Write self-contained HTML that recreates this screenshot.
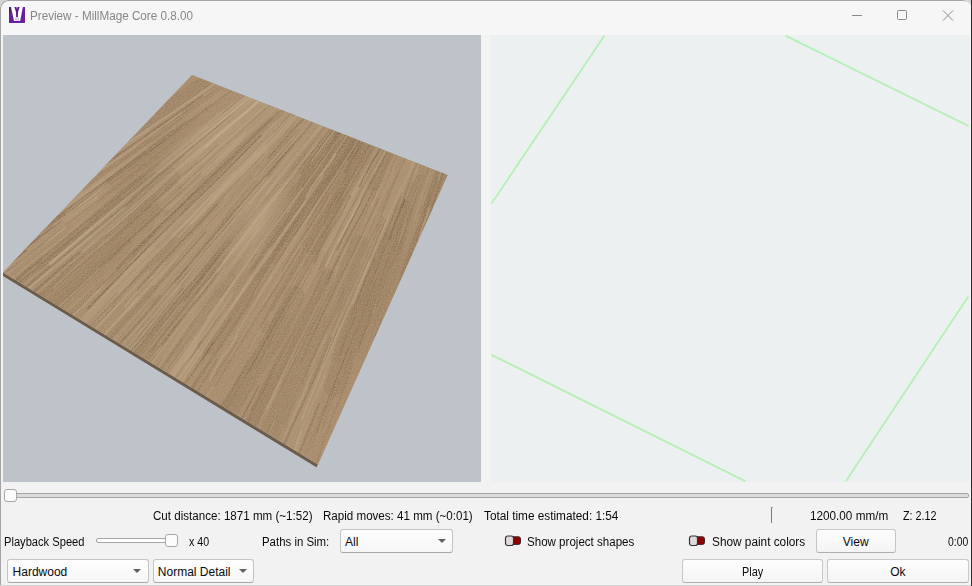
<!DOCTYPE html>
<html><head><meta charset="utf-8">
<style>
html,body{margin:0;padding:0;width:972px;height:586px;overflow:hidden;background:#d4d4d4;}
html::after{content:"";position:absolute;left:971px;top:0;width:1px;height:586px;background:#2c2c2c;}
html::before{content:"";position:absolute;left:0;top:585px;width:971px;height:1px;background:#8c8c8c;}
body{font-family:"Liberation Sans",sans-serif;font-size:12px;color:#1c1c1c;position:relative;}
.win{position:absolute;left:0;top:0;width:971px;height:585px;background:#f2f2f2;border-radius:8px 8px 0 0;overflow:hidden;}
.frame{position:absolute;left:0;top:0;width:971px;height:585px;border-radius:8px 8px 0 0;box-shadow:inset 1px 1px 0 #a4a4a4;pointer-events:none;}
.title{position:absolute;left:0;top:0;width:971px;height:35px;background:#f6f6f6;}
.t{position:absolute;white-space:pre;line-height:12px;transform-origin:0 0;}
.vl{position:absolute;left:3px;top:35px;width:478px;height:447px;background:#bdc3c8;overflow:hidden;}
.vr{position:absolute;left:482px;top:35px;width:488px;height:447px;background:#edf0f1;}
.vr .strip{position:absolute;left:0;top:0;width:9px;height:447px;background:#f2f3f3;}
.combo{position:absolute;background:linear-gradient(#fefefe,#f6f6f6);border:1px solid #c4c4c4;border-bottom-color:#a8a8a8;border-radius:3px;box-sizing:border-box;}
.btn{position:absolute;background:linear-gradient(#fdfdfd,#f4f4f4);border:1px solid #c8c8c8;border-bottom-color:#b0b0b0;border-radius:3px;box-sizing:border-box;}
.arrow{position:absolute;width:0;height:0;border-left:4px solid transparent;border-right:4px solid transparent;border-top:4.5px solid #606060;}
.track{position:absolute;box-sizing:border-box;border:1px solid #a6a6a6;border-radius:2px;}
.handle{position:absolute;box-sizing:border-box;background:#fcfcfc;border:1px solid #a8a8a8;border-radius:3px;}
.tog{position:absolute;}

</style></head><body>
<div class="win">
<div class="title"></div>
<!-- app icon -->
<svg style="position:absolute;left:9px;top:7px" width="16" height="16" viewBox="0 0 16 16">
  <rect x="0" y="0" width="16" height="16" fill="#6a1f9c"/>
  <rect x="0" y="0" width="1.6" height="6" fill="#3a2a3a"/>
  <polygon points="2,0 13.8,0 11.2,14 5,14" fill="#ffffff"/>
  <polygon points="5.3,0 7.5,0 8,2.6 8.5,0 10.7,0 9,5 8.9,10 7.1,10 7,5" fill="#5e1a90"/>
  <rect x="6" y="10" width="4" height="4" fill="#c8b4e0" opacity="0.6"/>
</svg>
<!-- window controls -->
<svg style="position:absolute;left:840px;top:0" width="131" height="35">
  <line x1="12" y1="15.5" x2="22" y2="15.5" stroke="#8a8a8a" stroke-width="1"/>
  <rect x="57.5" y="10.5" width="9" height="9" rx="1" fill="none" stroke="#8a8a8a" stroke-width="1"/>
  <line x1="103" y1="10.5" x2="113" y2="20.5" stroke="#8a8a8a" stroke-width="1"/>
  <line x1="113" y1="10.5" x2="103" y2="20.5" stroke="#8a8a8a" stroke-width="1"/>
</svg>
<div class="vl"><div style="position:absolute;left:-3px;top:-35px;"><svg style="position:absolute;left:0;top:0" width="972" height="586"><defs><clipPath id="bc"><polygon points="192,75 447.5,175 318,464.5 3,272.5"/></clipPath><radialGradient id="lp"><stop offset="0" stop-color="#ccb494" stop-opacity="0.55"/><stop offset="1" stop-color="#ccb494" stop-opacity="0"/></radialGradient><radialGradient id="dp"><stop offset="0" stop-color="#7a6044" stop-opacity="0.25"/><stop offset="1" stop-color="#7a6044" stop-opacity="0"/></radialGradient><filter id="nz" x="0" y="0" width="100%" height="100%"><feTurbulence type="fractalNoise" baseFrequency="0.9" numOctaves="2" seed="3"/><feColorMatrix values="0 0 0 0 0.45  0 0 0 0 0.36  0 0 0 0 0.26  0 0 0 -1.6 1.1"/></filter></defs><polygon points="3,272.5 318,464.5 316.4,467.3 3,276.0" fill="#6c5c4a"/><polygon points="192,75 447.5,175 318,464.5 3,272.5" fill="#a88a68"/><g clip-path="url(#bc)"><path d="M192.7,279.4 L171.8,307.0 L145.9,334.7 L123.2,362.3 L103.4,389.9" stroke="#c8b090" stroke-opacity="0.21" stroke-width="14.5" fill="none" stroke-linecap="round" stroke-linejoin="round"/><path d="M462.2,125.0 L455.9,152.1 L444.6,179.2 L436.5,206.4 L431.4,233.5" stroke="#c2a884" stroke-opacity="0.14" stroke-width="13.1" fill="none" stroke-linecap="round" stroke-linejoin="round"/><path d="M435.7,223.1 L422.0,276.5 L403.2,329.9 L387.7,383.2 L375.0,436.6" stroke="#8e7050" stroke-opacity="0.31" stroke-width="16.8" fill="none" stroke-linecap="round" stroke-linejoin="round"/><path d="M-3.0,286.3 L-55.5,329.3 L-113.1,372.4 L-167.4,415.4 L-218.9,458.5" stroke="#c2a884" stroke-opacity="0.13" stroke-width="5.3" fill="none" stroke-linecap="round" stroke-linejoin="round"/><path d="M419.7,219.3 L405.4,266.9 L386.1,314.4 L370.0,362.0 L356.9,409.6" stroke="#c2a884" stroke-opacity="0.22" stroke-width="10.5" fill="none" stroke-linecap="round" stroke-linejoin="round"/><path d="M328.0,275.3 L304.7,324.4 L276.4,373.6 L251.3,422.7 L229.2,471.9" stroke="#7e6446" stroke-opacity="0.32" stroke-width="12.8" fill="none" stroke-linecap="round" stroke-linejoin="round"/><path d="M321.3,70.2 L292.3,100.2 L258.3,130.2 L227.6,160.1 L199.7,190.1" stroke="#87694a" stroke-opacity="0.23" stroke-width="8.9" fill="none" stroke-linecap="round" stroke-linejoin="round"/><path d="M283.0,98.7 L180.8,196.4 L73.5,294.0 L-30.5,391.7 L-131.7,489.4" stroke="#7e6446" stroke-opacity="0.12" stroke-width="6.1" fill="none" stroke-linecap="round" stroke-linejoin="round"/><path d="M350.8,95.6 L290.3,173.7 L224.7,251.8 L162.4,329.9 L103.0,408.0" stroke="#87694a" stroke-opacity="0.23" stroke-width="21.7" fill="none" stroke-linecap="round" stroke-linejoin="round"/><path d="M325.4,73.0 L284.8,115.6 L239.2,158.2 L196.8,200.8 L157.3,243.5" stroke="#8e7050" stroke-opacity="0.27" stroke-width="10.3" fill="none" stroke-linecap="round" stroke-linejoin="round"/><path d="M221.8,92.7 L137.1,156.9 L47.4,221.1 L-39.1,285.3 L-122.6,349.5" stroke="#c2a884" stroke-opacity="0.26" stroke-width="6.0" fill="none" stroke-linecap="round" stroke-linejoin="round"/><path d="M534.4,157.8 L535.2,192.8 L531.0,227.8 L530.0,262.9 L531.9,297.9" stroke="#8e7050" stroke-opacity="0.14" stroke-width="18.1" fill="none" stroke-linecap="round" stroke-linejoin="round"/><path d="M333.8,45.5 L293.4,84.0 L248.1,122.4 L205.9,160.9 L166.7,199.4" stroke="#c8b090" stroke-opacity="0.32" stroke-width="21.5" fill="none" stroke-linecap="round" stroke-linejoin="round"/><path d="M540.1,99.7 L541.3,141.7 L537.6,183.7 L537.0,225.6 L539.4,267.6" stroke="#c2a884" stroke-opacity="0.32" stroke-width="15.2" fill="none" stroke-linecap="round" stroke-linejoin="round"/><path d="M458.8,98.4 L434.8,172.8 L405.8,247.2 L380.0,321.5 L357.1,395.9" stroke="#87694a" stroke-opacity="0.13" stroke-width="10.6" fill="none" stroke-linecap="round" stroke-linejoin="round"/><path d="M69.3,175.4 L-14.5,233.4 L-103.3,291.4 L-188.8,349.4 L-271.4,407.4" stroke="#c2a884" stroke-opacity="0.31" stroke-width="11.3" fill="none" stroke-linecap="round" stroke-linejoin="round"/><path d="M490.6,109.9 L485.1,145.5 L474.5,181.2 L467.2,216.9 L462.8,252.5" stroke="#87694a" stroke-opacity="0.28" stroke-width="8.1" fill="none" stroke-linecap="round" stroke-linejoin="round"/><path d="M402.7,209.0 L387.0,253.3 L366.2,297.7 L348.7,342.0 L334.1,386.4" stroke="#8e7050" stroke-opacity="0.30" stroke-width="21.0" fill="none" stroke-linecap="round" stroke-linejoin="round"/><path d="M146.3,149.7 L80.2,200.2 L9.1,250.7 L-58.8,301.3 L-123.8,351.8" stroke="#c2a884" stroke-opacity="0.27" stroke-width="5.7" fill="none" stroke-linecap="round" stroke-linejoin="round"/><path d="M510.5,75.4 L502.7,139.1 L490.0,202.8 L480.4,266.5 L473.8,330.1" stroke="#bca27e" stroke-opacity="0.32" stroke-width="13.3" fill="none" stroke-linecap="round" stroke-linejoin="round"/><path d="M416.1,97.1 L406.7,118.5 L392.4,140.0 L381.2,161.4 L373.0,182.8" stroke="#87694a" stroke-opacity="0.30" stroke-width="15.5" fill="none" stroke-linecap="round" stroke-linejoin="round"/><path d="M176.3,188.7 L89.0,269.8 L-3.3,351.0 L-92.3,432.1 L-178.4,513.2" stroke="#87694a" stroke-opacity="0.18" stroke-width="12.6" fill="none" stroke-linecap="round" stroke-linejoin="round"/><path d="M26.8,233.5 L-39.6,283.7 L-111.1,333.9 L-179.3,384.0 L-244.6,434.2" stroke="#8e7050" stroke-opacity="0.25" stroke-width="7.4" fill="none" stroke-linecap="round" stroke-linejoin="round"/><path d="M-44.1,309.6 L-68.9,330.3 L-98.7,351.0 L-125.3,371.7 L-149.0,392.3" stroke="#8e7050" stroke-opacity="0.26" stroke-width="5.6" fill="none" stroke-linecap="round" stroke-linejoin="round"/><path d="M430.2,60.3 L397.3,123.3 L359.4,186.3 L324.7,249.3 L293.0,312.3" stroke="#c8b090" stroke-opacity="0.15" stroke-width="13.2" fill="none" stroke-linecap="round" stroke-linejoin="round"/><path d="M155.5,262.1 L99.6,322.8 L38.8,383.5 L-18.9,444.2 L-73.6,504.9" stroke="#bca27e" stroke-opacity="0.26" stroke-width="5.8" fill="none" stroke-linecap="round" stroke-linejoin="round"/><path d="M354.3,48.5 L288.9,117.4 L218.5,186.3 L151.4,255.3 L87.2,324.2" stroke="#c8b090" stroke-opacity="0.31" stroke-width="16.6" fill="none" stroke-linecap="round" stroke-linejoin="round"/><path d="M235.8,62.5 L118.9,142.8 L-3.0,223.2 L-121.6,303.5 L-237.4,383.9" stroke="#87694a" stroke-opacity="0.24" stroke-width="16.3" fill="none" stroke-linecap="round" stroke-linejoin="round"/><path d="M536.6,234.4 L537.6,277.9 L533.6,321.4 L532.9,365.0 L535.1,408.5" stroke="#c8b090" stroke-opacity="0.31" stroke-width="20.0" fill="none" stroke-linecap="round" stroke-linejoin="round"/><path d="M256.8,208.4 L219.9,256.2 L178.0,304.1 L139.3,351.9 L103.6,399.8" stroke="#bca27e" stroke-opacity="0.13" stroke-width="14.2" fill="none" stroke-linecap="round" stroke-linejoin="round"/><path d="M171.3,176.2 L81.6,255.3 L-13.0,334.4 L-104.4,413.5 L-192.9,492.7" stroke="#7e6446" stroke-opacity="0.25" stroke-width="16.9" fill="none" stroke-linecap="round" stroke-linejoin="round"/><path d="M125.7,293.6 L85.5,337.8 L40.4,381.9 L-1.5,426.1 L-40.5,470.2" stroke="#bca27e" stroke-opacity="0.15" stroke-width="7.4" fill="none" stroke-linecap="round" stroke-linejoin="round"/><path d="M238.1,217.6 L185.6,282.3 L128.0,347.0 L73.7,411.6 L22.3,476.3" stroke="#7e6446" stroke-opacity="0.17" stroke-width="20.2" fill="none" stroke-linecap="round" stroke-linejoin="round"/><path d="M440.9,128.6 L431.3,159.2 L416.7,189.8 L405.4,220.4 L396.9,251.0" stroke="#87694a" stroke-opacity="0.24" stroke-width="8.4" fill="none" stroke-linecap="round" stroke-linejoin="round"/><path d="M194.0,314.5 L161.1,360.3 L123.2,406.1 L88.5,451.9 L56.7,497.6" stroke="#bca27e" stroke-opacity="0.13" stroke-width="19.2" fill="none" stroke-linecap="round" stroke-linejoin="round"/><path d="M102.4,185.6 L20.7,248.3 L-66.0,311.1 L-149.4,373.8 L-230.0,436.6" stroke="#c8b090" stroke-opacity="0.20" stroke-width="13.0" fill="none" stroke-linecap="round" stroke-linejoin="round"/><path d="M459.7,48.8 L416.1,154.2 L367.4,259.5 L322.0,364.9 L279.4,470.3" stroke="#c8b090" stroke-opacity="0.13" stroke-width="19.3" fill="none" stroke-linecap="round" stroke-linejoin="round"/><path d="M49.4,197.9 L-33.3,256.7 L-121.0,315.5 L-205.4,374.3 L-286.9,433.1" stroke="#c8b090" stroke-opacity="0.25" stroke-width="17.0" fill="none" stroke-linecap="round" stroke-linejoin="round"/><path d="M342.0,79.4 L322.2,103.7 L297.3,127.9 L275.7,152.1 L257.1,176.4" stroke="#c8b090" stroke-opacity="0.17" stroke-width="8.2" fill="none" stroke-linecap="round" stroke-linejoin="round"/><path d="M381.4,143.2 L368.8,169.0 L351.2,194.8 L336.8,220.6 L325.3,246.4" stroke="#bca27e" stroke-opacity="0.25" stroke-width="12.6" fill="none" stroke-linecap="round" stroke-linejoin="round"/><path d="M160.6,172.2 L80.8,240.0 L-4.0,307.8 L-85.6,375.6 L-164.3,443.5" stroke="#7e6446" stroke-opacity="0.12" stroke-width="19.0" fill="none" stroke-linecap="round" stroke-linejoin="round"/><path d="M141.9,180.1 L39.2,264.9 L-68.4,349.6 L-172.8,434.4 L-274.3,519.2" stroke="#7e6446" stroke-opacity="0.31" stroke-width="9.6" fill="none" stroke-linecap="round" stroke-linejoin="round"/><path d="M-20.6,301.1 L-75.6,346.2 L-135.7,391.3 L-192.5,436.4 L-246.4,481.4" stroke="#c2a884" stroke-opacity="0.14" stroke-width="19.4" fill="none" stroke-linecap="round" stroke-linejoin="round"/><path d="M92.9,199.3 L-0.4,272.2 L-98.8,345.1 L-193.9,418.0 L-286.2,490.9" stroke="#c2a884" stroke-opacity="0.20" stroke-width="12.7" fill="none" stroke-linecap="round" stroke-linejoin="round"/><path d="M477.2,67.7 L447.7,168.3 L413.1,268.9 L381.8,369.6 L353.4,470.2" stroke="#7e6446" stroke-opacity="0.32" stroke-width="21.1" fill="none" stroke-linecap="round" stroke-linejoin="round"/><path d="M401.1,314.5 L387.3,365.2 L368.5,415.8 L352.9,466.5 L340.2,517.2" stroke="#87694a" stroke-opacity="0.30" stroke-width="20.7" fill="none" stroke-linecap="round" stroke-linejoin="round"/><path d="M345.6,137.6 L329.1,163.8 L307.6,190.1 L289.3,216.4 L274.0,242.6" stroke="#7e6446" stroke-opacity="0.29" stroke-width="18.4" fill="none" stroke-linecap="round" stroke-linejoin="round"/><path d="M335.7,101.1 L258.8,194.6 L176.9,288.1 L98.2,381.6 L22.4,475.1" stroke="#c8b090" stroke-opacity="0.30" stroke-width="14.4" fill="none" stroke-linecap="round" stroke-linejoin="round"/><path d="M350.0,79.3 L323.2,112.7 L291.3,146.2 L262.7,179.6 L237.0,213.0" stroke="#bca27e" stroke-opacity="0.28" stroke-width="5.6" fill="none" stroke-linecap="round" stroke-linejoin="round"/><path d="M228.3,286.4 L199.3,328.6 L165.4,370.9 L134.7,413.1 L106.9,455.3" stroke="#bca27e" stroke-opacity="0.21" stroke-width="17.3" fill="none" stroke-linecap="round" stroke-linejoin="round"/><path d="M359.5,244.1 L337.1,295.4 L309.7,346.7 L285.6,398.0 L264.4,449.2" stroke="#7e6446" stroke-opacity="0.18" stroke-width="17.9" fill="none" stroke-linecap="round" stroke-linejoin="round"/><path d="M217.2,307.3 L183.9,356.2 L145.5,405.1 L110.5,453.9 L78.3,502.8" stroke="#c8b090" stroke-opacity="0.25" stroke-width="19.3" fill="none" stroke-linecap="round" stroke-linejoin="round"/><path d="M339.0,200.4 L321.9,232.5 L299.9,264.5 L281.0,296.5 L265.1,328.6" stroke="#7e6446" stroke-opacity="0.22" stroke-width="10.2" fill="none" stroke-linecap="round" stroke-linejoin="round"/><path d="M404.9,52.3 L330.4,161.2 L250.9,270.1 L174.7,379.0 L101.3,488.0" stroke="#c2a884" stroke-opacity="0.23" stroke-width="13.6" fill="none" stroke-linecap="round" stroke-linejoin="round"/><path d="M403.1,58.5 L355.8,129.8 L303.5,201.2 L254.4,272.6 L208.2,344.0" stroke="#87694a" stroke-opacity="0.26" stroke-width="21.8" fill="none" stroke-linecap="round" stroke-linejoin="round"/><path d="M257.8,178.1 L222.3,220.3 L181.9,262.5 L144.7,304.8 L110.4,347.0" stroke="#c8b090" stroke-opacity="0.17" stroke-width="21.3" fill="none" stroke-linecap="round" stroke-linejoin="round"/><path d="M506.3,93.6 L496.6,167.1 L482.0,240.6 L470.5,314.1 L462.0,387.6" stroke="#bca27e" stroke-opacity="0.18" stroke-width="20.9" fill="none" stroke-linecap="round" stroke-linejoin="round"/><path d="M516.2,83.5 L515.6,104.6 L509.9,125.7 L507.5,146.7 L508.0,167.8" stroke="#c2a884" stroke-opacity="0.13" stroke-width="7.2" fill="none" stroke-linecap="round" stroke-linejoin="round"/><path d="M123.4,244.7 L97.3,270.6 L66.2,296.6 L38.4,322.6 L13.4,348.6" stroke="#8e7050" stroke-opacity="0.14" stroke-width="17.3" fill="none" stroke-linecap="round" stroke-linejoin="round"/><path d="M401.7,46.5 L342.8,128.8 L278.8,211.1 L218.2,293.3 L160.4,375.6" stroke="#7e6446" stroke-opacity="0.30" stroke-width="9.3" fill="none" stroke-linecap="round" stroke-linejoin="round"/><path d="M477.2,101.1 L468.8,139.4 L455.3,177.8 L445.1,216.1 L437.8,254.4" stroke="#bca27e" stroke-opacity="0.23" stroke-width="15.5" fill="none" stroke-linecap="round" stroke-linejoin="round"/><path d="M348.3,137.3 L326.9,171.0 L300.5,204.7 L277.3,238.4 L257.1,272.2" stroke="#7e6446" stroke-opacity="0.25" stroke-width="15.0" fill="none" stroke-linecap="round" stroke-linejoin="round"/><path d="M409.7,77.5 L386.5,119.2 L358.3,160.9 L333.4,202.6 L311.3,244.3" stroke="#87694a" stroke-opacity="0.30" stroke-width="20.1" fill="none" stroke-linecap="round" stroke-linejoin="round"/><path d="M384.1,237.4 L373.4,267.5 L357.7,297.7 L345.2,327.8 L335.7,358.0" stroke="#8e7050" stroke-opacity="0.23" stroke-width="9.4" fill="none" stroke-linecap="round" stroke-linejoin="round"/><path d="M295.2,295.2 L266.0,350.2 L231.8,405.3 L200.9,460.4 L172.9,515.4" stroke="#7e6446" stroke-opacity="0.26" stroke-width="18.6" fill="none" stroke-linecap="round" stroke-linejoin="round"/><path d="M-12.7,273.2 L-81.8,326.7 L-156.0,380.2 L-226.9,433.6 L-294.8,487.1" stroke="#bca27e" stroke-opacity="0.32" stroke-width="13.6" fill="none" stroke-linecap="round" stroke-linejoin="round"/><path d="M274.2,199.2 L253.5,228.1 L227.9,256.9 L205.5,285.7 L186.0,314.5" stroke="#bca27e" stroke-opacity="0.22" stroke-width="5.4" fill="none" stroke-linecap="round" stroke-linejoin="round"/><path d="M283.5,66.7 L253.8,92.5 L219.1,118.2 L187.6,144.0 L159.1,169.8" stroke="#c8b090" stroke-opacity="0.31" stroke-width="8.5" fill="none" stroke-linecap="round" stroke-linejoin="round"/><path d="M519.0,159.4 L517.2,204.3 L510.4,249.1 L506.9,294.0 L506.2,338.9" stroke="#c8b090" stroke-opacity="0.20" stroke-width="12.9" fill="none" stroke-linecap="round" stroke-linejoin="round"/><path d="M263.0,90.8 L194.1,150.4 L120.2,210.0 L49.6,269.7 L-18.2,329.3" stroke="#c2a884" stroke-opacity="0.29" stroke-width="11.3" fill="none" stroke-linecap="round" stroke-linejoin="round"/><path d="M379.3,245.0 L376.7,253.2 L372.0,261.3 L368.6,269.5 L366.4,277.6" stroke="#bea684" stroke-opacity="0.21" stroke-width="1.1" fill="none"/><path d="M458.5,267.9 L456.0,283.5 L451.5,299.1 L448.4,314.7 L446.4,330.3" stroke="#bea684" stroke-opacity="0.48" stroke-width="2.2" fill="none"/><path d="M395.9,86.5 L371.8,125.6 L345.7,164.7 L320.8,203.7 L297.2,242.8" stroke="#d0bc9e" stroke-opacity="0.25" stroke-width="0.9" fill="none"/><path d="M-26.1,317.9 L-74.6,358.0 L-125.1,398.1 L-174.4,438.2 L-222.4,478.4" stroke="#7a6046" stroke-opacity="0.46" stroke-width="1.1" fill="none"/><path d="M419.8,176.7 L410.0,204.1 L398.2,231.5 L387.6,259.0 L378.3,286.4" stroke="#6e553c" stroke-opacity="0.17" stroke-width="1.1" fill="none"/><path d="M119.8,149.2 L51.0,197.6 L-19.7,245.9 L-89.2,294.3 L-157.5,342.6" stroke="#bea684" stroke-opacity="0.17" stroke-width="0.9" fill="none"/><path d="M319.6,70.7 L290.0,100.1 L258.3,129.5 L228.0,158.9 L198.8,188.2" stroke="#bea684" stroke-opacity="0.21" stroke-width="0.7" fill="none"/><path d="M396.1,49.1 L371.3,82.8 L344.5,116.4 L319.1,150.1 L294.8,183.7" stroke="#d0bc9e" stroke-opacity="0.49" stroke-width="0.7" fill="none"/><path d="M432.6,118.2 L423.4,141.6 L412.3,165.1 L402.4,188.6 L393.7,212.0" stroke="#84694c" stroke-opacity="0.17" stroke-width="0.9" fill="none"/><path d="M32.4,243.1 L-30.7,291.7 L-95.9,340.3 L-159.7,388.9 L-222.4,437.5" stroke="#7a6046" stroke-opacity="0.34" stroke-width="0.9" fill="none"/><path d="M263.5,279.0 L238.0,318.8 L210.5,358.6 L184.3,398.3 L159.3,438.1" stroke="#bea684" stroke-opacity="0.18" stroke-width="0.5" fill="none"/><path d="M-15.5,256.8 L-60.4,289.6 L-107.2,322.5 L-152.8,355.3 L-197.2,388.2" stroke="#6e553c" stroke-opacity="0.45" stroke-width="0.7" fill="none"/><path d="M278.8,165.0 L253.9,195.0 L227.0,225.0 L201.4,255.1 L177.0,285.1" stroke="#84694c" stroke-opacity="0.29" stroke-width="1.1" fill="none"/><path d="M166.5,339.1 L160.5,347.7 L152.6,356.4 L145.9,365.0 L140.4,373.7" stroke="#d0bc9e" stroke-opacity="0.38" stroke-width="0.9" fill="none"/><path d="M371.6,313.7 L368.8,323.5 L363.9,333.2 L360.2,343.0 L357.8,352.7" stroke="#6e553c" stroke-opacity="0.29" stroke-width="1.4" fill="none"/><path d="M325.9,69.4 L280.1,115.4 L232.3,161.4 L185.8,207.4 L140.4,253.3" stroke="#84694c" stroke-opacity="0.48" stroke-width="1.1" fill="none"/><path d="M351.7,79.4 L316.7,121.3 L279.7,163.3 L244.0,205.2 L209.4,247.1" stroke="#6e553c" stroke-opacity="0.17" stroke-width="1.1" fill="none"/><path d="M501.3,86.0 L495.8,120.1 L488.3,154.1 L482.1,188.1 L477.1,222.2" stroke="#c8b08e" stroke-opacity="0.36" stroke-width="0.7" fill="none"/><path d="M351.5,89.7 L330.8,116.1 L308.0,142.4 L286.6,168.7 L266.3,195.0" stroke="#d0bc9e" stroke-opacity="0.33" stroke-width="0.7" fill="none"/><path d="M359.8,207.8 L339.4,248.4 L317.0,288.9 L296.0,329.5 L276.0,370.1" stroke="#bea684" stroke-opacity="0.35" stroke-width="1.1" fill="none"/><path d="M274.6,232.4 L254.8,261.3 L233.0,290.2 L212.5,319.1 L193.1,347.9" stroke="#bea684" stroke-opacity="0.20" stroke-width="0.7" fill="none"/><path d="M104.8,283.9 L66.4,322.2 L26.0,360.6 L-13.1,398.9 L-51.0,437.2" stroke="#d0bc9e" stroke-opacity="0.25" stroke-width="1.4" fill="none"/><path d="M407.7,139.6 L385.0,188.7 L360.3,237.9 L336.9,287.0 L314.7,336.1" stroke="#c8b08e" stroke-opacity="0.22" stroke-width="0.7" fill="none"/><path d="M493.2,143.8 L492.5,152.5 L489.7,161.1 L488.2,169.7 L487.9,178.4" stroke="#6e553c" stroke-opacity="0.15" stroke-width="1.8" fill="none"/><path d="M-227.0,405.2 L-246.3,419.5 L-267.6,433.8 L-287.6,448.2 L-306.4,462.5" stroke="#6e553c" stroke-opacity="0.41" stroke-width="0.7" fill="none"/><path d="M180.2,177.5 L136.9,216.6 L91.6,255.8 L47.7,294.9 L4.8,334.1" stroke="#7a6046" stroke-opacity="0.22" stroke-width="0.9" fill="none"/><path d="M420.8,289.5 L410.2,329.7 L397.6,369.8 L386.3,410.0 L376.2,450.2" stroke="#d0bc9e" stroke-opacity="0.43" stroke-width="0.5" fill="none"/><path d="M158.8,187.6 L118.8,222.9 L76.8,258.1 L36.1,293.4 L-3.4,328.7" stroke="#d0bc9e" stroke-opacity="0.43" stroke-width="1.1" fill="none"/><path d="M525.1,113.5 L523.3,148.8 L519.5,184.1 L517.0,219.4 L515.6,254.7" stroke="#84694c" stroke-opacity="0.44" stroke-width="0.9" fill="none"/><path d="M313.5,212.8 L293.9,244.4 L272.4,276.1 L252.1,307.7 L233.0,339.3" stroke="#c8b08e" stroke-opacity="0.34" stroke-width="1.1" fill="none"/><path d="M458.5,125.3 L448.0,160.9 L435.5,196.6 L424.3,232.2 L414.3,267.9" stroke="#6e553c" stroke-opacity="0.18" stroke-width="1.1" fill="none"/><path d="M-176.8,392.7 L-198.5,409.5 L-222.2,426.3 L-244.6,443.1 L-265.9,459.9" stroke="#84694c" stroke-opacity="0.26" stroke-width="0.9" fill="none"/><path d="M349.9,216.4 L333.1,249.2 L314.3,281.9 L296.8,314.7 L280.5,347.5" stroke="#6e553c" stroke-opacity="0.26" stroke-width="0.9" fill="none"/><path d="M431.0,436.9 L426.6,463.9 L420.1,490.9 L414.9,517.9 L410.9,544.9" stroke="#d0bc9e" stroke-opacity="0.34" stroke-width="1.8" fill="none"/><path d="M-47.7,371.4 L-56.6,379.9 L-67.6,388.5 L-77.3,397.0 L-85.9,405.5" stroke="#c8b08e" stroke-opacity="0.18" stroke-width="1.8" fill="none"/><path d="M374.7,187.3 L363.2,211.4 L349.7,235.5 L337.5,259.6 L326.5,283.6" stroke="#6e553c" stroke-opacity="0.41" stroke-width="1.4" fill="none"/><path d="M89.4,221.7 L36.0,265.6 L-19.4,309.4 L-73.5,353.2 L-126.5,397.0" stroke="#c8b08e" stroke-opacity="0.18" stroke-width="1.4" fill="none"/><path d="M446.6,158.4 L444.7,166.8 L440.7,175.3 L438.1,183.7 L436.6,192.1" stroke="#84694c" stroke-opacity="0.21" stroke-width="0.7" fill="none"/><path d="M431.5,258.2 L426.2,279.9 L418.9,301.6 L412.9,323.3 L408.1,345.1" stroke="#84694c" stroke-opacity="0.26" stroke-width="1.1" fill="none"/><path d="M65.1,301.4 L53.4,313.1 L39.7,324.7 L27.3,336.3 L16.0,348.0" stroke="#c8b08e" stroke-opacity="0.16" stroke-width="0.5" fill="none"/><path d="M371.7,403.1 L365.5,425.0 L357.4,446.8 L350.6,468.7 L345.0,490.6" stroke="#6e553c" stroke-opacity="0.32" stroke-width="1.1" fill="none"/><path d="M232.7,237.5 L208.8,267.8 L182.9,298.1 L158.3,328.5 L134.9,358.8" stroke="#7a6046" stroke-opacity="0.39" stroke-width="0.9" fill="none"/><path d="M313.2,370.5 L298.0,406.3 L280.7,442.2 L264.8,478.0 L250.0,513.8" stroke="#c8b08e" stroke-opacity="0.29" stroke-width="1.8" fill="none"/><path d="M394.9,423.1 L386.6,457.8 L376.3,492.5 L367.2,527.2 L359.3,562.0" stroke="#6e553c" stroke-opacity="0.46" stroke-width="2.2" fill="none"/><path d="M288.4,208.2 L279.3,221.9 L268.2,235.6 L258.3,249.3 L249.6,263.0" stroke="#6e553c" stroke-opacity="0.30" stroke-width="1.8" fill="none"/><path d="M401.0,195.7 L389.2,225.7 L375.4,255.7 L362.9,285.7 L351.6,315.7" stroke="#6e553c" stroke-opacity="0.26" stroke-width="1.8" fill="none"/><path d="M67.7,299.2 L25.2,339.7 L-19.4,380.1 L-62.6,420.6 L-104.7,461.1" stroke="#84694c" stroke-opacity="0.19" stroke-width="0.5" fill="none"/><path d="M-116.6,403.7 L-126.7,412.8 L-138.9,421.8 L-149.7,430.9 L-159.3,439.9" stroke="#c8b08e" stroke-opacity="0.35" stroke-width="0.5" fill="none"/><path d="M-71.0,326.9 L-112.8,359.7 L-156.7,392.5 L-199.3,425.2 L-240.7,458.0" stroke="#84694c" stroke-opacity="0.23" stroke-width="0.7" fill="none"/><path d="M-13.3,343.0 L-36.2,363.8 L-61.1,384.5 L-84.7,405.2 L-107.1,426.0" stroke="#d0bc9e" stroke-opacity="0.21" stroke-width="0.7" fill="none"/><path d="M305.4,201.0 L273.1,249.2 L238.7,297.3 L205.7,345.4 L173.8,393.5" stroke="#d0bc9e" stroke-opacity="0.32" stroke-width="2.2" fill="none"/><path d="M360.3,199.8 L352.1,216.5 L342.0,233.3 L333.1,250.0 L325.5,266.7" stroke="#d0bc9e" stroke-opacity="0.45" stroke-width="2.2" fill="none"/><path d="M-82.9,349.7 L-133.9,390.6 L-187.0,431.6 L-238.8,472.6 L-289.4,513.6" stroke="#84694c" stroke-opacity="0.43" stroke-width="2.2" fill="none"/><path d="M42.2,220.0 L18.3,238.0 L-7.6,256.0 L-32.2,273.9 L-55.7,291.9" stroke="#d0bc9e" stroke-opacity="0.47" stroke-width="0.7" fill="none"/><path d="M333.2,97.9 L294.1,144.0 L253.0,190.1 L213.2,236.2 L174.6,282.3" stroke="#6e553c" stroke-opacity="0.42" stroke-width="2.2" fill="none"/><path d="M415.0,253.8 L411.3,267.7 L405.6,281.6 L401.1,295.5 L397.9,309.4" stroke="#bea684" stroke-opacity="0.24" stroke-width="0.7" fill="none"/><path d="M461.3,73.0 L454.9,91.9 L446.4,110.9 L439.3,129.9 L433.4,148.9" stroke="#6e553c" stroke-opacity="0.44" stroke-width="0.5" fill="none"/><path d="M286.6,422.2 L272.7,454.6 L256.8,487.1 L242.1,519.5 L228.7,551.9" stroke="#bea684" stroke-opacity="0.31" stroke-width="0.5" fill="none"/><path d="M402.2,406.7 L400.0,418.1 L395.9,429.4 L393.0,440.8 L391.3,452.2" stroke="#6e553c" stroke-opacity="0.30" stroke-width="0.9" fill="none"/><path d="M469.3,103.0 L457.2,145.9 L443.1,188.7 L430.3,231.6 L418.7,274.5" stroke="#7a6046" stroke-opacity="0.33" stroke-width="0.7" fill="none"/><path d="M164.5,226.9 L126.7,264.8 L86.9,302.7 L48.4,340.6 L11.0,378.5" stroke="#84694c" stroke-opacity="0.26" stroke-width="0.9" fill="none"/><path d="M191.7,224.7 L146.3,273.3 L98.8,321.9 L52.7,370.5 L7.7,419.1" stroke="#84694c" stroke-opacity="0.29" stroke-width="1.8" fill="none"/><path d="M433.0,230.1 L427.9,250.1 L420.7,270.0 L414.9,290.0 L410.2,310.0" stroke="#7a6046" stroke-opacity="0.40" stroke-width="1.8" fill="none"/><path d="M-15.5,286.4 L-40.4,306.3 L-67.4,326.1 L-93.0,346.0 L-117.4,365.8" stroke="#84694c" stroke-opacity="0.22" stroke-width="2.2" fill="none"/><path d="M165.3,262.2 L155.7,273.4 L144.0,284.6 L133.7,295.8 L124.5,307.0" stroke="#d0bc9e" stroke-opacity="0.41" stroke-width="1.4" fill="none"/><path d="M192.7,149.5 L160.8,177.0 L126.9,204.5 L94.2,231.9 L62.8,259.4" stroke="#d0bc9e" stroke-opacity="0.26" stroke-width="1.1" fill="none"/><path d="M300.9,288.7 L294.4,301.8 L285.8,314.9 L278.5,327.9 L272.4,341.0" stroke="#c8b08e" stroke-opacity="0.19" stroke-width="1.1" fill="none"/><path d="M331.3,225.3 L310.6,262.7 L287.9,300.1 L266.5,337.5 L246.3,374.9" stroke="#7a6046" stroke-opacity="0.16" stroke-width="0.7" fill="none"/><path d="M-104.7,348.5 L-132.8,370.5 L-163.0,392.5 L-191.8,414.5 L-219.5,436.6" stroke="#6e553c" stroke-opacity="0.30" stroke-width="0.5" fill="none"/><path d="M387.6,368.4 L381.0,392.3 L372.5,416.2 L365.3,440.2 L359.2,464.1" stroke="#6e553c" stroke-opacity="0.42" stroke-width="1.4" fill="none"/><path d="M82.8,320.0 L34.8,369.2 L-15.2,418.4 L-63.9,467.7 L-111.4,516.9" stroke="#bea684" stroke-opacity="0.29" stroke-width="1.1" fill="none"/><path d="M432.3,172.4 L425.3,194.5 L416.3,216.5 L408.6,238.5 L402.1,260.6" stroke="#bea684" stroke-opacity="0.16" stroke-width="1.8" fill="none"/><path d="M270.9,355.4 L248.5,398.0 L224.0,440.6 L200.9,483.1 L178.9,525.7" stroke="#c8b08e" stroke-opacity="0.33" stroke-width="0.5" fill="none"/><path d="M301.0,259.3 L288.3,281.8 L273.6,304.3 L260.2,326.8 L247.9,349.2" stroke="#84694c" stroke-opacity="0.47" stroke-width="0.7" fill="none"/><path d="M248.0,246.4 L220.2,284.3 L190.4,322.2 L161.8,360.1 L134.5,398.0" stroke="#c8b08e" stroke-opacity="0.50" stroke-width="0.7" fill="none"/><path d="M467.9,119.2 L465.5,130.2 L461.1,141.2 L458.0,152.3 L456.0,163.3" stroke="#c8b08e" stroke-opacity="0.37" stroke-width="0.7" fill="none"/><path d="M-75.5,411.6 L-100.1,434.5 L-126.7,457.3 L-152.1,480.2 L-176.2,503.0" stroke="#7a6046" stroke-opacity="0.27" stroke-width="1.4" fill="none"/><path d="M102.4,401.6 L78.5,432.2 L52.6,462.8 L28.0,493.4 L4.5,524.0" stroke="#84694c" stroke-opacity="0.20" stroke-width="0.5" fill="none"/><path d="M153.4,436.9 L125.9,479.1 L96.3,521.3 L68.0,563.6 L40.9,605.8" stroke="#c8b08e" stroke-opacity="0.47" stroke-width="1.4" fill="none"/><path d="M209.9,398.8 L199.8,416.5 L187.6,434.3 L176.8,452.0 L167.1,469.7" stroke="#c8b08e" stroke-opacity="0.25" stroke-width="0.5" fill="none"/><path d="M402.8,70.5 L397.8,79.4 L390.7,88.2 L385.0,97.1 L380.4,106.0" stroke="#84694c" stroke-opacity="0.34" stroke-width="2.2" fill="none"/><path d="M-114.8,402.6 L-154.4,436.2 L-196.1,469.9 L-236.4,503.5 L-275.6,537.2" stroke="#84694c" stroke-opacity="0.45" stroke-width="1.8" fill="none"/><path d="M432.6,53.2 L416.6,83.2 L398.6,113.1 L381.9,143.0 L366.4,173.0" stroke="#6e553c" stroke-opacity="0.29" stroke-width="2.2" fill="none"/><path d="M178.9,137.7 L119.1,184.8 L57.2,231.8 L-3.4,278.9 L-62.8,326.0" stroke="#84694c" stroke-opacity="0.20" stroke-width="1.1" fill="none"/><path d="M65.7,201.3 L27.0,229.9 L-13.7,258.6 L-53.1,287.2 L-91.4,315.9" stroke="#84694c" stroke-opacity="0.43" stroke-width="2.2" fill="none"/><path d="M4.8,265.9 L-26.9,290.7 L-60.6,315.5 L-93.0,340.3 L-124.2,365.1" stroke="#84694c" stroke-opacity="0.47" stroke-width="0.9" fill="none"/><path d="M163.1,213.6 L130.4,245.1 L95.7,276.7 L62.4,308.2 L30.1,339.8" stroke="#bea684" stroke-opacity="0.29" stroke-width="1.1" fill="none"/><path d="M440.0,401.7 L436.8,422.8 L431.5,444.0 L427.6,465.1 L424.8,486.2" stroke="#84694c" stroke-opacity="0.30" stroke-width="1.4" fill="none"/><path d="M-40.7,279.0 L-94.2,318.5 L-149.7,357.9 L-204.0,397.4 L-257.0,436.8" stroke="#d0bc9e" stroke-opacity="0.41" stroke-width="1.8" fill="none"/><path d="M169.4,218.8 L140.5,247.6 L109.6,276.5 L80.0,305.4 L51.6,334.2" stroke="#c8b08e" stroke-opacity="0.19" stroke-width="1.4" fill="none"/><path d="M290.8,135.7 L273.2,156.2 L253.5,176.7 L235.1,197.2 L217.9,217.7" stroke="#6e553c" stroke-opacity="0.33" stroke-width="0.5" fill="none"/><path d="M136.7,306.3 L97.6,350.6 L56.4,394.9 L16.6,439.3 L-22.1,483.6" stroke="#bea684" stroke-opacity="0.49" stroke-width="0.7" fill="none"/><path d="M187.2,266.7 L148.3,312.6 L107.4,358.5 L67.8,404.4 L29.3,450.3" stroke="#84694c" stroke-opacity="0.41" stroke-width="2.2" fill="none"/><path d="M61.2,221.3 L35.6,241.4 L7.9,261.4 L-18.4,281.5 L-43.6,301.6" stroke="#84694c" stroke-opacity="0.35" stroke-width="2.2" fill="none"/><path d="M384.2,220.0 L371.8,250.1 L357.4,280.1 L344.4,310.1 L332.5,340.2" stroke="#6e553c" stroke-opacity="0.30" stroke-width="0.5" fill="none"/><path d="M82.2,221.9 L56.9,242.8 L29.5,263.6 L3.4,284.5 L-21.6,305.3" stroke="#c8b08e" stroke-opacity="0.26" stroke-width="1.8" fill="none"/><path d="M277.0,121.1 L233.8,165.1 L188.5,209.1 L144.6,253.1 L101.8,297.1" stroke="#d0bc9e" stroke-opacity="0.46" stroke-width="0.7" fill="none"/><path d="M450.4,46.4 L434.4,80.9 L416.4,115.4 L399.6,149.9 L384.1,184.4" stroke="#7a6046" stroke-opacity="0.46" stroke-width="0.5" fill="none"/><path d="M273.1,419.8 L250.4,468.8 L225.7,517.8 L202.2,566.8 L180.0,615.8" stroke="#84694c" stroke-opacity="0.23" stroke-width="1.4" fill="none"/><path d="M382.8,149.6 L369.7,174.9 L354.6,200.3 L340.8,225.7 L328.2,251.0" stroke="#d0bc9e" stroke-opacity="0.49" stroke-width="0.9" fill="none"/><path d="M486.5,107.8 L477.3,151.9 L466.1,196.0 L456.1,240.1 L447.4,284.2" stroke="#d0bc9e" stroke-opacity="0.30" stroke-width="0.9" fill="none"/><path d="M47.8,240.6 L22.8,260.6 L-4.2,280.7 L-29.9,300.7 L-54.5,320.8" stroke="#6e553c" stroke-opacity="0.40" stroke-width="1.8" fill="none"/><path d="M246.7,131.6 L225.8,151.9 L202.8,172.2 L181.1,192.5 L160.6,212.8" stroke="#c8b08e" stroke-opacity="0.36" stroke-width="2.2" fill="none"/><path d="M508.5,76.0 L501.4,125.3 L492.3,174.6 L484.5,223.8 L477.8,273.1" stroke="#6e553c" stroke-opacity="0.37" stroke-width="1.8" fill="none"/><path d="M191.5,274.6 L166.9,305.0 L140.2,335.3 L114.8,365.6 L90.6,396.0" stroke="#6e553c" stroke-opacity="0.15" stroke-width="1.4" fill="none"/><path d="M318.4,115.8 L306.2,130.9 L291.9,146.1 L278.9,161.2 L267.1,176.3" stroke="#7a6046" stroke-opacity="0.50" stroke-width="1.4" fill="none"/><path d="M458.6,53.4 L447.7,80.6 L434.9,107.7 L423.3,134.8 L412.9,161.9" stroke="#6e553c" stroke-opacity="0.50" stroke-width="0.5" fill="none"/><path d="M458.2,65.6 L442.5,106.1 L424.9,146.6 L408.5,187.1 L393.3,227.7" stroke="#7a6046" stroke-opacity="0.17" stroke-width="1.1" fill="none"/><path d="M472.7,242.3 L465.5,285.7 L456.3,329.1 L448.4,372.5 L441.6,416.0" stroke="#c8b08e" stroke-opacity="0.33" stroke-width="0.9" fill="none"/><path d="M296.1,351.9 L289.6,366.4 L281.2,380.9 L274.0,395.4 L268.0,409.9" stroke="#bea684" stroke-opacity="0.21" stroke-width="1.4" fill="none"/><path d="M241.6,354.6 L217.5,395.7 L191.4,436.9 L166.6,478.0 L143.0,519.1" stroke="#bea684" stroke-opacity="0.42" stroke-width="0.7" fill="none"/><path d="M217.7,144.5 L200.4,160.6 L181.1,176.7 L163.0,192.9 L146.2,209.0" stroke="#84694c" stroke-opacity="0.36" stroke-width="1.1" fill="none"/><path d="M501.7,283.3 L499.1,316.7 L494.6,350.0 L491.3,383.4 L489.3,416.8" stroke="#c8b08e" stroke-opacity="0.26" stroke-width="0.5" fill="none"/><path d="M478.9,52.4 L475.7,64.7 L470.4,77.1 L466.3,89.4 L463.5,101.8" stroke="#7a6046" stroke-opacity="0.45" stroke-width="1.4" fill="none"/><path d="M249.8,98.5 L225.6,119.2 L199.4,139.9 L174.5,160.6 L150.8,181.4" stroke="#84694c" stroke-opacity="0.23" stroke-width="1.8" fill="none"/><path d="M137.4,145.9 L92.9,178.4 L46.3,210.9 L1.1,243.4 L-43.0,276.0" stroke="#bea684" stroke-opacity="0.33" stroke-width="0.9" fill="none"/><path d="M212.0,103.9 L163.8,140.8 L113.5,177.6 L64.6,214.5 L16.9,251.3" stroke="#7a6046" stroke-opacity="0.24" stroke-width="2.2" fill="none"/><path d="M446.7,185.8 L442.5,202.5 L436.4,219.2 L431.5,235.9 L427.8,252.5" stroke="#7a6046" stroke-opacity="0.29" stroke-width="2.2" fill="none"/><path d="M519.9,97.8 L518.0,124.7 L514.1,151.5 L511.5,178.4 L510.1,205.2" stroke="#84694c" stroke-opacity="0.50" stroke-width="0.5" fill="none"/><path d="M443.7,96.6 L434.5,120.8 L423.2,145.0 L413.3,169.2 L404.5,193.4" stroke="#7a6046" stroke-opacity="0.46" stroke-width="0.5" fill="none"/><path d="M54.0,326.8 L4.0,375.8 L-48.0,424.8 L-98.7,473.8 L-148.3,522.7" stroke="#c8b08e" stroke-opacity="0.39" stroke-width="1.1" fill="none"/><path d="M332.7,207.3 L326.8,218.5 L318.9,229.6 L312.2,240.8 L306.8,252.0" stroke="#84694c" stroke-opacity="0.45" stroke-width="0.9" fill="none"/><path d="M260.0,104.2 L224.0,136.5 L186.1,168.9 L149.4,201.3 L113.8,233.7" stroke="#84694c" stroke-opacity="0.23" stroke-width="0.9" fill="none"/><path d="M508.9,393.8 L506.6,440.5 L502.3,487.3 L499.3,534.1 L497.5,580.8" stroke="#84694c" stroke-opacity="0.47" stroke-width="1.8" fill="none"/><path d="M-56.6,352.5 L-75.9,369.2 L-97.2,385.8 L-117.2,402.5 L-136.1,419.2" stroke="#6e553c" stroke-opacity="0.28" stroke-width="2.2" fill="none"/><path d="M209.1,200.1 L178.2,232.8 L145.3,265.6 L113.7,298.3 L83.2,331.0" stroke="#c8b08e" stroke-opacity="0.32" stroke-width="0.7" fill="none"/><path d="M335.4,385.1 L329.7,401.3 L322.1,417.5 L315.8,433.7 L310.7,449.9" stroke="#84694c" stroke-opacity="0.39" stroke-width="1.1" fill="none"/><path d="M272.5,149.8 L265.6,158.1 L256.7,166.4 L249.2,174.7 L242.8,183.0" stroke="#7a6046" stroke-opacity="0.28" stroke-width="0.5" fill="none"/><path d="M-21.6,326.1 L-43.5,345.0 L-67.4,363.9 L-90.0,382.8 L-111.5,401.7" stroke="#84694c" stroke-opacity="0.47" stroke-width="0.9" fill="none"/><path d="M276.2,136.4 L236.0,179.5 L193.8,222.7 L152.9,265.9 L113.2,309.0" stroke="#d0bc9e" stroke-opacity="0.20" stroke-width="0.7" fill="none"/><path d="M-148.9,393.0 L-175.6,414.3 L-204.2,435.6 L-231.6,456.9 L-257.8,478.2" stroke="#d0bc9e" stroke-opacity="0.18" stroke-width="0.9" fill="none"/><path d="M437.8,135.3 L435.1,144.6 L430.4,153.8 L426.9,163.0 L424.7,172.3" stroke="#d0bc9e" stroke-opacity="0.29" stroke-width="1.4" fill="none"/><path d="M102.5,209.6 L65.2,240.2 L25.9,270.9 L-12.0,301.5 L-48.8,332.1" stroke="#6e553c" stroke-opacity="0.26" stroke-width="1.4" fill="none"/><path d="M-27.2,306.5 L-43.8,320.2 L-62.4,334.0 L-79.7,347.7 L-95.8,361.5" stroke="#7a6046" stroke-opacity="0.40" stroke-width="1.8" fill="none"/><path d="M146.7,194.6 L95.8,238.9 L42.9,283.2 L-8.7,327.5 L-59.2,371.8" stroke="#7a6046" stroke-opacity="0.29" stroke-width="0.9" fill="none"/><path d="M314.1,56.3 L305.1,64.8 L294.1,73.4 L284.5,81.9 L276.0,90.4" stroke="#84694c" stroke-opacity="0.23" stroke-width="0.9" fill="none"/><path d="M283.7,308.2 L257.8,354.8 L229.9,401.3 L203.3,447.9 L177.8,494.4" stroke="#84694c" stroke-opacity="0.25" stroke-width="1.4" fill="none"/><path d="M-69.6,387.3 L-89.0,404.8 L-110.3,422.3 L-130.3,439.8 L-149.2,457.2" stroke="#6e553c" stroke-opacity="0.48" stroke-width="1.8" fill="none"/><path d="M424.3,64.0 L411.5,87.8 L396.7,111.6 L383.1,135.4 L370.8,159.2" stroke="#c8b08e" stroke-opacity="0.29" stroke-width="0.5" fill="none"/><path d="M199.0,201.0 L172.2,228.7 L143.4,256.4 L115.9,284.1 L89.6,311.8" stroke="#c8b08e" stroke-opacity="0.21" stroke-width="1.1" fill="none"/><path d="M150.4,176.7 L120.2,202.2 L87.9,227.6 L56.9,253.1 L27.1,278.5" stroke="#bea684" stroke-opacity="0.18" stroke-width="1.8" fill="none"/><path d="M-141.2,405.8 L-197.4,451.7 L-255.6,497.5 L-312.5,543.4 L-368.2,589.3" stroke="#84694c" stroke-opacity="0.26" stroke-width="1.4" fill="none"/><path d="M50.6,238.2 L9.8,270.6 L-33.1,303.0 L-74.7,335.4 L-115.0,367.8" stroke="#d0bc9e" stroke-opacity="0.17" stroke-width="0.5" fill="none"/><path d="M284.7,178.8 L249.3,224.2 L211.8,269.6 L175.6,315.0 L140.6,360.4" stroke="#c8b08e" stroke-opacity="0.16" stroke-width="0.9" fill="none"/><path d="M318.7,193.8 L304.8,215.8 L289.0,237.8 L274.4,259.8 L261.1,281.8" stroke="#c8b08e" stroke-opacity="0.37" stroke-width="0.9" fill="none"/><path d="M456.5,290.9 L450.4,324.8 L442.4,358.7 L435.7,392.6 L430.1,426.5" stroke="#c8b08e" stroke-opacity="0.42" stroke-width="0.5" fill="none"/><path d="M71.2,391.9 L51.1,415.6 L29.0,439.3 L8.2,463.1 L-11.4,486.8" stroke="#6e553c" stroke-opacity="0.44" stroke-width="1.1" fill="none"/><path d="M487.2,163.4 L483.7,186.3 L478.3,209.1 L474.1,231.9 L471.2,254.7" stroke="#bea684" stroke-opacity="0.33" stroke-width="0.5" fill="none"/><path d="M502.9,312.1 L502.1,329.5 L499.2,347.0 L497.7,364.5 L497.4,381.9" stroke="#d0bc9e" stroke-opacity="0.23" stroke-width="0.7" fill="none"/><path d="M-12.2,237.4 L-62.4,272.6 L-114.7,307.7 L-165.6,342.8 L-215.3,378.0" stroke="#c8b08e" stroke-opacity="0.23" stroke-width="1.4" fill="none"/><path d="M324.3,173.4 L309.8,195.6 L293.3,217.9 L278.0,240.1 L264.0,262.3" stroke="#bea684" stroke-opacity="0.49" stroke-width="1.4" fill="none"/><path d="M444.4,314.6 L434.7,363.1 L423.0,411.6 L412.6,460.0 L403.3,508.5" stroke="#c8b08e" stroke-opacity="0.39" stroke-width="0.9" fill="none"/><path d="M419.5,265.5 L413.2,288.7 L405.0,311.9 L398.0,335.1 L392.2,358.3" stroke="#84694c" stroke-opacity="0.32" stroke-width="0.7" fill="none"/><path d="M243.0,139.7 L221.3,161.0 L197.6,182.3 L175.2,203.7 L153.9,225.0" stroke="#d0bc9e" stroke-opacity="0.23" stroke-width="1.8" fill="none"/><path d="M-73.8,367.1 L-127.4,412.3 L-183.0,457.4 L-237.3,502.5 L-290.5,547.7" stroke="#c8b08e" stroke-opacity="0.50" stroke-width="1.4" fill="none"/><path d="M288.1,105.0 L243.7,149.3 L197.2,193.7 L152.1,238.0 L108.1,282.3" stroke="#84694c" stroke-opacity="0.32" stroke-width="2.2" fill="none"/><path d="M423.3,358.6 L418.3,382.8 L411.3,406.9 L405.5,431.1 L401.0,455.3" stroke="#7a6046" stroke-opacity="0.33" stroke-width="0.5" fill="none"/><path d="M399.0,173.5 L381.7,213.3 L362.4,253.1 L344.4,292.8 L327.6,332.6" stroke="#84694c" stroke-opacity="0.26" stroke-width="0.9" fill="none"/><path d="M478.6,90.2 L468.5,129.2 L456.5,168.1 L445.8,207.1 L436.2,246.1" stroke="#7a6046" stroke-opacity="0.37" stroke-width="2.2" fill="none"/><path d="M217.9,156.8 L180.8,192.0 L141.6,227.2 L103.7,262.4 L67.0,297.6" stroke="#7a6046" stroke-opacity="0.37" stroke-width="0.7" fill="none"/><path d="M516.3,148.4 L515.3,166.7 L512.3,184.9 L510.7,203.1 L510.2,221.3" stroke="#c8b08e" stroke-opacity="0.24" stroke-width="1.1" fill="none"/><path d="M297.2,325.3 L291.4,337.8 L283.6,350.4 L277.1,362.9 L271.7,375.4" stroke="#c8b08e" stroke-opacity="0.17" stroke-width="1.1" fill="none"/><path d="M218.0,88.1 L188.8,109.6 L157.5,131.1 L127.6,152.6 L98.8,174.2" stroke="#84694c" stroke-opacity="0.50" stroke-width="0.9" fill="none"/><path d="M105.8,163.7 L47.8,205.2 L-12.2,246.7 L-70.9,288.2 L-128.4,329.8" stroke="#c8b08e" stroke-opacity="0.28" stroke-width="1.4" fill="none"/><path d="M404.9,346.1 L391.8,395.3 L376.6,444.5 L362.8,493.7 L350.1,542.9" stroke="#84694c" stroke-opacity="0.37" stroke-width="0.9" fill="none"/><path d="M321.5,98.8 L308.7,113.7 L293.8,128.6 L280.3,143.6 L267.9,158.5" stroke="#7a6046" stroke-opacity="0.43" stroke-width="1.8" fill="none"/><path d="M133.1,169.5 L123.0,177.8 L110.9,186.1 L100.1,194.4 L90.5,202.7" stroke="#d0bc9e" stroke-opacity="0.19" stroke-width="0.9" fill="none"/><path d="M360.4,131.0 L342.6,159.0 L322.8,187.0 L304.2,215.0 L286.9,243.0" stroke="#7a6046" stroke-opacity="0.25" stroke-width="0.7" fill="none"/><path d="M32.5,397.1 L13.8,417.7 L-6.9,438.4 L-26.3,459.0 L-44.5,479.6" stroke="#c8b08e" stroke-opacity="0.17" stroke-width="0.9" fill="none"/><path d="M185.7,120.9 L126.9,165.2 L66.1,209.6 L6.6,254.0 L-51.8,298.3" stroke="#6e553c" stroke-opacity="0.50" stroke-width="0.7" fill="none"/><path d="M381.6,63.1 L358.4,94.0 L333.1,124.9 L309.2,155.8 L286.4,186.7" stroke="#84694c" stroke-opacity="0.29" stroke-width="1.1" fill="none"/><path d="M258.9,385.8 L233.0,435.6 L205.1,485.4 L178.4,535.1 L153.0,584.9" stroke="#6e553c" stroke-opacity="0.48" stroke-width="1.4" fill="none"/><path d="M379.9,50.7 L368.5,65.4 L355.0,80.1 L342.8,94.7 L331.8,109.4" stroke="#c8b08e" stroke-opacity="0.21" stroke-width="2.2" fill="none"/><path d="M145.2,164.0 L108.2,193.4 L69.2,222.7 L31.5,252.1 L-5.0,281.4" stroke="#6e553c" stroke-opacity="0.41" stroke-width="0.5" fill="none"/><path d="M-26.5,250.9 L-86.0,292.8 L-147.5,334.8 L-207.7,376.7 L-266.8,418.6" stroke="#7a6046" stroke-opacity="0.15" stroke-width="0.7" fill="none"/><path d="M364.4,371.1 L351.3,411.2 L336.1,451.3 L322.2,491.4 L309.5,531.6" stroke="#7a6046" stroke-opacity="0.43" stroke-width="1.8" fill="none"/><path d="M507.8,322.1 L507.2,340.3 L504.5,358.4 L503.2,376.5 L503.0,394.7" stroke="#d0bc9e" stroke-opacity="0.29" stroke-width="0.5" fill="none"/><path d="M481.3,195.4 L477.8,218.6 L472.3,241.8 L468.1,264.9 L465.0,288.1" stroke="#6e553c" stroke-opacity="0.23" stroke-width="0.5" fill="none"/><path d="M368.4,181.6 L358.8,201.0 L347.2,220.4 L336.8,239.7 L327.7,259.1" stroke="#bea684" stroke-opacity="0.37" stroke-width="2.2" fill="none"/><path d="M452.3,336.7 L450.0,353.1 L445.6,369.6 L442.5,386.1 L440.6,402.6" stroke="#d0bc9e" stroke-opacity="0.27" stroke-width="0.9" fill="none"/><path d="M449.1,82.3 L444.2,95.9 L437.3,109.5 L431.7,123.1 L427.3,136.6" stroke="#6e553c" stroke-opacity="0.21" stroke-width="1.4" fill="none"/><path d="M209.3,201.3 L189.7,222.5 L168.1,243.7 L147.7,264.8 L128.6,286.0" stroke="#7a6046" stroke-opacity="0.33" stroke-width="1.1" fill="none"/><path d="M201.2,341.7 L193.4,353.8 L183.7,365.9 L175.2,378.0 L167.9,390.1" stroke="#6e553c" stroke-opacity="0.26" stroke-width="2.2" fill="none"/><path d="M506.6,352.2 L503.9,397.4 L499.3,442.6 L495.9,487.9 L493.8,533.1" stroke="#6e553c" stroke-opacity="0.32" stroke-width="1.1" fill="none"/><path d="M385.4,351.1 L376.7,380.9 L365.9,410.7 L356.5,440.5 L348.2,470.3" stroke="#d0bc9e" stroke-opacity="0.46" stroke-width="0.5" fill="none"/><path d="M244.7,62.1 L197.1,95.8 L147.3,129.5 L98.9,163.2 L51.7,196.9" stroke="#d0bc9e" stroke-opacity="0.47" stroke-width="1.8" fill="none"/><path d="M-13.4,427.7 L-58.1,474.5 L-104.8,521.3 L-150.2,568.2 L-194.5,615.0" stroke="#bea684" stroke-opacity="0.30" stroke-width="1.1" fill="none"/><path d="M65.7,226.9 L11.2,270.0 L-45.2,313.0 L-100.4,356.1 L-154.4,399.1" stroke="#d0bc9e" stroke-opacity="0.30" stroke-width="1.8" fill="none"/><path d="M127.0,408.0 L105.2,437.9 L81.4,467.9 L59.0,497.8 L37.6,527.8" stroke="#bea684" stroke-opacity="0.16" stroke-width="1.1" fill="none"/><path d="M284.3,169.9 L260.1,200.2 L233.9,230.5 L209.0,260.9 L185.3,291.2" stroke="#bea684" stroke-opacity="0.17" stroke-width="0.9" fill="none"/><path d="M172.5,227.6 L142.5,258.5 L110.5,289.5 L79.7,320.4 L50.2,351.4" stroke="#d0bc9e" stroke-opacity="0.22" stroke-width="0.9" fill="none"/><path d="M184.5,114.8 L120.7,161.5 L55.0,208.3 L-9.4,255.1 L-72.7,301.8" stroke="#d0bc9e" stroke-opacity="0.19" stroke-width="0.7" fill="none"/><path d="M339.4,437.5 L336.6,447.7 L331.8,458.0 L328.2,468.2 L325.8,478.5" stroke="#c8b08e" stroke-opacity="0.33" stroke-width="0.7" fill="none"/><path d="M456.2,221.6 L449.7,251.9 L441.3,282.2 L434.1,312.5 L428.0,342.8" stroke="#84694c" stroke-opacity="0.43" stroke-width="1.8" fill="none"/><path d="M487.9,82.9 L482.2,109.1 L474.5,135.3 L468.2,161.6 L462.9,187.8" stroke="#84694c" stroke-opacity="0.23" stroke-width="0.7" fill="none"/><path d="M348.0,348.3 L336.6,379.2 L323.1,410.0 L310.9,440.9 L299.9,471.7" stroke="#7a6046" stroke-opacity="0.45" stroke-width="0.7" fill="none"/><path d="M483.6,173.5 L475.4,220.5 L465.3,267.5 L456.5,314.4 L448.8,361.4" stroke="#d0bc9e" stroke-opacity="0.21" stroke-width="2.2" fill="none"/><path d="M492.2,285.8 L491.9,294.6 L489.6,303.4 L488.5,312.2 L488.7,321.0" stroke="#c8b08e" stroke-opacity="0.30" stroke-width="0.7" fill="none"/><path d="M320.7,299.6 L306.3,329.7 L290.0,359.8 L274.9,390.0 L261.0,420.1" stroke="#c8b08e" stroke-opacity="0.18" stroke-width="1.1" fill="none"/><path d="M181.8,212.3 L174.3,220.5 L164.9,228.6 L156.7,236.8 L149.6,244.9" stroke="#bea684" stroke-opacity="0.38" stroke-width="1.8" fill="none"/><path d="M280.4,123.4 L265.1,139.8 L247.8,156.2 L231.8,172.7 L216.9,189.1" stroke="#d0bc9e" stroke-opacity="0.38" stroke-width="0.9" fill="none"/><path d="M430.0,151.3 L423.7,169.8 L415.3,188.3 L408.3,206.8 L402.4,225.3" stroke="#d0bc9e" stroke-opacity="0.16" stroke-width="0.7" fill="none"/><path d="M336.3,67.6 L321.3,83.8 L304.2,100.1 L288.5,116.3 L273.9,132.6" stroke="#6e553c" stroke-opacity="0.15" stroke-width="1.4" fill="none"/><path d="M447.2,68.6 L439.4,87.4 L429.7,106.2 L421.3,125.0 L414.0,143.8" stroke="#7a6046" stroke-opacity="0.22" stroke-width="2.2" fill="none"/><path d="M325.1,89.4 L315.2,101.0 L303.2,112.5 L292.5,124.1 L283.0,135.6" stroke="#7a6046" stroke-opacity="0.20" stroke-width="1.4" fill="none"/><path d="M371.0,89.3 L338.8,134.0 L304.6,178.8 L271.7,223.6 L240.0,268.3" stroke="#84694c" stroke-opacity="0.19" stroke-width="1.1" fill="none"/><path d="M497.0,231.0 L495.8,246.9 L492.6,262.9 L490.6,278.8 L489.9,294.8" stroke="#d0bc9e" stroke-opacity="0.23" stroke-width="0.5" fill="none"/><path d="M264.7,173.3 L237.2,205.6 L207.7,238.0 L179.4,270.3 L152.4,302.6" stroke="#6e553c" stroke-opacity="0.28" stroke-width="0.7" fill="none"/><path d="M314.3,284.2 L310.7,292.4 L305.1,300.5 L300.8,308.7 L297.7,316.8" stroke="#84694c" stroke-opacity="0.15" stroke-width="0.9" fill="none"/><path d="M267.7,151.3 L257.4,163.2 L245.2,175.0 L234.2,186.8 L224.5,198.7" stroke="#d0bc9e" stroke-opacity="0.29" stroke-width="1.4" fill="none"/><path d="M461.4,221.3 L458.5,237.6 L453.6,254.0 L449.9,270.4 L447.5,286.8" stroke="#bea684" stroke-opacity="0.38" stroke-width="2.2" fill="none"/><path d="M381.1,318.9 L364.5,368.5 L345.9,418.1 L328.6,467.6 L312.4,517.2" stroke="#84694c" stroke-opacity="0.36" stroke-width="0.5" fill="none"/><path d="M476.3,69.0 L472.5,83.8 L466.6,98.5 L462.0,113.2 L458.6,128.0" stroke="#84694c" stroke-opacity="0.20" stroke-width="2.2" fill="none"/><path d="M338.7,128.9 L333.2,137.3 L325.7,145.7 L319.5,154.1 L314.4,162.5" stroke="#bea684" stroke-opacity="0.17" stroke-width="1.1" fill="none"/><path d="M463.4,84.0 L460.6,93.9 L455.9,103.9 L452.5,113.8 L450.2,123.8" stroke="#bea684" stroke-opacity="0.34" stroke-width="1.1" fill="none"/><path d="M521.2,247.1 L520.1,279.5 L516.9,311.8 L515.1,344.1 L514.4,376.5" stroke="#84694c" stroke-opacity="0.48" stroke-width="1.8" fill="none"/><path d="M161.8,357.9 L156.8,365.5 L149.7,373.2 L144.0,380.8 L139.4,388.5" stroke="#7a6046" stroke-opacity="0.18" stroke-width="2.2" fill="none"/><path d="M491.7,305.3 L486.9,354.1 L480.0,402.8 L474.4,451.5 L470.0,500.2" stroke="#bea684" stroke-opacity="0.47" stroke-width="1.8" fill="none"/><path d="M124.7,383.9 L87.7,431.5 L48.8,479.2 L11.1,526.8 L-25.4,574.4" stroke="#6e553c" stroke-opacity="0.16" stroke-width="0.5" fill="none"/><path d="M462.9,253.5 L461.2,265.7 L457.5,277.9 L455.0,290.1 L453.8,302.4" stroke="#7a6046" stroke-opacity="0.34" stroke-width="0.5" fill="none"/><path d="M398.8,267.1 L394.9,280.2 L389.1,293.2 L384.6,306.2 L381.2,319.2" stroke="#bea684" stroke-opacity="0.19" stroke-width="0.9" fill="none"/><path d="M165.7,138.7 L133.1,163.8 L98.5,188.9 L65.2,214.0 L33.1,239.1" stroke="#7a6046" stroke-opacity="0.42" stroke-width="1.4" fill="none"/><path d="M35.1,223.8 L-24.2,267.4 L-85.5,311.1 L-145.5,354.7 L-204.4,398.4" stroke="#c8b08e" stroke-opacity="0.35" stroke-width="0.7" fill="none"/><path d="M26.7,250.0 L-4.9,274.8 L-38.6,299.5 L-70.9,324.3 L-102.0,349.1" stroke="#6e553c" stroke-opacity="0.49" stroke-width="2.2" fill="none"/><path d="M430.1,44.3 L422.5,58.3 L412.9,72.4 L404.5,86.4 L397.3,100.4" stroke="#c8b08e" stroke-opacity="0.29" stroke-width="2.2" fill="none"/><path d="M420.2,252.4 L418.2,261.1 L414.2,269.9 L411.6,278.6 L410.1,287.3" stroke="#d0bc9e" stroke-opacity="0.20" stroke-width="1.8" fill="none"/><path d="M-137.6,379.1 L-149.2,388.5 L-162.7,398.0 L-174.9,407.4 L-186.0,416.9" stroke="#bea684" stroke-opacity="0.38" stroke-width="0.9" fill="none"/><path d="M61.5,407.5 L43.5,429.0 L23.5,450.5 L4.9,471.9 L-12.6,493.4" stroke="#84694c" stroke-opacity="0.19" stroke-width="0.5" fill="none"/><path d="M225.8,267.2 L204.4,296.0 L181.0,324.7 L158.8,353.5 L137.9,382.3" stroke="#bea684" stroke-opacity="0.48" stroke-width="1.8" fill="none"/><path d="M488.5,143.3 L484.9,166.4 L479.2,189.6 L474.8,212.7 L471.6,235.8" stroke="#d0bc9e" stroke-opacity="0.41" stroke-width="1.1" fill="none"/><path d="M231.4,220.3 L223.9,229.9 L214.5,239.5 L206.3,249.1 L199.3,258.8" stroke="#84694c" stroke-opacity="0.30" stroke-width="1.1" fill="none"/><path d="M444.8,199.9 L440.7,216.9 L434.6,233.8 L429.7,250.8 L426.1,267.7" stroke="#7a6046" stroke-opacity="0.34" stroke-width="0.5" fill="none"/><path d="M178.6,132.1 L127.7,171.5 L74.8,210.8 L23.1,250.2 L-27.4,289.5" stroke="#7a6046" stroke-opacity="0.32" stroke-width="0.9" fill="none"/><path d="M398.2,42.8 L373.6,75.5 L347.1,108.3 L321.9,141.0 L297.8,173.7" stroke="#84694c" stroke-opacity="0.49" stroke-width="0.5" fill="none"/><path d="M509.6,160.5 L506.6,193.9 L501.6,227.3 L497.9,260.6 L495.3,294.0" stroke="#bea684" stroke-opacity="0.28" stroke-width="0.9" fill="none"/><path d="M236.8,341.5 L231.4,351.3 L224.0,361.0 L217.9,370.8 L213.0,380.5" stroke="#6e553c" stroke-opacity="0.33" stroke-width="0.9" fill="none"/><path d="M100.5,189.3 L86.3,200.7 L70.1,212.0 L55.2,223.3 L41.4,234.6" stroke="#d0bc9e" stroke-opacity="0.38" stroke-width="0.9" fill="none"/><path d="M336.5,171.3 L323.5,192.3 L308.5,213.3 L294.8,234.2 L282.3,255.2" stroke="#6e553c" stroke-opacity="0.44" stroke-width="0.5" fill="none"/><path d="M391.9,345.4 L389.7,355.0 L385.5,364.5 L382.6,374.0 L380.8,383.6" stroke="#7a6046" stroke-opacity="0.17" stroke-width="2.2" fill="none"/><path d="M430.8,48.9 L404.1,96.1 L375.4,143.4 L348.0,190.6 L321.8,237.8" stroke="#7a6046" stroke-opacity="0.37" stroke-width="1.4" fill="none"/><path d="M415.1,174.2 L402.2,208.3 L387.2,242.3 L373.6,276.4 L361.1,310.5" stroke="#84694c" stroke-opacity="0.32" stroke-width="1.4" fill="none"/><path d="M457.2,340.6 L453.8,364.2 L448.4,387.7 L444.2,411.3 L441.2,434.9" stroke="#6e553c" stroke-opacity="0.30" stroke-width="2.2" fill="none"/><path d="M146.8,333.9 L138.8,344.4 L128.8,354.9 L120.2,365.5 L112.7,376.0" stroke="#d0bc9e" stroke-opacity="0.26" stroke-width="1.1" fill="none"/><path d="M-58.9,321.2 L-89.6,345.6 L-122.3,370.0 L-153.7,394.3 L-183.9,418.7" stroke="#84694c" stroke-opacity="0.40" stroke-width="2.2" fill="none"/><path d="M389.8,169.7 L384.0,183.1 L376.1,196.6 L369.6,210.0 L364.3,223.5" stroke="#c8b08e" stroke-opacity="0.18" stroke-width="1.8" fill="none"/><path d="M472.7,398.6 L467.3,445.7 L459.8,492.7 L453.7,539.8 L448.8,586.8" stroke="#d0bc9e" stroke-opacity="0.29" stroke-width="0.7" fill="none"/><path d="M-48.7,359.5 L-82.3,388.7 L-117.8,417.9 L-152.1,447.2 L-185.1,476.4" stroke="#d0bc9e" stroke-opacity="0.30" stroke-width="1.8" fill="none"/><path d="M297.7,169.6 L292.1,177.8 L284.5,185.9 L278.3,194.0 L273.1,202.1" stroke="#c8b08e" stroke-opacity="0.42" stroke-width="1.4" fill="none"/><path d="M404.3,313.5 L396.9,340.2 L387.5,367.0 L379.4,393.7 L372.5,420.5" stroke="#84694c" stroke-opacity="0.43" stroke-width="1.8" fill="none"/><path d="M249.0,321.5 L234.4,345.9 L217.8,370.2 L202.5,394.6 L188.3,418.9" stroke="#84694c" stroke-opacity="0.20" stroke-width="1.1" fill="none"/><path d="M79.5,204.3 L67.8,213.7 L54.0,223.2 L41.6,232.6 L30.3,242.0" stroke="#7a6046" stroke-opacity="0.27" stroke-width="1.1" fill="none"/><path d="M498.7,125.3 L491.8,171.4 L482.9,217.5 L475.2,263.6 L468.7,309.7" stroke="#d0bc9e" stroke-opacity="0.24" stroke-width="2.2" fill="none"/><path d="M25.9,234.7 L3.0,252.1 L-21.8,269.4 L-45.3,286.7 L-67.7,304.0" stroke="#bea684" stroke-opacity="0.31" stroke-width="0.7" fill="none"/><path d="M463.6,54.0 L449.4,91.2 L433.2,128.4 L418.3,165.6 L404.6,202.8" stroke="#bea684" stroke-opacity="0.45" stroke-width="0.5" fill="none"/><path d="M170.3,420.3 L144.6,460.3 L117.0,500.3 L90.7,540.3 L65.5,580.3" stroke="#7a6046" stroke-opacity="0.20" stroke-width="1.4" fill="none"/><path d="M456.7,119.7 L447.5,149.9 L436.4,180.2 L426.5,210.4 L417.8,240.7" stroke="#6e553c" stroke-opacity="0.23" stroke-width="0.5" fill="none"/><path d="M215.6,399.8 L188.3,446.5 L158.9,493.3 L130.8,540.1 L103.9,586.8" stroke="#6e553c" stroke-opacity="0.35" stroke-width="0.5" fill="none"/><path d="M333.3,283.3 L313.0,326.1 L290.7,368.9 L269.8,411.7 L250.0,454.5" stroke="#84694c" stroke-opacity="0.43" stroke-width="0.9" fill="none"/><path d="M499.1,395.7 L496.9,431.6 L492.7,467.5 L489.8,503.4 L488.0,539.3" stroke="#6e553c" stroke-opacity="0.21" stroke-width="0.5" fill="none"/><path d="M336.0,51.6 L293.4,92.8 L248.7,134.1 L205.4,175.3 L163.2,216.5" stroke="#7a6046" stroke-opacity="0.18" stroke-width="1.4" fill="none"/><path d="M488.9,257.8 L487.8,270.8 L484.8,283.9 L483.1,297.0 L482.5,310.0" stroke="#c8b08e" stroke-opacity="0.44" stroke-width="0.7" fill="none"/><path d="M-76.0,321.1 L-118.4,353.6 L-162.9,386.2 L-206.0,418.7 L-248.0,451.3" stroke="#bea684" stroke-opacity="0.41" stroke-width="2.2" fill="none"/><path d="M317.6,257.0 L302.7,285.0 L285.7,312.9 L270.1,340.8 L255.6,368.8" stroke="#7a6046" stroke-opacity="0.38" stroke-width="0.9" fill="none"/><path d="M339.8,266.4 L329.5,288.7 L317.2,311.1 L306.2,333.4 L296.3,355.7" stroke="#bea684" stroke-opacity="0.33" stroke-width="0.9" fill="none"/><path d="M197.7,160.9 L189.9,168.5 L180.1,176.2 L171.5,183.8 L164.1,191.4" stroke="#84694c" stroke-opacity="0.41" stroke-width="1.4" fill="none"/><path d="M463.5,388.8 L462.8,399.0 L460.0,409.1 L458.5,419.2 L458.2,429.3" stroke="#7a6046" stroke-opacity="0.26" stroke-width="0.5" fill="none"/><path d="M241.2,433.1 L222.8,469.7 L202.4,506.4 L183.3,543.0 L165.4,579.6" stroke="#7a6046" stroke-opacity="0.35" stroke-width="0.5" fill="none"/><path d="M441.1,250.8 L437.8,266.1 L432.6,281.5 L428.7,296.8 L425.9,312.2" stroke="#bea684" stroke-opacity="0.18" stroke-width="2.2" fill="none"/><path d="M381.3,80.7 L372.4,94.1 L361.6,107.6 L352.0,121.0 L343.6,134.4" stroke="#c8b08e" stroke-opacity="0.46" stroke-width="0.9" fill="none"/><path d="M-101.2,399.4 L-113.8,410.7 L-128.4,422.0 L-141.7,433.3 L-153.8,444.6" stroke="#84694c" stroke-opacity="0.48" stroke-width="1.8" fill="none"/><path d="M495.2,100.5 L489.9,131.0 L482.6,161.5 L476.7,192.0 L471.8,222.5" stroke="#84694c" stroke-opacity="0.25" stroke-width="0.9" fill="none"/><path d="M425.3,358.2 L414.3,408.0 L401.3,457.9 L389.6,507.7 L379.1,557.6" stroke="#c8b08e" stroke-opacity="0.36" stroke-width="0.7" fill="none"/><path d="M286.0,247.7 L255.2,296.0 L222.3,344.3 L190.7,392.5 L160.3,440.8" stroke="#6e553c" stroke-opacity="0.18" stroke-width="1.4" fill="none"/><path d="M268.7,49.6 L256.9,58.5 L243.2,67.3 L230.8,76.2 L219.6,85.1" stroke="#7a6046" stroke-opacity="0.49" stroke-width="0.5" fill="none"/><path d="M409.9,308.3 L407.4,319.4 L402.9,330.4 L399.7,341.4 L397.7,352.5" stroke="#bea684" stroke-opacity="0.42" stroke-width="1.8" fill="none"/><path d="M217.9,203.1 L198.3,224.8 L176.7,246.6 L156.4,268.3 L137.3,290.1" stroke="#7a6046" stroke-opacity="0.44" stroke-width="2.2" fill="none"/><path d="M137.0,274.3 L108.8,304.1 L78.7,334.0 L49.8,363.8 L22.1,393.7" stroke="#c8b08e" stroke-opacity="0.24" stroke-width="0.5" fill="none"/><path d="M13.7,392.7 L-0.3,407.7 L-16.3,422.7 L-30.9,437.6 L-44.5,452.6" stroke="#84694c" stroke-opacity="0.23" stroke-width="1.8" fill="none"/><path d="M147.3,173.2 L126.2,190.8 L103.0,208.4 L81.2,226.0 L60.5,243.7" stroke="#6e553c" stroke-opacity="0.42" stroke-width="0.9" fill="none"/><path d="M254.3,390.8 L246.8,406.1 L237.3,421.5 L229.1,436.8 L222.0,452.2" stroke="#bea684" stroke-opacity="0.24" stroke-width="0.9" fill="none"/><path d="M30.0,309.7 L-15.6,350.7 L-63.2,391.8 L-109.6,432.9 L-154.7,474.0" stroke="#84694c" stroke-opacity="0.40" stroke-width="0.9" fill="none"/><path d="M353.1,127.1 L336.3,152.2 L317.5,177.4 L300.0,202.5 L283.7,227.6" stroke="#bea684" stroke-opacity="0.24" stroke-width="0.5" fill="none"/><path d="M502.1,436.2 L501.2,460.1 L498.2,484.1 L496.5,508.0 L496.0,532.0" stroke="#c8b08e" stroke-opacity="0.47" stroke-width="0.9" fill="none"/><path d="M-90.2,356.2 L-119.3,379.8 L-150.4,403.4 L-180.2,427.1 L-208.8,450.7" stroke="#c8b08e" stroke-opacity="0.27" stroke-width="2.2" fill="none"/><path d="M4.1,367.3 L-3.6,375.4 L-13.4,383.5 L-21.8,391.6 L-29.1,399.7" stroke="#c8b08e" stroke-opacity="0.32" stroke-width="1.4" fill="none"/><path d="M359.9,97.4 L348.4,113.6 L334.9,129.9 L322.7,146.1 L311.6,162.3" stroke="#d0bc9e" stroke-opacity="0.47" stroke-width="1.1" fill="none"/><path d="M489.3,94.5 L480.5,136.2 L469.8,177.8 L460.4,219.5 L452.1,261.1" stroke="#d0bc9e" stroke-opacity="0.20" stroke-width="0.7" fill="none"/><path d="M261.4,134.8 L218.3,178.4 L173.1,222.0 L129.3,265.6 L86.7,309.1" stroke="#6e553c" stroke-opacity="0.40" stroke-width="0.5" fill="none"/><path d="M423.4,409.5 L421.2,423.2 L416.9,437.0 L414.0,450.7 L412.2,464.4" stroke="#7a6046" stroke-opacity="0.40" stroke-width="1.8" fill="none"/><path d="M470.5,162.8 L467.7,178.1 L462.8,193.3 L459.2,208.6 L456.8,223.9" stroke="#bea684" stroke-opacity="0.17" stroke-width="0.7" fill="none"/><path d="M-105.8,361.4 L-128.9,380.0 L-154.0,398.7 L-177.9,417.3 L-200.5,435.9" stroke="#84694c" stroke-opacity="0.30" stroke-width="1.4" fill="none"/><path d="M-218.6,430.2 L-280.3,477.4 L-344.0,524.6 L-406.4,571.8 L-467.7,619.0" stroke="#6e553c" stroke-opacity="0.47" stroke-width="1.8" fill="none"/><path d="M428.2,81.9 L414.7,110.0 L399.2,138.0 L385.0,166.1 L372.0,194.2" stroke="#7a6046" stroke-opacity="0.37" stroke-width="0.7" fill="none"/><path d="M465.2,235.4 L464.1,244.5 L460.9,253.7 L459.1,262.9 L458.4,272.0" stroke="#84694c" stroke-opacity="0.50" stroke-width="1.4" fill="none"/><path d="M20.8,273.8 L-16.6,304.4 L-56.0,335.0 L-94.0,365.5 L-131.0,396.1" stroke="#c8b08e" stroke-opacity="0.30" stroke-width="1.1" fill="none"/><path d="M-60.2,424.5 L-68.5,433.0 L-78.7,441.5 L-87.7,450.1 L-95.5,458.6" stroke="#84694c" stroke-opacity="0.44" stroke-width="0.5" fill="none"/><path d="M321.1,113.0 L314.8,121.2 L306.6,129.3 L299.6,137.5 L293.8,145.6" stroke="#c8b08e" stroke-opacity="0.31" stroke-width="1.1" fill="none"/><path d="M70.2,315.1 L52.3,333.3 L32.4,351.4 L13.7,369.6 L-3.7,387.7" stroke="#84694c" stroke-opacity="0.35" stroke-width="0.5" fill="none"/><path d="M397.2,206.8 L385.3,237.2 L371.3,267.7 L358.7,298.2 L347.2,328.6" stroke="#84694c" stroke-opacity="0.35" stroke-width="0.7" fill="none"/><path d="M90.1,414.3 L55.4,458.1 L18.7,501.8 L-16.7,545.6 L-50.9,589.3" stroke="#d0bc9e" stroke-opacity="0.23" stroke-width="0.9" fill="none"/><path d="M477.0,155.5 L474.5,170.2 L470.0,185.0 L466.7,199.8 L464.7,214.5" stroke="#84694c" stroke-opacity="0.49" stroke-width="0.7" fill="none"/><path d="M293.5,419.0 L285.6,438.6 L275.7,458.1 L267.0,477.7 L259.6,497.3" stroke="#d0bc9e" stroke-opacity="0.21" stroke-width="0.7" fill="none"/><path d="M37.2,238.9 L-23.6,285.6 L-86.3,332.3 L-147.8,379.0 L-208.1,425.7" stroke="#7a6046" stroke-opacity="0.35" stroke-width="1.8" fill="none"/><path d="M328.2,147.6 L305.5,179.5 L280.8,211.4 L257.4,243.3 L235.2,275.2" stroke="#bea684" stroke-opacity="0.32" stroke-width="1.1" fill="none"/><path d="M327.8,232.7 L308.7,267.5 L287.6,302.2 L267.8,337.0 L249.2,371.7" stroke="#7a6046" stroke-opacity="0.32" stroke-width="1.1" fill="none"/><path d="M493.7,360.0 L492.8,377.4 L489.8,394.9 L488.1,412.4 L487.6,429.8" stroke="#6e553c" stroke-opacity="0.18" stroke-width="0.9" fill="none"/><path d="M429.3,241.6 L422.4,267.2 L413.6,292.8 L406.1,318.4 L399.7,344.0" stroke="#6e553c" stroke-opacity="0.47" stroke-width="2.2" fill="none"/><path d="M332.2,166.4 L308.7,202.2 L283.2,238.0 L259.0,273.8 L235.9,309.6" stroke="#7a6046" stroke-opacity="0.20" stroke-width="0.5" fill="none"/><path d="M163.1,361.4 L127.0,410.5 L88.9,459.6 L52.1,508.7 L16.5,557.8" stroke="#bea684" stroke-opacity="0.44" stroke-width="0.7" fill="none"/><path d="M455.7,363.8 L449.2,405.4 L440.8,447.0 L433.6,488.5 L427.6,530.1" stroke="#84694c" stroke-opacity="0.40" stroke-width="1.8" fill="none"/><path d="M-124.0,407.8 L-133.5,416.3 L-145.0,424.8 L-155.1,433.2 L-164.1,441.7" stroke="#84694c" stroke-opacity="0.24" stroke-width="2.2" fill="none"/><path d="M137.6,404.4 L103.6,451.6 L67.5,498.7 L32.8,545.8 L-0.8,592.9" stroke="#84694c" stroke-opacity="0.36" stroke-width="0.9" fill="none"/><path d="M223.5,432.9 L199.6,477.4 L173.7,521.9 L149.1,566.5 L125.7,611.0" stroke="#c8b08e" stroke-opacity="0.19" stroke-width="0.5" fill="none"/><path d="M100.6,289.2 L88.3,302.0 L74.0,314.8 L61.0,327.6 L49.2,340.5" stroke="#d0bc9e" stroke-opacity="0.49" stroke-width="0.7" fill="none"/><path d="M324.6,354.1 L305.8,398.8 L284.9,443.4 L265.4,488.0 L247.0,532.7" stroke="#7a6046" stroke-opacity="0.42" stroke-width="0.5" fill="none"/><path d="M234.3,324.4 L229.0,333.6 L221.7,342.7 L215.7,351.9 L210.9,361.1" stroke="#d0bc9e" stroke-opacity="0.23" stroke-width="1.1" fill="none"/><path d="M448.7,287.3 L446.7,299.8 L442.7,312.3 L440.0,324.8 L438.4,337.3" stroke="#c8b08e" stroke-opacity="0.23" stroke-width="1.1" fill="none"/><path d="M300.4,50.8 L277.8,69.6 L253.2,88.5 L229.9,107.3 L207.8,126.1" stroke="#7a6046" stroke-opacity="0.39" stroke-width="1.1" fill="none"/><path d="M430.4,156.2 L413.1,204.2 L393.8,252.1 L375.8,300.1 L359.0,348.1" stroke="#6e553c" stroke-opacity="0.47" stroke-width="0.5" fill="none"/><path d="M383.4,127.0 L354.9,176.6 L324.5,226.3 L295.3,275.9 L267.3,325.6" stroke="#d0bc9e" stroke-opacity="0.19" stroke-width="1.1" fill="none"/><path d="M-120.6,342.6 L-160.4,372.5 L-202.3,402.4 L-242.9,432.2 L-282.3,462.1" stroke="#bea684" stroke-opacity="0.17" stroke-width="0.5" fill="none"/><path d="M319.3,68.0 L309.9,77.7 L298.4,87.4 L288.3,97.1 L279.3,106.9" stroke="#7a6046" stroke-opacity="0.26" stroke-width="1.4" fill="none"/><path d="M283.6,126.2 L239.8,172.8 L194.0,219.4 L149.5,266.0 L106.1,312.6" stroke="#bea684" stroke-opacity="0.34" stroke-width="1.4" fill="none"/><path d="M420.3,206.4 L409.1,240.6 L395.8,274.9 L383.8,309.1 L373.0,343.3" stroke="#7a6046" stroke-opacity="0.32" stroke-width="0.5" fill="none"/><path d="M429.2,207.9 L427.3,215.9 L423.5,223.9 L420.9,231.9 L419.5,239.9" stroke="#d0bc9e" stroke-opacity="0.36" stroke-width="1.4" fill="none"/><path d="M198.9,113.5 L134.9,162.1 L68.9,210.8 L4.2,259.5 L-59.4,308.2" stroke="#c8b08e" stroke-opacity="0.37" stroke-width="0.7" fill="none"/><path d="M365.0,358.9 L362.5,368.2 L358.0,377.4 L354.8,386.7 L352.7,396.0" stroke="#d0bc9e" stroke-opacity="0.24" stroke-width="1.4" fill="none"/><path d="M182.7,117.5 L158.4,135.8 L132.2,154.0 L107.2,172.2 L83.4,190.5" stroke="#6e553c" stroke-opacity="0.48" stroke-width="0.5" fill="none"/><path d="M461.6,286.0 L453.9,330.4 L444.2,374.8 L435.8,419.2 L428.5,463.6" stroke="#7a6046" stroke-opacity="0.31" stroke-width="1.4" fill="none"/><path d="M511.1,366.0 L510.7,383.7 L508.3,401.4 L507.2,419.1 L507.3,436.8" stroke="#bea684" stroke-opacity="0.24" stroke-width="1.1" fill="none"/><path d="M473.5,138.1 L466.4,169.8 L457.2,201.6 L449.4,233.3 L442.7,265.0" stroke="#84694c" stroke-opacity="0.35" stroke-width="1.1" fill="none"/><path d="M157.8,287.6 L144.0,304.0 L128.2,320.3 L113.7,336.6 L100.4,353.0" stroke="#7a6046" stroke-opacity="0.41" stroke-width="1.1" fill="none"/><path d="M-73.7,410.5 L-111.4,445.1 L-151.0,479.7 L-189.4,514.3 L-226.6,548.9" stroke="#84694c" stroke-opacity="0.46" stroke-width="1.8" fill="none"/><path d="M199.5,204.2 L176.2,228.6 L150.9,253.1 L126.9,277.5 L104.0,302.0" stroke="#84694c" stroke-opacity="0.33" stroke-width="0.5" fill="none"/><path d="M465.4,219.4 L461.2,242.4 L455.0,265.4 L450.1,288.5 L446.3,311.5" stroke="#6e553c" stroke-opacity="0.40" stroke-width="0.9" fill="none"/><path d="M248.6,204.5 L232.2,224.9 L213.7,245.3 L196.6,265.7 L180.6,286.1" stroke="#6e553c" stroke-opacity="0.37" stroke-width="1.1" fill="none"/><path d="M406.2,221.9 L398.2,245.3 L388.1,268.8 L379.4,292.3 L371.8,315.8" stroke="#bea684" stroke-opacity="0.46" stroke-width="1.1" fill="none"/><path d="M500.8,70.0 L498.2,87.1 L493.5,104.3 L490.1,121.4 L487.9,138.5" stroke="#d0bc9e" stroke-opacity="0.46" stroke-width="2.2" fill="none"/><path d="M127.2,221.9 L109.2,238.4 L89.2,255.0 L70.5,271.5 L53.0,288.1" stroke="#bea684" stroke-opacity="0.50" stroke-width="1.4" fill="none"/><path d="M50.1,330.8 L18.3,362.3 L-15.5,393.7 L-48.1,425.1 L-79.4,456.6" stroke="#bea684" stroke-opacity="0.36" stroke-width="1.4" fill="none"/><path d="M153.0,285.4 L138.5,302.3 L121.9,319.2 L106.7,336.1 L92.6,353.0" stroke="#7a6046" stroke-opacity="0.24" stroke-width="2.2" fill="none"/><path d="M168.2,273.2 L130.9,315.6 L91.7,358.0 L53.7,400.4 L16.9,442.8" stroke="#d0bc9e" stroke-opacity="0.17" stroke-width="0.7" fill="none"/><path d="M452.4,175.9 L446.6,198.9 L438.9,221.9 L432.4,244.9 L427.0,267.9" stroke="#84694c" stroke-opacity="0.40" stroke-width="1.1" fill="none"/><path d="M348.6,102.8 L342.6,111.4 L334.6,120.0 L328.0,128.6 L322.4,137.1" stroke="#bea684" stroke-opacity="0.29" stroke-width="0.9" fill="none"/><path d="M465.7,48.6 L450.5,88.3 L433.3,127.9 L417.3,167.6 L402.6,207.3" stroke="#84694c" stroke-opacity="0.33" stroke-width="1.4" fill="none"/><path d="M170.4,237.8 L143.7,266.0 L115.0,294.2 L87.6,322.4 L61.4,350.6" stroke="#84694c" stroke-opacity="0.43" stroke-width="1.1" fill="none"/><path d="M474.2,224.1 L469.3,254.2 L462.4,284.2 L456.8,314.2 L452.4,344.2" stroke="#c8b08e" stroke-opacity="0.36" stroke-width="1.1" fill="none"/><path d="M509.7,343.6 L509.7,354.3 L507.7,365.0 L507.0,375.7 L507.5,386.4" stroke="#7a6046" stroke-opacity="0.27" stroke-width="1.4" fill="none"/><path d="M194.7,192.1 L175.7,211.2 L154.7,230.3 L135.0,249.5 L116.5,268.6" stroke="#7a6046" stroke-opacity="0.44" stroke-width="1.8" fill="none"/><path d="M116.6,302.9 L104.2,316.7 L89.8,330.5 L76.7,344.3 L64.7,358.2" stroke="#84694c" stroke-opacity="0.28" stroke-width="1.4" fill="none"/><path d="M282.2,111.2 L270.2,123.7 L256.2,136.2 L243.5,148.7 L232.0,161.2" stroke="#bea684" stroke-opacity="0.24" stroke-width="2.2" fill="none"/><path d="M35.5,235.6 L-13.1,272.7 L-63.7,309.8 L-113.1,346.8 L-161.2,383.9" stroke="#6e553c" stroke-opacity="0.24" stroke-width="2.2" fill="none"/><path d="M-116.3,321.4 L-168.1,358.6 L-221.9,395.8 L-274.5,433.0 L-325.8,470.3" stroke="#7a6046" stroke-opacity="0.22" stroke-width="2.2" fill="none"/><path d="M187.8,216.7 L147.3,258.8 L104.8,300.8 L63.6,342.8 L23.5,384.8" stroke="#bea684" stroke-opacity="0.26" stroke-width="0.7" fill="none"/><path d="M363.2,129.1 L341.7,162.9 L318.2,196.8 L296.0,230.6 L275.0,264.4" stroke="#7a6046" stroke-opacity="0.23" stroke-width="1.4" fill="none"/><path d="M222.3,112.9 L182.4,145.6 L140.6,178.3 L100.0,211.0 L60.6,243.7" stroke="#d0bc9e" stroke-opacity="0.21" stroke-width="0.9" fill="none"/><path d="M352.8,347.9 L345.5,369.0 L336.1,390.0 L328.0,411.1 L321.1,432.1" stroke="#84694c" stroke-opacity="0.27" stroke-width="1.1" fill="none"/><path d="M425.5,307.5 L414.9,351.2 L402.3,394.8 L390.9,438.4 L380.7,482.0" stroke="#6e553c" stroke-opacity="0.32" stroke-width="1.1" fill="none"/><path d="M463.2,49.8 L455.2,71.0 L445.2,92.3 L436.5,113.6 L428.9,134.9" stroke="#bea684" stroke-opacity="0.48" stroke-width="2.2" fill="none"/><path d="M331.3,194.6 L306.3,235.8 L279.4,277.0 L253.7,318.2 L229.2,359.4" stroke="#bea684" stroke-opacity="0.34" stroke-width="2.2" fill="none"/><path d="M150.2,306.8 L118.7,343.9 L85.3,380.9 L53.1,418.0 L22.1,455.0" stroke="#bea684" stroke-opacity="0.25" stroke-width="1.8" fill="none"/><path d="M214.9,182.3 L192.8,205.1 L168.7,227.9 L145.9,250.7 L124.2,273.5" stroke="#c8b08e" stroke-opacity="0.35" stroke-width="1.1" fill="none"/><path d="M201.3,164.2 L166.0,196.8 L128.6,229.5 L92.6,262.1 L57.7,294.8" stroke="#6e553c" stroke-opacity="0.16" stroke-width="0.9" fill="none"/><path d="M123.1,244.7 L101.5,265.5 L77.9,286.2 L55.6,307.0 L34.4,327.7" stroke="#6e553c" stroke-opacity="0.31" stroke-width="0.5" fill="none"/><path d="M442.2,327.2 L439.1,345.1 L434.0,362.9 L430.2,380.8 L427.6,398.7" stroke="#bea684" stroke-opacity="0.31" stroke-width="2.2" fill="none"/><path d="M413.7,270.1 L398.8,320.0 L381.9,369.9 L366.4,419.8 L351.9,469.7" stroke="#7a6046" stroke-opacity="0.31" stroke-width="0.9" fill="none"/><path d="M430.2,196.7 L419.4,231.7 L406.5,266.7 L394.9,301.8 L384.5,336.8" stroke="#6e553c" stroke-opacity="0.25" stroke-width="2.2" fill="none"/><path d="M-231.6,409.1 L-274.4,440.3 L-319.2,471.5 L-362.7,502.6 L-405.1,533.8" stroke="#6e553c" stroke-opacity="0.28" stroke-width="1.1" fill="none"/><path d="M232.2,240.5 L219.2,257.6 L204.1,274.7 L190.4,291.9 L177.7,309.0" stroke="#d0bc9e" stroke-opacity="0.18" stroke-width="0.9" fill="none"/><path d="M360.9,138.8 L330.3,187.5 L297.7,236.3 L266.4,285.1 L236.3,333.8" stroke="#c8b08e" stroke-opacity="0.18" stroke-width="1.8" fill="none"/><path d="M271.4,246.7 L237.7,296.3 L202.1,345.9 L167.7,395.5 L134.5,445.1" stroke="#c8b08e" stroke-opacity="0.45" stroke-width="1.4" fill="none"/><path d="M-91.5,325.9 L-143.8,365.4 L-198.1,404.8 L-251.2,444.2 L-303.0,483.6" stroke="#6e553c" stroke-opacity="0.43" stroke-width="0.5" fill="none"/><path d="M197.2,273.0 L185.6,287.8 L172.1,302.7 L159.8,317.5 L148.8,332.4" stroke="#bea684" stroke-opacity="0.36" stroke-width="1.1" fill="none"/><path d="M184.2,300.9 L151.1,343.0 L116.1,385.0 L82.3,427.0 L49.7,469.0" stroke="#c8b08e" stroke-opacity="0.48" stroke-width="0.7" fill="none"/><path d="M511.7,302.7 L511.2,319.3 L508.8,335.9 L507.6,352.5 L507.7,369.1" stroke="#c8b08e" stroke-opacity="0.23" stroke-width="1.8" fill="none"/><path d="M-9.0,263.5 L-24.2,275.3 L-41.4,287.1 L-57.3,298.9 L-72.0,310.7" stroke="#6e553c" stroke-opacity="0.49" stroke-width="2.2" fill="none"/><path d="M401.7,106.2 L390.0,128.3 L376.3,150.4 L363.9,172.5 L352.6,194.7" stroke="#84694c" stroke-opacity="0.23" stroke-width="0.9" fill="none"/><path d="M332.1,336.1 L313.0,381.3 L291.9,426.4 L272.1,471.6 L253.5,516.8" stroke="#6e553c" stroke-opacity="0.37" stroke-width="1.8" fill="none"/><path d="M300.8,294.0 L282.9,327.7 L263.1,361.3 L244.6,395.0 L227.2,428.6" stroke="#bea684" stroke-opacity="0.21" stroke-width="0.9" fill="none"/><path d="M467.8,369.5 L465.8,387.7 L461.9,405.9 L459.3,424.1 L457.8,442.3" stroke="#d0bc9e" stroke-opacity="0.28" stroke-width="0.5" fill="none"/><path d="M415.7,136.0 L407.6,155.3 L397.6,174.7 L388.8,194.0 L381.2,213.4" stroke="#84694c" stroke-opacity="0.49" stroke-width="0.7" fill="none"/><path d="M495.5,134.9 L492.8,154.7 L488.2,174.5 L484.8,194.3 L482.6,214.2" stroke="#7a6046" stroke-opacity="0.22" stroke-width="1.8" fill="none"/><path d="M424.1,291.1 L418.3,314.9 L410.5,338.7 L404.1,362.5 L398.7,386.3" stroke="#84694c" stroke-opacity="0.38" stroke-width="1.8" fill="none"/><path d="M390.6,193.6 L377.8,223.7 L362.9,253.8 L349.4,283.8 L337.0,313.9" stroke="#7a6046" stroke-opacity="0.32" stroke-width="1.1" fill="none"/><path d="M103.9,172.0 L85.5,185.8 L65.2,199.6 L46.1,213.4 L28.2,227.2" stroke="#84694c" stroke-opacity="0.28" stroke-width="0.5" fill="none"/><path d="M262.8,303.3 L241.8,338.1 L218.7,373.0 L196.9,407.9 L176.3,442.8" stroke="#84694c" stroke-opacity="0.15" stroke-width="1.4" fill="none"/><path d="M311.0,257.0 L283.8,305.4 L254.6,353.7 L226.7,402.0 L200.0,450.4" stroke="#84694c" stroke-opacity="0.17" stroke-width="1.1" fill="none"/><path d="M-71.4,338.3 L-121.3,378.2 L-173.1,418.0 L-223.7,457.9 L-273.1,497.7" stroke="#7a6046" stroke-opacity="0.37" stroke-width="1.1" fill="none"/><path d="M432.4,104.9 L429.1,114.0 L423.8,123.1 L419.8,132.2 L417.0,141.3" stroke="#6e553c" stroke-opacity="0.20" stroke-width="0.5" fill="none"/><path d="M202.9,95.5 L172.6,117.5 L140.2,139.6 L109.1,161.6 L79.2,183.7" stroke="#6e553c" stroke-opacity="0.40" stroke-width="1.8" fill="none"/><path d="M525.0,112.0 L523.8,138.6 L520.6,165.3 L518.7,191.9 L517.9,218.5" stroke="#6e553c" stroke-opacity="0.23" stroke-width="2.2" fill="none"/><path d="M108.7,370.6 L74.8,411.7 L38.9,452.9 L4.2,494.0 L-29.2,535.2" stroke="#c8b08e" stroke-opacity="0.17" stroke-width="0.5" fill="none"/><path d="M378.2,42.2 L360.9,62.8 L341.5,83.4 L323.5,103.9 L306.6,124.5" stroke="#bea684" stroke-opacity="0.18" stroke-width="1.1" fill="none"/><path d="M517.4,209.1 L515.1,250.1 L510.8,291.2 L507.7,332.2 L505.9,373.2" stroke="#7a6046" stroke-opacity="0.48" stroke-width="0.5" fill="none"/><path d="M454.3,193.4 L445.1,231.0 L433.9,268.6 L424.0,306.1 L415.3,343.7" stroke="#84694c" stroke-opacity="0.20" stroke-width="0.9" fill="none"/><path d="M264.2,153.8 L246.4,173.7 L226.5,193.7 L208.0,213.6 L190.6,233.6" stroke="#84694c" stroke-opacity="0.16" stroke-width="1.8" fill="none"/><path d="M438.3,114.3 L429.3,138.5 L418.2,162.7 L408.4,186.9 L399.8,211.2" stroke="#84694c" stroke-opacity="0.47" stroke-width="2.2" fill="none"/><path d="M417.3,336.2 L406.4,380.5 L393.5,424.8 L381.9,469.1 L371.5,513.4" stroke="#84694c" stroke-opacity="0.49" stroke-width="2.2" fill="none"/><path d="M149.2,270.8 L107.1,316.2 L62.9,361.5 L20.0,406.8 L-21.7,452.1" stroke="#bea684" stroke-opacity="0.46" stroke-width="1.4" fill="none"/><path d="M529.6,97.5 L528.9,122.1 L526.2,146.8 L524.8,171.5 L524.6,196.1" stroke="#7a6046" stroke-opacity="0.49" stroke-width="2.2" fill="none"/><path d="M252.9,291.5 L240.7,310.9 L226.6,330.3 L213.7,349.7 L202.0,369.0" stroke="#bea684" stroke-opacity="0.17" stroke-width="0.7" fill="none"/><path d="M14.1,382.9 L-34.6,432.3 L-85.4,481.8 L-134.9,531.2 L-183.2,580.7" stroke="#7a6046" stroke-opacity="0.31" stroke-width="1.4" fill="none"/><path d="M-26.8,379.6 L-43.3,395.6 L-61.9,411.5 L-79.2,427.5 L-95.3,443.4" stroke="#84694c" stroke-opacity="0.22" stroke-width="0.9" fill="none"/><path d="M417.8,40.8 L404.0,62.2 L388.3,83.7 L373.9,105.1 L360.6,126.6" stroke="#c8b08e" stroke-opacity="0.15" stroke-width="0.9" fill="none"/><path d="M-47.5,407.7 L-91.1,449.3 L-136.8,490.8 L-181.1,532.4 L-224.3,573.9" stroke="#c8b08e" stroke-opacity="0.30" stroke-width="1.4" fill="none"/><path d="M167.1,167.1 L138.5,191.5 L107.9,215.9 L78.5,240.3 L50.4,264.7" stroke="#bea684" stroke-opacity="0.30" stroke-width="1.1" fill="none"/><path d="M293.3,100.8 L252.6,141.6 L210.0,182.3 L168.6,223.1 L128.4,263.9" stroke="#bea684" stroke-opacity="0.39" stroke-width="1.8" fill="none"/><path d="M523.2,54.1 L521.3,79.2 L517.5,104.3 L514.9,129.4 L513.5,154.5" stroke="#84694c" stroke-opacity="0.21" stroke-width="0.7" fill="none"/><path d="M-141.8,427.2 L-153.0,437.2 L-166.1,447.1 L-178.0,457.1 L-188.7,467.1" stroke="#84694c" stroke-opacity="0.39" stroke-width="1.8" fill="none"/><path d="M-60.2,313.5 L-99.9,344.3 L-141.6,375.1 L-182.0,405.9 L-221.3,436.6" stroke="#84694c" stroke-opacity="0.44" stroke-width="0.5" fill="none"/><path d="M493.3,50.2 L489.6,67.5 L483.9,84.7 L479.5,102.0 L476.3,119.2" stroke="#c8b08e" stroke-opacity="0.37" stroke-width="0.9" fill="none"/><path d="M209.4,91.2 L163.4,124.4 L115.4,157.5 L68.7,190.7 L23.2,223.8" stroke="#c8b08e" stroke-opacity="0.34" stroke-width="0.7" fill="none"/><path d="M399.4,331.4 L386.5,376.5 L371.6,421.5 L358.0,466.6 L345.6,511.7" stroke="#d0bc9e" stroke-opacity="0.38" stroke-width="0.9" fill="none"/><path d="M152.7,430.0 L140.1,449.6 L125.5,469.3 L112.1,489.0 L100.0,508.7" stroke="#6e553c" stroke-opacity="0.39" stroke-width="1.4" fill="none"/><path d="M403.8,230.6 L397.6,249.3 L389.4,268.0 L382.5,286.7 L376.8,305.3" stroke="#6e553c" stroke-opacity="0.15" stroke-width="1.8" fill="none"/><path d="M397.7,92.6 L378.0,125.9 L356.3,159.2 L336.0,192.5 L316.8,225.8" stroke="#7a6046" stroke-opacity="0.17" stroke-width="1.4" fill="none"/><path d="M349.5,242.3 L329.3,284.0 L307.2,325.6 L286.4,367.3 L266.7,409.0" stroke="#c8b08e" stroke-opacity="0.31" stroke-width="2.2" fill="none"/><path d="M67.9,381.9 L58.8,392.8 L47.7,403.8 L37.9,414.7 L29.2,425.6" stroke="#7a6046" stroke-opacity="0.39" stroke-width="1.8" fill="none"/><path d="M-186.5,421.3 L-219.7,447.6 L-254.9,474.0 L-288.8,500.4 L-321.6,526.7" stroke="#6e553c" stroke-opacity="0.49" stroke-width="1.8" fill="none"/><path d="M343.7,158.0 L329.2,181.2 L312.7,204.3 L297.5,227.4 L283.5,250.6" stroke="#c8b08e" stroke-opacity="0.31" stroke-width="0.5" fill="none"/><path d="M463.1,233.2 L461.1,246.3 L457.0,259.4 L454.3,272.5 L452.7,285.7" stroke="#c8b08e" stroke-opacity="0.46" stroke-width="0.7" fill="none"/><path d="M201.3,125.5 L168.6,152.0 L134.0,178.4 L100.6,204.9 L68.5,231.3" stroke="#bea684" stroke-opacity="0.39" stroke-width="1.8" fill="none"/><path d="M395.8,97.6 L371.8,138.2 L345.9,178.9 L321.2,219.5 L297.7,260.2" stroke="#6e553c" stroke-opacity="0.27" stroke-width="0.5" fill="none"/><path d="M-166.0,400.2 L-218.6,441.3 L-273.3,482.4 L-326.7,523.5 L-378.9,564.7" stroke="#d0bc9e" stroke-opacity="0.31" stroke-width="0.5" fill="none"/><path d="M187.3,160.5 L133.9,206.9 L78.6,253.4 L24.6,299.9 L-28.3,346.3" stroke="#c8b08e" stroke-opacity="0.31" stroke-width="0.5" fill="none"/><path d="M-112.7,419.5 L-151.2,453.3 L-191.6,487.0 L-230.8,520.8 L-268.8,554.6" stroke="#d0bc9e" stroke-opacity="0.47" stroke-width="1.8" fill="none"/><path d="M261.1,135.4 L218.2,178.8 L173.4,222.2 L129.8,265.6 L87.4,309.0" stroke="#6e553c" stroke-opacity="0.44" stroke-width="1.8" fill="none"/><path d="M255.7,246.8 L223.7,291.5 L189.6,336.1 L156.9,380.8 L125.3,425.5" stroke="#c8b08e" stroke-opacity="0.21" stroke-width="1.4" fill="none"/><path d="M212.0,387.5 L183.3,434.8 L152.6,482.1 L123.2,529.4 L94.9,576.8" stroke="#d0bc9e" stroke-opacity="0.39" stroke-width="0.9" fill="none"/><path d="M221.0,137.4 L192.8,162.8 L162.6,188.2 L133.7,213.6 L106.0,239.0" stroke="#6e553c" stroke-opacity="0.23" stroke-width="0.5" fill="none"/><path d="M468.9,130.1 L460.6,163.4 L450.3,196.7 L441.3,230.0 L433.5,263.2" stroke="#7a6046" stroke-opacity="0.18" stroke-width="1.1" fill="none"/><path d="M-95.0,431.5 L-141.5,474.3 L-190.1,517.1 L-237.4,559.8 L-283.5,602.6" stroke="#bea684" stroke-opacity="0.33" stroke-width="0.5" fill="none"/><path d="M344.1,431.8 L328.9,478.0 L311.6,524.2 L295.7,570.4 L280.9,616.7" stroke="#d0bc9e" stroke-opacity="0.23" stroke-width="2.2" fill="none"/><path d="M395.5,264.4 L389.4,283.3 L381.3,302.2 L374.5,321.1 L368.9,340.0" stroke="#d0bc9e" stroke-opacity="0.31" stroke-width="0.5" fill="none"/><path d="M443.7,57.9 L432.7,81.7 L419.7,105.5 L408.0,129.4 L397.5,153.2" stroke="#d0bc9e" stroke-opacity="0.39" stroke-width="0.7" fill="none"/><path d="M253.8,294.5 L230.0,331.7 L204.2,369.0 L179.7,406.2 L156.4,443.5" stroke="#7a6046" stroke-opacity="0.36" stroke-width="2.2" fill="none"/><path d="M501.7,351.0 L500.1,379.3 L496.4,407.6 L494.0,435.9 L492.9,464.2" stroke="#c8b08e" stroke-opacity="0.34" stroke-width="1.4" fill="none"/><path d="M-124.3,360.2 L-185.8,407.3 L-249.3,454.5 L-311.5,501.6 L-372.5,548.7" stroke="#7a6046" stroke-opacity="0.48" stroke-width="0.5" fill="none"/><path d="M408.2,267.9 L395.6,308.5 L381.1,349.1 L367.8,389.7 L355.7,430.3" stroke="#c8b08e" stroke-opacity="0.22" stroke-width="0.9" fill="none"/><path d="M175.2,339.5 L152.3,370.5 L127.5,401.6 L104.0,432.6 L81.6,463.7" stroke="#6e553c" stroke-opacity="0.18" stroke-width="0.5" fill="none"/><path d="M106.7,246.5 L78.3,272.6 L47.9,298.7 L18.9,324.9 L-9.0,351.0" stroke="#d0bc9e" stroke-opacity="0.26" stroke-width="1.1" fill="none"/><path d="M285.8,90.4 L240.8,132.2 L193.9,174.1 L148.2,215.9 L103.7,257.7" stroke="#84694c" stroke-opacity="0.35" stroke-width="0.7" fill="none"/><path d="M79.5,204.2 L61.5,218.4 L41.5,232.5 L22.8,246.7 L5.3,260.8" stroke="#bea684" stroke-opacity="0.18" stroke-width="1.4" fill="none"/><path d="M510.3,343.2 L508.6,378.1 L505.0,413.1 L502.6,448.0 L501.4,482.9" stroke="#7a6046" stroke-opacity="0.48" stroke-width="1.4" fill="none"/><path d="M228.6,252.0 L209.5,277.1 L188.3,302.2 L168.5,327.2 L149.9,352.3" stroke="#6e553c" stroke-opacity="0.21" stroke-width="2.2" fill="none"/><path d="M176.3,355.5 L145.8,398.1 L113.3,440.7 L82.2,483.2 L52.2,525.8" stroke="#bea684" stroke-opacity="0.35" stroke-width="1.8" fill="none"/><path d="M-113.9,351.3 L-129.5,363.6 L-147.1,375.9 L-163.4,388.3 L-178.5,400.6" stroke="#c8b08e" stroke-opacity="0.49" stroke-width="0.7" fill="none"/><path d="M3.8,283.9 L-10.4,295.8 L-26.6,307.7 L-41.5,319.6 L-55.3,331.5" stroke="#d0bc9e" stroke-opacity="0.37" stroke-width="0.7" fill="none"/><path d="M3.9,401.9 L-11.6,418.4 L-29.2,434.9 L-45.4,451.4 L-60.4,467.9" stroke="#84694c" stroke-opacity="0.28" stroke-width="1.1" fill="none"/><path d="M293.9,112.7 L273.9,134.2 L251.9,155.7 L231.2,177.1 L211.7,198.6" stroke="#bea684" stroke-opacity="0.42" stroke-width="1.8" fill="none"/><path d="M343.1,226.3 L327.2,257.1 L309.3,287.9 L292.8,318.7 L277.4,349.5" stroke="#7a6046" stroke-opacity="0.17" stroke-width="1.1" fill="none"/><path d="M190.1,424.5 L180.5,441.0 L169.0,457.6 L158.8,474.2 L149.7,490.8" stroke="#84694c" stroke-opacity="0.32" stroke-width="1.4" fill="none"/><path d="M404.0,111.2 L383.2,150.9 L360.4,190.5 L338.9,230.1 L318.6,269.8" stroke="#84694c" stroke-opacity="0.49" stroke-width="1.8" fill="none"/><path d="M432.8,211.0 L419.2,257.2 L403.5,303.5 L389.2,349.7 L376.0,395.9" stroke="#6e553c" stroke-opacity="0.28" stroke-width="1.4" fill="none"/><path d="M249.4,76.3 L224.1,95.9 L196.9,115.5 L171.0,135.1 L146.2,154.7" stroke="#6e553c" stroke-opacity="0.47" stroke-width="0.5" fill="none"/><path d="M490.6,50.9 L480.4,91.4 L468.1,132.0 L457.2,172.5 L447.4,213.0" stroke="#d0bc9e" stroke-opacity="0.49" stroke-width="1.4" fill="none"/><path d="M345.6,428.7 L333.6,465.8 L319.5,503.0 L306.7,540.1 L295.1,577.3" stroke="#bea684" stroke-opacity="0.46" stroke-width="1.4" fill="none"/><path d="M41.7,260.0 L-13.9,305.5 L-71.4,351.1 L-127.7,396.6 L-182.8,442.2" stroke="#7a6046" stroke-opacity="0.48" stroke-width="1.4" fill="none"/><path d="M400.8,129.5 L395.1,141.9 L387.5,154.2 L381.1,166.6 L375.9,178.9" stroke="#c8b08e" stroke-opacity="0.18" stroke-width="0.7" fill="none"/><path d="M452.4,110.5 L448.9,122.5 L443.4,134.5 L439.2,146.5 L436.1,158.4" stroke="#bea684" stroke-opacity="0.28" stroke-width="0.5" fill="none"/><path d="M-174.7,356.3 L-189.7,367.4 L-206.8,378.4 L-222.5,389.4 L-237.1,400.5" stroke="#c8b08e" stroke-opacity="0.40" stroke-width="2.2" fill="none"/><path d="M179.0,161.1 L148.0,187.9 L115.0,214.6 L83.3,241.3 L52.8,268.0" stroke="#6e553c" stroke-opacity="0.41" stroke-width="0.9" fill="none"/><path d="M341.5,65.6 L323.0,85.8 L302.4,105.9 L283.2,126.1 L265.1,146.3" stroke="#7a6046" stroke-opacity="0.48" stroke-width="1.1" fill="none"/><path d="M234.8,171.6 L189.8,218.6 L142.8,265.7 L97.1,312.7 L52.5,359.7" stroke="#c8b08e" stroke-opacity="0.45" stroke-width="1.4" fill="none"/><path d="M64.1,274.9 L40.8,296.0 L15.6,317.0 L-8.4,338.1 L-31.2,359.1" stroke="#7a6046" stroke-opacity="0.18" stroke-width="1.1" fill="none"/><path d="M139.3,158.3 L78.5,204.6 L15.7,250.9 L-45.8,297.1 L-106.2,343.4" stroke="#bea684" stroke-opacity="0.16" stroke-width="1.1" fill="none"/><path d="M428.7,206.2 L421.2,231.3 L411.8,256.3 L403.7,281.3 L396.7,306.3" stroke="#bea684" stroke-opacity="0.45" stroke-width="1.1" fill="none"/><path d="M103.1,350.0 L85.5,370.5 L66.0,391.1 L47.8,411.7 L30.7,432.2" stroke="#6e553c" stroke-opacity="0.32" stroke-width="1.4" fill="none"/><path d="M185.4,187.6 L157.2,214.5 L127.1,241.4 L98.2,268.3 L70.6,295.2" stroke="#84694c" stroke-opacity="0.34" stroke-width="0.9" fill="none"/><path d="M-60.1,289.0 L-70.2,296.8 L-82.3,304.7 L-93.1,312.5 L-102.8,320.3" stroke="#7a6046" stroke-opacity="0.18" stroke-width="1.4" fill="none"/><path d="M376.7,278.0 L362.2,316.7 L345.6,355.4 L330.4,394.1 L316.4,432.8" stroke="#6e553c" stroke-opacity="0.43" stroke-width="0.7" fill="none"/><path d="M44.6,207.7 L10.6,232.2 L-25.3,256.8 L-60.0,281.4 L-93.5,306.0" stroke="#84694c" stroke-opacity="0.21" stroke-width="0.5" fill="none"/><path d="M459.1,147.9 L452.9,171.9 L444.7,196.0 L437.8,220.1 L432.1,244.2" stroke="#7a6046" stroke-opacity="0.29" stroke-width="1.8" fill="none"/><path d="M512.9,160.3 L508.8,208.5 L502.7,256.8 L497.8,305.0 L494.1,353.2" stroke="#bea684" stroke-opacity="0.20" stroke-width="1.8" fill="none"/><path d="M440.3,370.5 L434.9,400.9 L427.6,431.2 L421.5,461.5 L416.7,491.8" stroke="#6e553c" stroke-opacity="0.44" stroke-width="2.2" fill="none"/><path d="M163.5,419.4 L154.5,433.9 L143.5,448.4 L133.8,462.8 L125.3,477.3" stroke="#c8b08e" stroke-opacity="0.28" stroke-width="0.5" fill="none"/><path d="M250.9,293.5 L223.4,335.9 L193.9,378.2 L165.7,420.5 L138.7,462.9" stroke="#d0bc9e" stroke-opacity="0.19" stroke-width="0.7" fill="none"/><path d="M150.2,317.1 L116.5,357.6 L80.8,398.1 L46.4,438.6 L13.1,479.1" stroke="#84694c" stroke-opacity="0.28" stroke-width="0.9" fill="none"/><path d="M496.5,275.4 L493.1,312.7 L487.6,350.0 L483.5,387.2 L480.5,424.5" stroke="#bea684" stroke-opacity="0.48" stroke-width="1.1" fill="none"/><path d="M-17.9,271.9 L-49.0,295.6 L-82.2,319.3 L-114.0,343.1 L-144.7,366.8" stroke="#7a6046" stroke-opacity="0.21" stroke-width="1.1" fill="none"/><path d="M232.1,240.5 L220.5,255.8 L207.0,271.0 L194.7,286.2 L183.6,301.5" stroke="#7a6046" stroke-opacity="0.34" stroke-width="2.2" fill="none"/><path d="M259.5,164.6 L252.7,172.9 L243.8,181.2 L236.2,189.5 L229.9,197.8" stroke="#7a6046" stroke-opacity="0.20" stroke-width="1.4" fill="none"/><path d="M431.0,119.2 L412.0,165.5 L391.0,211.8 L371.3,258.1 L352.8,304.5" stroke="#c8b08e" stroke-opacity="0.40" stroke-width="2.2" fill="none"/><path d="M392.9,47.8 L384.8,59.1 L374.7,70.5 L365.9,81.8 L358.3,93.2" stroke="#7a6046" stroke-opacity="0.26" stroke-width="1.8" fill="none"/><path d="M282.0,79.9 L268.2,92.4 L252.4,104.9 L237.9,117.5 L224.6,130.0" stroke="#c8b08e" stroke-opacity="0.38" stroke-width="1.8" fill="none"/><path d="M146.0,151.2 L85.2,197.2 L22.3,243.3 L-39.2,289.3 L-99.6,335.3" stroke="#6e553c" stroke-opacity="0.31" stroke-width="2.2" fill="none"/><path d="M178.9,422.3 L158.4,455.4 L135.8,488.5 L114.6,521.6 L94.5,554.7" stroke="#bea684" stroke-opacity="0.42" stroke-width="0.7" fill="none"/><path d="M274.7,420.4 L268.4,435.3 L260.1,450.2 L253.1,465.1 L247.2,480.0" stroke="#c8b08e" stroke-opacity="0.24" stroke-width="1.8" fill="none"/><path d="M326.2,379.4 L309.4,421.8 L290.6,464.2 L273.1,506.6 L256.7,549.0" stroke="#bea684" stroke-opacity="0.44" stroke-width="0.5" fill="none"/><path d="M409.4,57.4 L403.4,67.5 L395.5,77.6 L388.9,87.7 L383.4,97.8" stroke="#bea684" stroke-opacity="0.44" stroke-width="0.5" fill="none"/><path d="M386.0,218.8 L371.0,255.0 L354.1,291.2 L338.4,327.4 L324.0,363.6" stroke="#84694c" stroke-opacity="0.50" stroke-width="1.1" fill="none"/><path d="M432.2,67.1 L408.9,112.9 L383.7,158.6 L359.7,204.4 L336.9,250.1" stroke="#6e553c" stroke-opacity="0.37" stroke-width="1.8" fill="none"/><path d="M383.2,216.9 L365.1,259.3 L345.1,301.8 L326.3,344.2 L308.7,386.6" stroke="#6e553c" stroke-opacity="0.20" stroke-width="2.2" fill="none"/><path d="M307.9,374.2 L302.6,387.5 L295.3,400.8 L289.3,414.1 L284.5,427.5" stroke="#7a6046" stroke-opacity="0.47" stroke-width="0.7" fill="none"/><path d="M524.2,48.3 L520.4,92.7 L514.7,137.0 L510.2,181.4 L506.9,225.8" stroke="#c8b08e" stroke-opacity="0.39" stroke-width="2.2" fill="none"/><path d="M350.0,175.7 L344.4,186.2 L336.8,196.8 L330.5,207.3 L325.4,217.8" stroke="#6e553c" stroke-opacity="0.27" stroke-width="1.8" fill="none"/><path d="M305.6,307.2 L288.8,340.4 L270.1,373.7 L252.6,407.0 L236.4,440.2" stroke="#bea684" stroke-opacity="0.47" stroke-width="0.5" fill="none"/><path d="M481.6,45.8 L471.4,79.5 L459.2,113.1 L448.4,146.7 L438.6,180.3" stroke="#d0bc9e" stroke-opacity="0.31" stroke-width="2.2" fill="none"/><path d="M438.5,41.9 L415.2,84.7 L389.9,127.5 L365.9,170.3 L343.1,213.1" stroke="#d0bc9e" stroke-opacity="0.28" stroke-width="2.2" fill="none"/><path d="M205.7,436.3 L190.7,463.5 L173.7,490.6 L157.9,517.8 L143.4,544.9" stroke="#c8b08e" stroke-opacity="0.42" stroke-width="1.1" fill="none"/><path d="M478.4,180.5 L469.1,230.2 L457.9,279.9 L448.0,329.5 L439.2,379.2" stroke="#bea684" stroke-opacity="0.26" stroke-width="1.1" fill="none"/><path d="M108.0,337.7 L73.5,376.8 L37.0,415.9 L1.8,455.1 L-32.3,494.2" stroke="#6e553c" stroke-opacity="0.35" stroke-width="0.9" fill="none"/><path d="M-219.9,430.9 L-240.1,446.7 L-262.3,462.6 L-283.1,478.4 L-302.9,494.2" stroke="#6e553c" stroke-opacity="0.27" stroke-width="1.4" fill="none"/><path d="M156.6,398.2 L143.2,418.1 L127.8,438.0 L113.7,457.9 L100.7,477.8" stroke="#84694c" stroke-opacity="0.26" stroke-width="0.7" fill="none"/><path d="M380.4,66.2 L364.0,88.5 L345.5,110.9 L328.3,133.2 L312.3,155.6" stroke="#bea684" stroke-opacity="0.34" stroke-width="1.4" fill="none"/><path d="M291.5,93.3 L270.4,114.0 L247.3,134.7 L225.5,155.4 L204.9,176.1" stroke="#bea684" stroke-opacity="0.50" stroke-width="2.2" fill="none"/><path d="M64.3,372.3 L37.0,402.5 L7.8,432.7 L-20.1,463.0 L-46.9,493.2" stroke="#84694c" stroke-opacity="0.18" stroke-width="0.9" fill="none"/><path d="M324.3,225.4 L310.9,249.2 L295.6,273.0 L281.6,296.8 L268.7,320.6" stroke="#bea684" stroke-opacity="0.30" stroke-width="2.2" fill="none"/><path d="M326.5,68.0 L290.8,103.9 L253.0,139.9 L216.5,175.8 L181.2,211.7" stroke="#7a6046" stroke-opacity="0.28" stroke-width="0.9" fill="none"/><path d="M201.9,167.9 L163.7,203.7 L123.5,239.4 L84.6,275.2 L46.8,310.9" stroke="#7a6046" stroke-opacity="0.36" stroke-width="0.7" fill="none"/><path d="M446.2,369.6 L444.8,380.9 L441.4,392.2 L439.3,403.6 L438.4,414.9" stroke="#bea684" stroke-opacity="0.24" stroke-width="0.7" fill="none"/><path d="M392.3,90.7 L368.7,128.7 L343.1,166.7 L318.8,204.7 L295.7,242.7" stroke="#84694c" stroke-opacity="0.48" stroke-width="0.5" fill="none"/><path d="M156.4,394.7 L126.8,437.0 L95.2,479.2 L65.0,521.5 L35.9,563.8" stroke="#c8b08e" stroke-opacity="0.17" stroke-width="0.5" fill="none"/><path d="M390.8,55.6 L368.8,85.5 L344.9,115.4 L322.2,145.2 L300.8,175.1" stroke="#7a6046" stroke-opacity="0.39" stroke-width="1.1" fill="none"/><path d="M468.5,320.6 L465.8,342.1 L461.1,363.6 L457.7,385.1 L455.4,406.6" stroke="#d0bc9e" stroke-opacity="0.40" stroke-width="1.8" fill="none"/><path d="M432.5,150.3 L425.9,170.0 L417.2,189.7 L409.9,209.4 L403.7,229.1" stroke="#84694c" stroke-opacity="0.33" stroke-width="1.4" fill="none"/><path d="M488.3,116.1 L487.4,123.7 L484.6,131.2 L483.0,138.8 L482.6,146.4" stroke="#7a6046" stroke-opacity="0.28" stroke-width="0.9" fill="none"/><path d="M503.3,229.0 L499.0,275.0 L492.8,321.0 L487.8,367.0 L484.0,413.1" stroke="#bea684" stroke-opacity="0.32" stroke-width="2.2" fill="none"/><path d="M441.2,73.8 L438.1,82.1 L433.0,90.3 L429.1,98.6 L426.5,106.9" stroke="#d0bc9e" stroke-opacity="0.25" stroke-width="0.9" fill="none"/><path d="M434.6,259.2 L423.2,304.1 L409.8,349.1 L397.7,394.0 L386.8,438.9" stroke="#7a6046" stroke-opacity="0.29" stroke-width="0.7" fill="none"/><path d="M207.7,182.2 L173.8,216.1 L137.9,249.9 L103.2,283.7 L69.8,317.5" stroke="#6e553c" stroke-opacity="0.31" stroke-width="0.7" fill="none"/><path d="M157.5,380.3 L127.6,422.1 L95.6,463.9 L65.0,505.7 L35.5,547.5" stroke="#c8b08e" stroke-opacity="0.26" stroke-width="0.7" fill="none"/><path d="M-105.3,409.4 L-140.2,439.9 L-177.1,470.4 L-212.7,500.9 L-247.2,531.3" stroke="#7a6046" stroke-opacity="0.47" stroke-width="0.9" fill="none"/><path d="M124.2,158.1 L112.1,167.4 L98.1,176.7 L85.3,186.0 L73.6,195.3" stroke="#c8b08e" stroke-opacity="0.17" stroke-width="0.9" fill="none"/><path d="M417.1,419.2 L413.9,436.9 L408.7,454.5 L404.8,472.2 L402.1,489.8" stroke="#d0bc9e" stroke-opacity="0.17" stroke-width="0.9" fill="none"/><path d="M482.0,90.1 L479.7,101.8 L475.4,113.5 L472.4,125.2 L470.5,137.0" stroke="#84694c" stroke-opacity="0.25" stroke-width="0.7" fill="none"/><path d="M327.0,369.5 L319.8,388.3 L310.7,407.1 L302.8,425.8 L296.1,444.6" stroke="#c8b08e" stroke-opacity="0.35" stroke-width="1.1" fill="none"/><path d="M375.8,96.8 L357.1,124.9 L336.3,153.1 L316.9,181.2 L298.6,209.4" stroke="#84694c" stroke-opacity="0.31" stroke-width="1.1" fill="none"/><path d="M493.1,435.3 L491.3,464.5 L487.5,493.6 L484.9,522.8 L483.6,551.9" stroke="#7a6046" stroke-opacity="0.23" stroke-width="0.5" fill="none"/><path d="M117.6,292.5 L92.0,319.6 L64.3,346.8 L37.9,373.9 L12.7,401.1" stroke="#6e553c" stroke-opacity="0.17" stroke-width="2.2" fill="none"/><path d="M360.1,264.5 L338.5,314.3 L314.9,364.1 L292.7,413.9 L271.5,463.8" stroke="#84694c" stroke-opacity="0.31" stroke-width="0.7" fill="none"/><path d="M151.2,206.5 L98.3,254.7 L43.4,302.8 L-10.2,351.0 L-62.6,399.2" stroke="#84694c" stroke-opacity="0.44" stroke-width="1.1" fill="none"/><path d="M-241.2,402.4 L-312.0,452.3 L-384.8,502.3 L-456.3,552.3 L-526.7,602.3" stroke="#84694c" stroke-opacity="0.24" stroke-width="0.9" fill="none"/><path d="M299.7,248.6 L279.2,283.0 L256.6,317.4 L235.4,351.8 L215.3,386.1" stroke="#6e553c" stroke-opacity="0.29" stroke-width="1.4" fill="none"/><path d="M-92.4,371.6 L-143.0,413.4 L-195.5,455.1 L-246.8,496.9 L-296.9,538.6" stroke="#c8b08e" stroke-opacity="0.44" stroke-width="2.2" fill="none"/><path d="M112.0,229.4 L55.9,278.8 L-2.2,328.2 L-59.0,377.6 L-114.7,427.1" stroke="#7a6046" stroke-opacity="0.42" stroke-width="0.9" fill="none"/><path d="M-21.0,393.0 L-69.3,439.8 L-119.5,486.5 L-168.5,533.3 L-216.3,580.0" stroke="#d0bc9e" stroke-opacity="0.41" stroke-width="1.1" fill="none"/><path d="M99.7,268.0 L64.1,301.9 L26.5,335.7 L-9.7,369.6 L-44.8,403.4" stroke="#bea684" stroke-opacity="0.46" stroke-width="1.4" fill="none"/><path d="M212.9,342.4 L194.7,370.3 L174.6,398.2 L155.7,426.1 L138.0,453.9" stroke="#7a6046" stroke-opacity="0.50" stroke-width="1.4" fill="none"/><path d="M-41.6,358.3 L-96.3,406.0 L-153.0,453.8 L-208.4,501.5 L-262.6,549.3" stroke="#d0bc9e" stroke-opacity="0.33" stroke-width="0.5" fill="none"/><path d="M-63.8,328.3 L-80.1,341.6 L-98.4,354.9 L-115.5,368.3 L-131.3,381.6" stroke="#6e553c" stroke-opacity="0.39" stroke-width="1.4" fill="none"/><path d="M382.9,70.9 L375.8,81.5 L366.7,92.1 L358.8,102.7 L352.1,113.4" stroke="#6e553c" stroke-opacity="0.19" stroke-width="1.8" fill="none"/><path d="M184.9,286.0 L146.1,333.7 L105.2,381.3 L65.7,428.9 L27.3,476.6" stroke="#7a6046" stroke-opacity="0.47" stroke-width="1.8" fill="none"/><path d="M396.9,78.4 L371.8,117.7 L344.8,157.1 L319.0,196.4 L294.4,235.8" stroke="#6e553c" stroke-opacity="0.27" stroke-width="1.4" fill="none"/><path d="M135.1,177.9 L81.0,221.3 L25.0,264.7 L-29.8,308.1 L-83.4,351.5" stroke="#6e553c" stroke-opacity="0.23" stroke-width="0.5" fill="none"/><path d="M379.4,77.1 L348.6,119.8 L315.9,162.5 L284.5,205.2 L254.2,247.9" stroke="#6e553c" stroke-opacity="0.29" stroke-width="1.1" fill="none"/><path d="M311.4,114.3 L297.9,130.3 L282.3,146.4 L268.1,162.4 L255.0,178.4" stroke="#84694c" stroke-opacity="0.27" stroke-width="1.8" fill="none"/><path d="M518.2,145.1 L517.6,161.0 L514.9,176.9 L513.5,192.7 L513.4,208.6" stroke="#84694c" stroke-opacity="0.35" stroke-width="1.4" fill="none"/><path d="M308.0,421.7 L295.3,453.9 L280.7,486.2 L267.3,518.4 L255.1,550.6" stroke="#bea684" stroke-opacity="0.27" stroke-width="2.2" fill="none"/><path d="M323.3,55.9 L287.5,89.3 L249.7,122.8 L213.2,156.2 L177.8,189.6" stroke="#84694c" stroke-opacity="0.19" stroke-width="1.8" fill="none"/><path d="M0.1,341.9 L-20.4,361.0 L-43.0,380.1 L-64.2,399.2 L-84.3,418.3" stroke="#84694c" stroke-opacity="0.20" stroke-width="0.5" fill="none"/><path d="M139.9,281.5 L96.0,328.7 L50.1,376.0 L5.5,423.2 L-37.9,470.5" stroke="#bea684" stroke-opacity="0.49" stroke-width="0.5" fill="none"/><path d="M302.3,267.9 L292.5,285.9 L280.8,303.9 L270.3,321.9 L261.0,339.9" stroke="#c8b08e" stroke-opacity="0.28" stroke-width="1.4" fill="none"/><path d="M386.3,137.1 L380.1,149.6 L371.9,162.1 L365.0,174.6 L359.3,187.1" stroke="#6e553c" stroke-opacity="0.38" stroke-width="2.2" fill="none"/><path d="M-105.1,368.2 L-115.7,377.2 L-128.3,386.2 L-139.6,395.2 L-149.8,404.2" stroke="#84694c" stroke-opacity="0.46" stroke-width="2.2" fill="none"/><path d="M39.4,270.2 L15.0,291.0 L-11.4,311.7 L-36.5,332.5 L-60.5,353.3" stroke="#c8b08e" stroke-opacity="0.25" stroke-width="2.2" fill="none"/><path d="M64.8,221.6 L45.9,236.7 L25.0,251.8 L5.4,266.8 L-13.0,281.9" stroke="#7a6046" stroke-opacity="0.33" stroke-width="0.9" fill="none"/><path d="M450.0,121.2 L445.3,137.0 L438.5,152.7 L433.0,168.4 L428.7,184.1" stroke="#bea684" stroke-opacity="0.25" stroke-width="0.5" fill="none"/><path d="M-27.2,280.1 L-72.1,314.1 L-119.0,348.2 L-164.6,382.2 L-209.1,416.3" stroke="#bea684" stroke-opacity="0.37" stroke-width="1.4" fill="none"/><path d="M183.1,315.4 L170.9,332.1 L156.6,348.7 L143.6,365.4 L131.8,382.0" stroke="#84694c" stroke-opacity="0.31" stroke-width="1.4" fill="none"/><path d="M369.8,259.5 L353.3,299.7 L334.8,339.8 L317.7,380.0 L301.6,420.1" stroke="#d0bc9e" stroke-opacity="0.37" stroke-width="1.4" fill="none"/><path d="M46.7,327.7 L31.3,343.1 L14.0,358.4 L-2.1,373.8 L-17.1,389.2" stroke="#d0bc9e" stroke-opacity="0.41" stroke-width="0.9" fill="none"/><path d="M502.6,193.8 L502.0,205.0 L499.4,216.2 L498.1,227.4 L497.9,238.6" stroke="#7a6046" stroke-opacity="0.37" stroke-width="1.4" fill="none"/><path d="M-159.2,346.5 L-229.4,396.2 L-301.6,445.9 L-372.5,495.6 L-442.2,545.3" stroke="#bea684" stroke-opacity="0.23" stroke-width="1.4" fill="none"/><path d="M137.9,378.8 L124.0,397.7 L108.1,416.6 L93.5,435.5 L80.1,454.4" stroke="#bea684" stroke-opacity="0.28" stroke-width="2.2" fill="none"/><path d="M423.5,330.9 L414.4,370.0 L403.3,409.1 L393.4,448.3 L384.8,487.4" stroke="#d0bc9e" stroke-opacity="0.32" stroke-width="1.4" fill="none"/><path d="M319.8,101.5 L282.5,143.5 L243.3,185.4 L205.3,227.4 L168.5,269.3" stroke="#6e553c" stroke-opacity="0.16" stroke-width="1.4" fill="none"/><path d="M-90.6,383.6 L-99.1,391.3 L-109.6,399.1 L-118.9,406.8 L-126.9,414.6" stroke="#7a6046" stroke-opacity="0.18" stroke-width="1.4" fill="none"/><path d="M496.9,382.1 L495.6,405.3 L492.3,428.5 L490.3,451.7 L489.4,474.9" stroke="#7a6046" stroke-opacity="0.49" stroke-width="1.1" fill="none"/><path d="M3.7,367.0 L-3.6,374.7 L-12.9,382.3 L-21.0,390.0 L-27.8,397.6" stroke="#84694c" stroke-opacity="0.49" stroke-width="2.2" fill="none"/><path d="M329.6,176.5 L310.8,205.9 L290.0,235.2 L270.5,264.6 L252.2,294.0" stroke="#84694c" stroke-opacity="0.39" stroke-width="1.1" fill="none"/><path d="M386.6,103.8 L376.5,121.1 L364.3,138.5 L353.4,155.8 L343.7,173.2" stroke="#7a6046" stroke-opacity="0.25" stroke-width="1.8" fill="none"/><path d="M172.5,295.2 L144.2,329.7 L114.0,364.2 L85.0,398.7 L57.1,433.2" stroke="#7a6046" stroke-opacity="0.31" stroke-width="1.1" fill="none"/><path d="M495.8,174.0 L493.8,192.3 L489.8,210.6 L487.1,229.0 L485.5,247.3" stroke="#84694c" stroke-opacity="0.34" stroke-width="0.7" fill="none"/><path d="M344.7,289.0 L334.6,312.8 L322.4,336.6 L311.6,360.3 L301.9,384.1" stroke="#7a6046" stroke-opacity="0.36" stroke-width="1.1" fill="none"/><path d="M511.0,405.8 L510.2,431.7 L507.4,457.7 L505.9,483.7 L505.6,509.7" stroke="#84694c" stroke-opacity="0.20" stroke-width="1.1" fill="none"/><path d="M279.2,89.3 L246.4,119.2 L211.5,149.1 L177.9,178.9 L145.5,208.8" stroke="#c8b08e" stroke-opacity="0.27" stroke-width="0.7" fill="none"/><path d="M490.7,82.1 L485.1,109.2 L477.5,136.3 L471.2,163.4 L466.1,190.5" stroke="#c8b08e" stroke-opacity="0.47" stroke-width="0.9" fill="none"/><path d="M502.5,229.5 L498.6,271.9 L492.7,314.3 L488.0,356.7 L484.5,399.1" stroke="#6e553c" stroke-opacity="0.29" stroke-width="0.9" fill="none"/><path d="M425.9,53.7 L407.1,86.6 L386.4,119.5 L367.0,152.5 L348.7,185.4" stroke="#bea684" stroke-opacity="0.19" stroke-width="1.8" fill="none"/><path d="M262.2,211.1 L249.5,228.1 L234.9,245.1 L221.5,262.2 L209.3,279.2" stroke="#6e553c" stroke-opacity="0.30" stroke-width="0.9" fill="none"/><path d="M286.4,63.2 L245.8,96.8 L203.2,130.4 L161.9,164.0 L121.8,197.5" stroke="#d0bc9e" stroke-opacity="0.23" stroke-width="2.2" fill="none"/><path d="M282.2,44.4 L218.2,91.5 L152.1,138.6 L87.4,185.7 L23.9,232.7" stroke="#84694c" stroke-opacity="0.19" stroke-width="0.9" fill="none"/><path d="M121.0,243.9 L105.4,258.9 L87.8,274.0 L71.5,289.0 L56.4,304.1" stroke="#7a6046" stroke-opacity="0.31" stroke-width="0.5" fill="none"/><path d="M272.7,57.4 L261.8,66.2 L248.9,75.0 L237.2,83.7 L226.8,92.5" stroke="#c8b08e" stroke-opacity="0.19" stroke-width="1.8" fill="none"/><path d="M467.2,224.9 L458.8,269.1 L448.4,313.3 L439.3,357.4 L431.4,401.6" stroke="#d0bc9e" stroke-opacity="0.26" stroke-width="2.2" fill="none"/><path d="M214.1,340.0 L197.3,365.8 L178.6,391.6 L161.1,417.3 L144.8,443.1" stroke="#84694c" stroke-opacity="0.22" stroke-width="0.7" fill="none"/><path d="M387.6,73.0 L376.2,89.9 L362.8,106.9 L350.8,123.9 L339.9,140.9" stroke="#c8b08e" stroke-opacity="0.45" stroke-width="0.5" fill="none"/><path d="M246.0,366.2 L219.0,413.9 L190.1,461.6 L162.4,509.2 L135.9,556.9" stroke="#7a6046" stroke-opacity="0.30" stroke-width="0.9" fill="none"/><path d="M258.3,202.1 L225.9,242.4 L191.6,282.7 L158.5,323.0 L126.6,363.3" stroke="#7a6046" stroke-opacity="0.24" stroke-width="2.2" fill="none"/><path d="M21.3,378.2 L5.3,395.0 L-12.7,411.8 L-29.4,428.6 L-45.0,445.4" stroke="#84694c" stroke-opacity="0.44" stroke-width="1.1" fill="none"/><path d="M190.1,223.3 L160.0,255.6 L127.8,287.9 L96.9,320.1 L67.2,352.4" stroke="#84694c" stroke-opacity="0.44" stroke-width="2.2" fill="none"/><path d="M438.6,325.8 L432.6,356.3 L424.5,386.8 L417.7,417.3 L412.1,447.9" stroke="#84694c" stroke-opacity="0.33" stroke-width="0.5" fill="none"/><path d="M233.1,281.9 L205.1,321.5 L175.1,361.1 L146.4,400.7 L118.8,440.3" stroke="#c8b08e" stroke-opacity="0.32" stroke-width="0.9" fill="none"/><path d="M189.5,269.3 L151.1,315.2 L110.6,361.1 L71.5,407.0 L33.5,452.9" stroke="#84694c" stroke-opacity="0.27" stroke-width="1.4" fill="none"/><path d="M175.7,262.9 L158.1,283.3 L138.5,303.7 L120.3,324.0 L103.1,344.4" stroke="#6e553c" stroke-opacity="0.20" stroke-width="2.2" fill="none"/><path d="M366.9,259.3 L355.7,286.7 L342.5,314.1 L330.6,341.5 L319.8,368.9" stroke="#bea684" stroke-opacity="0.21" stroke-width="2.2" fill="none"/><path d="M385.1,47.0 L359.7,78.7 L332.4,110.4 L306.3,142.1 L281.4,173.8" stroke="#c8b08e" stroke-opacity="0.31" stroke-width="0.5" fill="none"/><path d="M184.7,155.0 L136.5,196.0 L86.4,237.0 L37.5,278.0 L-10.3,319.0" stroke="#6e553c" stroke-opacity="0.42" stroke-width="1.4" fill="none"/><path d="M256.3,231.4 L236.4,258.5 L214.5,285.7 L193.9,312.8 L174.4,339.9" stroke="#bea684" stroke-opacity="0.35" stroke-width="1.1" fill="none"/><path d="M397.9,348.9 L387.8,385.7 L375.7,422.5 L364.9,459.3 L355.2,496.2" stroke="#c8b08e" stroke-opacity="0.44" stroke-width="0.9" fill="none"/><path d="M349.5,139.3 L327.4,172.8 L303.2,206.3 L280.4,239.9 L258.8,273.4" stroke="#c8b08e" stroke-opacity="0.38" stroke-width="0.7" fill="none"/><path d="M168.9,400.8 L164.3,408.6 L157.7,416.4 L152.4,424.2 L148.3,432.0" stroke="#6e553c" stroke-opacity="0.21" stroke-width="1.4" fill="none"/><path d="M20.4,269.9 L-36.4,315.6 L-95.3,361.3 L-152.8,407.0 L-209.1,452.7" stroke="#7a6046" stroke-opacity="0.17" stroke-width="1.1" fill="none"/><path d="M47.8,202.8 L-3.0,239.1 L-55.9,275.4 L-107.5,311.7 L-157.9,348.0" stroke="#bea684" stroke-opacity="0.35" stroke-width="1.4" fill="none"/><path d="M244.4,262.8 L223.5,292.3 L200.6,321.9 L178.9,351.5 L158.5,381.1" stroke="#7a6046" stroke-opacity="0.30" stroke-width="0.9" fill="none"/><path d="M9.1,420.5 L-2.7,433.8 L-16.5,447.1 L-29.1,460.5 L-40.4,473.8" stroke="#bea684" stroke-opacity="0.32" stroke-width="0.5" fill="none"/><path d="M457.5,301.8 L455.5,315.9 L451.6,330.0 L448.9,344.1 L447.4,358.1" stroke="#d0bc9e" stroke-opacity="0.43" stroke-width="0.5" fill="none"/><path d="M484.9,287.8 L479.1,335.8 L471.3,383.7 L464.8,431.7 L459.5,479.7" stroke="#bea684" stroke-opacity="0.33" stroke-width="0.9" fill="none"/><path d="M444.0,366.9 L440.8,386.7 L435.7,406.5 L431.9,426.3 L429.3,446.0" stroke="#c8b08e" stroke-opacity="0.32" stroke-width="0.5" fill="none"/><path d="M320.9,280.7 L303.2,316.1 L283.4,351.6 L264.9,387.0 L247.6,422.4" stroke="#6e553c" stroke-opacity="0.49" stroke-width="0.7" fill="none"/><path d="M282.2,268.2 L252.9,315.8 L221.6,363.3 L191.6,410.9 L162.8,458.4" stroke="#bea684" stroke-opacity="0.17" stroke-width="1.1" fill="none"/><path d="M302.5,187.2 L282.6,215.8 L260.7,244.3 L240.1,272.8 L220.7,301.3" stroke="#bea684" stroke-opacity="0.45" stroke-width="1.8" fill="none"/><path d="M518.4,247.2 L518.3,260.4 L516.2,273.7 L515.4,286.9 L515.8,300.2" stroke="#6e553c" stroke-opacity="0.45" stroke-width="0.9" fill="none"/><path d="M418.5,57.2 L400.1,88.2 L379.8,119.1 L360.7,150.0 L342.8,181.0" stroke="#7a6046" stroke-opacity="0.23" stroke-width="0.9" fill="none"/><path d="M160.2,296.0 L137.7,322.8 L113.1,349.6 L89.9,376.4 L67.8,403.2" stroke="#6e553c" stroke-opacity="0.29" stroke-width="1.8" fill="none"/><path d="M394.5,170.7 L378.0,207.1 L359.6,243.6 L342.4,280.0 L326.4,316.4" stroke="#bea684" stroke-opacity="0.28" stroke-width="2.2" fill="none"/><path d="M518.5,213.2 L517.5,237.8 L514.6,262.4 L512.9,287.0 L512.3,311.5" stroke="#c8b08e" stroke-opacity="0.22" stroke-width="1.8" fill="none"/><path d="M166.3,138.4 L140.1,158.8 L111.8,179.2 L84.8,199.6 L58.9,219.9" stroke="#7a6046" stroke-opacity="0.28" stroke-width="0.5" fill="none"/><path d="M-12.7,354.1 L-32.7,372.8 L-54.8,391.5 L-75.6,410.2 L-95.2,428.9" stroke="#6e553c" stroke-opacity="0.25" stroke-width="0.7" fill="none"/><path d="M189.5,148.0 L161.6,171.8 L131.6,195.6 L102.9,219.4 L75.4,243.2" stroke="#bea684" stroke-opacity="0.32" stroke-width="0.7" fill="none"/><path d="M205.5,266.6 L186.1,291.1 L164.8,315.6 L144.7,340.1 L125.9,364.6" stroke="#c8b08e" stroke-opacity="0.16" stroke-width="0.7" fill="none"/><path d="M91.5,329.9 L83.0,339.7 L72.6,349.4 L63.4,359.1 L55.3,368.8" stroke="#7a6046" stroke-opacity="0.15" stroke-width="2.2" fill="none"/><path d="M73.4,205.4 L9.7,253.5 L-56.0,301.6 L-120.4,349.7 L-183.6,397.9" stroke="#84694c" stroke-opacity="0.37" stroke-width="1.8" fill="none"/><path d="M310.2,137.1 L286.0,167.4 L259.7,197.6 L234.8,227.8 L211.1,258.1" stroke="#7a6046" stroke-opacity="0.27" stroke-width="0.9" fill="none"/><path d="M345.1,238.1 L326.8,275.0 L306.4,311.9 L287.4,348.7 L269.5,385.6" stroke="#bea684" stroke-opacity="0.40" stroke-width="0.5" fill="none"/><path d="M386.7,161.6 L379.6,176.8 L370.6,192.1 L362.8,207.3 L356.2,222.6" stroke="#bea684" stroke-opacity="0.21" stroke-width="0.5" fill="none"/><path d="M29.4,343.1 L15.2,357.4 L-1.1,371.7 L-16.1,386.0 L-29.9,400.3" stroke="#84694c" stroke-opacity="0.33" stroke-width="0.5" fill="none"/><path d="M39.2,236.2 L13.4,256.4 L-14.4,276.5 L-41.0,296.6 L-66.3,316.7" stroke="#84694c" stroke-opacity="0.20" stroke-width="1.8" fill="none"/><path d="M473.5,51.1 L459.1,93.5 L442.8,135.9 L427.6,178.2 L413.7,220.6" stroke="#d0bc9e" stroke-opacity="0.28" stroke-width="1.4" fill="none"/><path d="M178.8,255.9 L166.7,269.9 L152.7,284.0 L139.9,298.1 L128.4,312.1" stroke="#bea684" stroke-opacity="0.30" stroke-width="2.2" fill="none"/><path d="M-102.0,333.1 L-145.9,366.2 L-191.7,399.2 L-236.2,432.3 L-279.6,465.4" stroke="#d0bc9e" stroke-opacity="0.34" stroke-width="2.2" fill="none"/><path d="M184.4,311.5 L177.8,320.7 L169.3,330.0 L162.0,339.3 L156.0,348.6" stroke="#d0bc9e" stroke-opacity="0.31" stroke-width="0.7" fill="none"/><path d="M230.9,154.5 L189.2,195.2 L145.6,235.9 L103.2,276.6 L62.0,317.3" stroke="#d0bc9e" stroke-opacity="0.32" stroke-width="0.5" fill="none"/><path d="M391.4,64.2 L385.6,73.2 L377.8,82.3 L371.2,91.4 L365.9,100.4" stroke="#7a6046" stroke-opacity="0.15" stroke-width="0.9" fill="none"/><path d="M493.1,312.6 L492.5,324.6 L490.0,336.5 L488.7,348.5 L488.6,360.4" stroke="#6e553c" stroke-opacity="0.34" stroke-width="0.9" fill="none"/><path d="M271.2,177.3 L242.2,212.7 L211.1,248.0 L181.4,283.3 L152.8,318.6" stroke="#c8b08e" stroke-opacity="0.38" stroke-width="1.4" fill="none"/><path d="M302.3,62.0 L282.4,79.8 L260.4,97.6 L239.8,115.4 L220.3,133.2" stroke="#6e553c" stroke-opacity="0.33" stroke-width="1.1" fill="none"/><path d="M366.1,245.6 L353.6,274.8 L339.1,304.1 L325.8,333.3 L313.8,362.6" stroke="#bea684" stroke-opacity="0.27" stroke-width="0.7" fill="none"/><path d="M390.7,227.5 L383.6,246.5 L374.6,265.6 L366.8,284.6 L360.2,303.7" stroke="#7a6046" stroke-opacity="0.16" stroke-width="1.1" fill="none"/><path d="M231.4,316.7 L224.8,327.5 L216.2,338.4 L208.9,349.3 L202.8,360.1" stroke="#6e553c" stroke-opacity="0.33" stroke-width="1.8" fill="none"/><path d="M434.6,59.5 L411.1,105.0 L385.6,150.6 L361.4,196.2 L338.4,241.8" stroke="#d0bc9e" stroke-opacity="0.25" stroke-width="2.2" fill="none"/><path d="M68.7,324.1 L45.1,348.1 L19.5,372.2 L-4.8,396.3 L-27.9,420.4" stroke="#6e553c" stroke-opacity="0.45" stroke-width="2.2" fill="none"/><path d="M508.1,108.9 L506.5,125.4 L502.9,141.8 L500.7,158.3 L499.6,174.7" stroke="#c8b08e" stroke-opacity="0.45" stroke-width="1.1" fill="none"/><path d="M98.3,401.5 L90.8,411.5 L81.4,421.6 L73.3,431.6 L66.3,441.7" stroke="#6e553c" stroke-opacity="0.26" stroke-width="1.1" fill="none"/><path d="M262.5,97.3 L248.7,109.9 L232.9,122.5 L218.4,135.0 L205.1,147.6" stroke="#d0bc9e" stroke-opacity="0.47" stroke-width="1.8" fill="none"/><path d="M335.9,153.3 L329.0,164.5 L320.0,175.6 L312.3,186.8 L305.7,197.9" stroke="#d0bc9e" stroke-opacity="0.49" stroke-width="1.8" fill="none"/><path d="M445.0,53.7 L427.6,90.2 L408.2,126.8 L390.2,163.3 L373.3,199.8" stroke="#84694c" stroke-opacity="0.25" stroke-width="0.5" fill="none"/><path d="M49.7,265.9 L9.3,300.2 L-33.0,334.4 L-74.0,368.7 L-113.9,402.9" stroke="#7a6046" stroke-opacity="0.41" stroke-width="2.2" fill="none"/><path d="M278.1,143.2 L241.9,183.3 L203.7,223.5 L166.8,263.7 L131.0,303.9" stroke="#bea684" stroke-opacity="0.39" stroke-width="0.5" fill="none"/><path d="M450.3,232.4 L440.4,275.3 L428.5,318.2 L417.9,361.1 L408.5,404.0" stroke="#c8b08e" stroke-opacity="0.29" stroke-width="1.1" fill="none"/><path d="M504.1,129.3 L501.0,155.4 L496.0,181.5 L492.3,207.6 L489.7,233.8" stroke="#6e553c" stroke-opacity="0.28" stroke-width="2.2" fill="none"/><path d="M36.6,266.4 L23.6,277.5 L8.7,288.6 L-4.9,299.8 L-17.4,310.9" stroke="#d0bc9e" stroke-opacity="0.47" stroke-width="1.1" fill="none"/><path d="M301.8,430.7 L291.2,457.8 L278.5,484.9 L267.2,512.0 L257.0,539.2" stroke="#d0bc9e" stroke-opacity="0.33" stroke-width="1.8" fill="none"/><path d="M77.2,416.4 L62.2,435.4 L45.1,454.5 L29.4,473.5 L14.8,492.5" stroke="#d0bc9e" stroke-opacity="0.36" stroke-width="1.8" fill="none"/><path d="M469.0,225.1 L460.3,272.0 L449.5,319.0 L440.1,365.9 L431.8,412.9" stroke="#6e553c" stroke-opacity="0.25" stroke-width="2.2" fill="none"/><path d="M305.0,306.7 L292.0,332.9 L277.0,359.0 L263.2,385.1 L250.6,411.3" stroke="#6e553c" stroke-opacity="0.21" stroke-width="1.8" fill="none"/><path d="M292.0,73.0 L237.8,120.8 L181.6,168.5 L126.7,216.3 L73.0,264.0" stroke="#bea684" stroke-opacity="0.25" stroke-width="0.9" fill="none"/><path d="M510.2,65.3 L507.9,84.7 L503.5,104.2 L500.5,123.6 L498.6,143.1" stroke="#c8b08e" stroke-opacity="0.43" stroke-width="1.8" fill="none"/><path d="M278.0,183.7 L257.8,209.7 L235.5,235.7 L214.5,261.8 L194.7,287.8" stroke="#6e553c" stroke-opacity="0.37" stroke-width="0.9" fill="none"/><path d="M-127.5,436.0 L-159.4,464.3 L-193.3,492.7 L-225.9,521.0 L-257.4,549.3" stroke="#bea684" stroke-opacity="0.34" stroke-width="1.8" fill="none"/><path d="M196.0,268.2 L181.1,286.9 L164.2,305.6 L148.5,324.3 L134.0,342.9" stroke="#6e553c" stroke-opacity="0.34" stroke-width="0.5" fill="none"/><path d="M317.3,143.3 L287.4,182.5 L255.5,221.7 L224.8,260.9 L195.3,300.1" stroke="#c8b08e" stroke-opacity="0.36" stroke-width="1.8" fill="none"/><path d="M79.0,252.3 L25.7,298.6 L-29.5,344.8 L-83.5,391.1 L-136.2,437.4" stroke="#7a6046" stroke-opacity="0.43" stroke-width="1.4" fill="none"/><path d="M510.4,290.6 L510.2,303.5 L507.9,316.5 L507.0,329.5 L507.2,342.4" stroke="#6e553c" stroke-opacity="0.24" stroke-width="2.2" fill="none"/><path d="M63.9,252.4 L12.2,295.8 L-41.4,339.3 L-93.8,382.8 L-145.0,426.3" stroke="#d0bc9e" stroke-opacity="0.42" stroke-width="0.5" fill="none"/><path d="M285.0,192.2 L269.5,213.5 L252.0,234.7 L235.8,256.0 L220.7,277.2" stroke="#6e553c" stroke-opacity="0.23" stroke-width="0.9" fill="none"/><path d="M368.5,124.7 L341.1,168.2 L311.6,211.7 L283.5,255.2 L256.5,298.7" stroke="#d0bc9e" stroke-opacity="0.35" stroke-width="1.1" fill="none"/><path d="M434.1,420.2 L425.2,469.8 L414.3,519.3 L404.8,568.9 L396.4,618.5" stroke="#84694c" stroke-opacity="0.25" stroke-width="0.9" fill="none"/><path d="M53.3,226.1 L34.6,240.8 L14.0,255.5 L-5.4,270.2 L-23.5,284.9" stroke="#6e553c" stroke-opacity="0.41" stroke-width="1.4" fill="none"/><path d="M409.2,89.0 L403.9,99.6 L396.6,110.1 L390.6,120.7 L385.7,131.3" stroke="#6e553c" stroke-opacity="0.25" stroke-width="2.2" fill="none"/><path d="M59.7,274.4 L32.6,298.5 L3.4,322.7 L-24.4,346.9 L-51.0,371.1" stroke="#c8b08e" stroke-opacity="0.36" stroke-width="1.1" fill="none"/><path d="M335.9,86.5 L327.2,97.1 L316.5,107.6 L307.1,118.2 L298.9,128.7" stroke="#c8b08e" stroke-opacity="0.29" stroke-width="1.8" fill="none"/><path d="M328.3,126.5 L318.1,140.3 L306.0,154.1 L295.1,167.9 L285.4,181.7" stroke="#84694c" stroke-opacity="0.35" stroke-width="1.1" fill="none"/><path d="M410.4,231.7 L397.3,270.9 L382.2,310.0 L368.4,349.1 L355.8,388.2" stroke="#d0bc9e" stroke-opacity="0.15" stroke-width="1.4" fill="none"/><path d="M191.0,118.8 L155.8,145.8 L118.5,172.8 L82.6,199.8 L47.9,226.7" stroke="#84694c" stroke-opacity="0.37" stroke-width="1.8" fill="none"/><path d="M-13.4,243.3 L-56.1,273.7 L-100.8,304.1 L-144.2,334.4 L-186.5,364.8" stroke="#7a6046" stroke-opacity="0.20" stroke-width="1.4" fill="none"/><path d="M304.9,60.9 L255.7,104.2 L204.5,147.5 L154.6,190.7 L105.8,234.0" stroke="#d0bc9e" stroke-opacity="0.40" stroke-width="1.4" fill="none"/><path d="M177.5,297.6 L157.0,323.4 L134.4,349.2 L113.1,375.0 L93.0,400.9" stroke="#84694c" stroke-opacity="0.16" stroke-width="0.7" fill="none"/><path d="M418.6,114.7 L412.1,129.8 L403.6,144.9 L396.4,160.0 L390.4,175.0" stroke="#c8b08e" stroke-opacity="0.49" stroke-width="0.5" fill="none"/><path d="M249.1,281.7 L237.7,299.3 L224.3,317.0 L212.1,334.7 L201.2,352.4" stroke="#bea684" stroke-opacity="0.23" stroke-width="1.8" fill="none"/><path d="M-202.3,382.1 L-224.9,398.6 L-249.6,415.1 L-272.9,431.7 L-295.0,448.2" stroke="#7a6046" stroke-opacity="0.43" stroke-width="1.8" fill="none"/><path d="M128.7,261.2 L111.7,278.7 L92.7,296.1 L74.9,313.5 L58.4,331.0" stroke="#bea684" stroke-opacity="0.37" stroke-width="1.4" fill="none"/><path d="M297.1,74.5 L247.8,119.3 L196.4,164.0 L146.4,208.8 L97.5,253.5" stroke="#7a6046" stroke-opacity="0.35" stroke-width="0.5" fill="none"/><path d="M522.4,42.3 L520.4,66.1 L516.4,89.9 L513.7,113.7 L512.2,137.4" stroke="#84694c" stroke-opacity="0.37" stroke-width="0.7" fill="none"/><path d="M365.7,42.0 L334.8,75.4 L301.8,108.8 L270.2,142.2 L239.7,175.6" stroke="#c8b08e" stroke-opacity="0.32" stroke-width="0.9" fill="none"/><path d="M33.6,360.7 L11.7,383.2 L-12.2,405.7 L-34.8,428.2 L-56.3,450.7" stroke="#c8b08e" stroke-opacity="0.32" stroke-width="1.8" fill="none"/><path d="M412.6,180.5 L407.4,195.4 L400.2,210.3 L394.3,225.1 L389.5,240.0" stroke="#6e553c" stroke-opacity="0.41" stroke-width="2.2" fill="none"/><path d="M209.9,239.0 L174.4,280.9 L136.8,322.8 L100.5,364.7 L65.4,406.5" stroke="#6e553c" stroke-opacity="0.24" stroke-width="0.5" fill="none"/><path d="M426.5,44.2 L410.1,71.9 L391.8,99.6 L374.7,127.3 L358.8,155.0" stroke="#bea684" stroke-opacity="0.31" stroke-width="0.5" fill="none"/><path d="M459.6,186.6 L452.8,216.5 L444.0,246.5 L436.4,276.4 L430.1,306.3" stroke="#bea684" stroke-opacity="0.31" stroke-width="2.2" fill="none"/><path d="M171.3,186.4 L140.0,215.0 L106.8,243.6 L74.8,272.2 L43.9,300.7" stroke="#7a6046" stroke-opacity="0.23" stroke-width="0.5" fill="none"/><path d="M66.6,328.4 L45.0,350.6 L21.3,372.9 L-1.0,395.1 L-22.1,417.3" stroke="#d0bc9e" stroke-opacity="0.32" stroke-width="0.7" fill="none"/><path d="M488.2,217.3 L482.4,260.0 L474.6,302.7 L468.1,345.4 L462.7,388.1" stroke="#c8b08e" stroke-opacity="0.34" stroke-width="1.1" fill="none"/><path d="M102.6,213.9 L51.7,255.9 L-1.1,298.0 L-52.6,340.0 L-103.0,382.1" stroke="#84694c" stroke-opacity="0.46" stroke-width="1.8" fill="none"/><path d="M439.3,54.9 L427.8,78.4 L414.3,102.0 L402.0,125.5 L391.0,149.0" stroke="#c8b08e" stroke-opacity="0.50" stroke-width="2.2" fill="none"/><path d="M386.7,105.1 L376.9,122.0 L365.0,138.9 L354.5,155.8 L345.1,172.7" stroke="#7a6046" stroke-opacity="0.46" stroke-width="2.2" fill="none"/><path d="M495.8,62.8 L493.5,75.8 L489.3,88.9 L486.3,101.9 L484.5,114.9" stroke="#c8b08e" stroke-opacity="0.17" stroke-width="1.8" fill="none"/><path d="M194.0,101.3 L173.7,116.1 L151.4,131.0 L130.3,145.9 L110.5,160.8" stroke="#7a6046" stroke-opacity="0.26" stroke-width="1.1" fill="none"/><path d="M259.2,247.1 L231.0,287.0 L200.8,327.0 L171.9,366.9 L144.2,406.8" stroke="#bea684" stroke-opacity="0.25" stroke-width="2.2" fill="none"/><path d="M218.5,169.1 L205.0,182.9 L189.5,196.7 L175.2,210.5 L162.2,224.3" stroke="#84694c" stroke-opacity="0.35" stroke-width="0.7" fill="none"/><path d="M22.9,245.5 L-41.7,294.6 L-108.4,343.8 L-173.8,392.9 L-238.0,442.1" stroke="#6e553c" stroke-opacity="0.19" stroke-width="1.8" fill="none"/><path d="M36.2,389.2 L-1.4,429.6 L-41.0,470.0 L-79.2,510.4 L-116.4,550.8" stroke="#c8b08e" stroke-opacity="0.16" stroke-width="1.4" fill="none"/><path d="M450.9,72.9 L436.9,107.6 L420.9,142.3 L406.2,177.0 L392.6,211.7" stroke="#84694c" stroke-opacity="0.17" stroke-width="0.9" fill="none"/><path d="M509.1,135.5 L507.4,155.6 L503.7,175.6 L501.2,195.7 L500.0,215.7" stroke="#7a6046" stroke-opacity="0.16" stroke-width="0.7" fill="none"/><path d="M219.9,315.0 L189.2,359.8 L156.4,404.6 L125.0,449.4 L94.7,494.2" stroke="#84694c" stroke-opacity="0.26" stroke-width="1.4" fill="none"/><path d="M-30.0,274.2 L-40.0,282.0 L-52.0,289.9 L-62.7,297.8 L-72.2,305.6" stroke="#7a6046" stroke-opacity="0.35" stroke-width="0.7" fill="none"/><path d="M-88.3,319.7 L-108.6,335.2 L-130.9,350.7 L-151.9,366.2 L-171.7,381.7" stroke="#c8b08e" stroke-opacity="0.33" stroke-width="2.2" fill="none"/><path d="M446.8,94.9 L437.1,121.0 L425.3,147.1 L414.8,173.2 L405.5,199.3" stroke="#c8b08e" stroke-opacity="0.48" stroke-width="2.2" fill="none"/><path d="M106.5,182.2 L96.9,190.0 L85.2,197.9 L74.8,205.7 L65.6,213.5" stroke="#c8b08e" stroke-opacity="0.39" stroke-width="1.4" fill="none"/><path d="M499.4,62.8 L491.6,103.2 L481.7,143.5 L473.1,183.8 L465.7,224.1" stroke="#6e553c" stroke-opacity="0.33" stroke-width="0.7" fill="none"/><path d="M363.5,252.2 L359.1,263.6 L352.7,275.1 L347.5,286.6 L343.5,298.0" stroke="#d0bc9e" stroke-opacity="0.20" stroke-width="0.5" fill="none"/><path d="M-45.6,410.8 L-67.9,432.5 L-92.2,454.3 L-115.1,476.0 L-137.0,497.8" stroke="#7a6046" stroke-opacity="0.38" stroke-width="1.1" fill="none"/><path d="M353.6,51.5 L332.9,73.9 L310.1,96.2 L288.6,118.5 L268.3,140.9" stroke="#7a6046" stroke-opacity="0.16" stroke-width="0.7" fill="none"/><path d="M217.7,272.6 L204.2,291.0 L188.6,309.3 L174.3,327.7 L161.2,346.1" stroke="#6e553c" stroke-opacity="0.32" stroke-width="1.8" fill="none"/><path d="M291.0,141.1 L274.2,161.0 L255.5,180.9 L238.0,200.7 L221.7,220.6" stroke="#84694c" stroke-opacity="0.31" stroke-width="1.8" fill="none"/><path d="M268.2,135.3 L250.6,154.0 L231.0,172.7 L212.7,191.4 L195.6,210.1" stroke="#7a6046" stroke-opacity="0.16" stroke-width="0.7" fill="none"/><path d="M230.8,115.1 L206.6,135.9 L180.3,156.8 L155.4,177.6 L131.7,198.4" stroke="#6e553c" stroke-opacity="0.20" stroke-width="2.2" fill="none"/><path d="M397.7,50.9 L382.2,72.7 L364.8,94.5 L348.6,116.4 L333.7,138.2" stroke="#6e553c" stroke-opacity="0.16" stroke-width="2.2" fill="none"/><path d="M86.5,389.5 L73.2,405.9 L57.9,422.4 L43.9,438.8 L31.1,455.3" stroke="#84694c" stroke-opacity="0.19" stroke-width="0.5" fill="none"/><path d="M179.4,215.8 L163.2,232.7 L144.9,249.6 L128.0,266.4 L112.2,283.3" stroke="#d0bc9e" stroke-opacity="0.19" stroke-width="0.7" fill="none"/><path d="M308.0,66.9 L255.1,115.3 L200.2,163.7 L146.6,212.1 L94.1,260.5" stroke="#bea684" stroke-opacity="0.42" stroke-width="0.7" fill="none"/><path d="M396.3,84.0 L384.6,103.3 L371.0,122.6 L358.6,142.0 L347.4,161.3" stroke="#6e553c" stroke-opacity="0.29" stroke-width="2.2" fill="none"/><path d="M313.0,46.1 L300.0,57.5 L285.1,68.8 L271.5,80.2 L259.0,91.6" stroke="#c8b08e" stroke-opacity="0.16" stroke-width="1.8" fill="none"/><path d="M450.1,304.8 L449.1,313.3 L446.1,321.8 L444.4,330.2 L443.8,338.7" stroke="#bea684" stroke-opacity="0.41" stroke-width="1.8" fill="none"/><path d="M488.4,235.3 L484.8,265.2 L479.2,295.0 L474.9,324.9 L471.7,354.7" stroke="#84694c" stroke-opacity="0.34" stroke-width="0.9" fill="none"/><path d="M500.2,110.0 L497.1,132.4 L492.0,154.7 L488.2,177.1 L485.6,199.4" stroke="#84694c" stroke-opacity="0.45" stroke-width="2.2" fill="none"/><path d="M-32.1,427.5 L-73.8,469.7 L-117.5,512.0 L-159.9,554.2 L-201.1,596.5" stroke="#bea684" stroke-opacity="0.15" stroke-width="0.5" fill="none"/><path d="M270.7,202.7 L233.6,251.0 L194.4,299.4 L156.6,347.7 L119.9,396.1" stroke="#d0bc9e" stroke-opacity="0.46" stroke-width="0.5" fill="none"/><path d="M248.4,359.9 L233.9,386.1 L217.3,412.3 L202.0,438.5 L187.9,464.7" stroke="#84694c" stroke-opacity="0.27" stroke-width="1.4" fill="none"/><path d="M474.3,144.8 L463.1,194.6 L449.9,244.4 L438.0,294.2 L427.3,344.0" stroke="#c8b08e" stroke-opacity="0.43" stroke-width="1.8" fill="none"/><path d="M110.7,307.3 L67.4,353.4 L22.0,399.5 L-22.0,445.7 L-64.9,491.8" stroke="#c8b08e" stroke-opacity="0.32" stroke-width="1.4" fill="none"/><path d="M194.3,315.2 L177.4,338.5 L158.5,361.7 L141.0,385.0 L124.6,408.2" stroke="#bea684" stroke-opacity="0.35" stroke-width="1.1" fill="none"/><path d="M317.4,94.8 L298.6,115.5 L277.9,136.2 L258.4,157.0 L240.1,177.7" stroke="#c8b08e" stroke-opacity="0.50" stroke-width="0.7" fill="none"/><path d="M149.4,173.1 L117.8,199.2 L84.3,225.3 L52.0,251.4 L20.9,277.6" stroke="#d0bc9e" stroke-opacity="0.40" stroke-width="0.5" fill="none"/><path d="M425.6,225.2 L411.0,273.2 L394.5,321.2 L379.2,369.2 L365.1,417.1" stroke="#7a6046" stroke-opacity="0.40" stroke-width="0.5" fill="none"/><path d="M290.7,297.3 L270.2,334.5 L247.7,371.7 L226.5,408.9 L206.5,446.1" stroke="#7a6046" stroke-opacity="0.17" stroke-width="1.1" fill="none"/><path d="M237.4,334.9 L230.9,346.2 L222.5,357.6 L215.3,369.0 L209.2,380.3" stroke="#d0bc9e" stroke-opacity="0.41" stroke-width="1.4" fill="none"/><path d="M293.6,137.4 L284.6,148.3 L273.7,159.3 L264.0,170.3 L255.5,181.3" stroke="#c8b08e" stroke-opacity="0.28" stroke-width="1.1" fill="none"/><path d="M292.2,212.0 L283.0,226.2 L271.8,240.4 L261.8,254.6 L253.1,268.8" stroke="#6e553c" stroke-opacity="0.37" stroke-width="0.9" fill="none"/><path d="M149.8,138.9 L124.7,157.6 L97.6,176.2 L71.9,194.9 L47.3,213.5" stroke="#7a6046" stroke-opacity="0.21" stroke-width="1.8" fill="none"/><path d="M403.0,73.8 L379.5,111.6 L354.1,149.4 L329.9,187.2 L306.9,225.0" stroke="#7a6046" stroke-opacity="0.43" stroke-width="1.8" fill="none"/><path d="M132.5,404.8 L106.2,441.1 L77.9,477.3 L50.9,513.5 L25.0,549.8" stroke="#84694c" stroke-opacity="0.17" stroke-width="2.2" fill="none"/><path d="M264.3,106.2 L238.7,129.9 L211.2,153.6 L184.9,177.3 L159.8,201.0" stroke="#c8b08e" stroke-opacity="0.23" stroke-width="1.8" fill="none"/><path d="M319.3,403.2 L302.6,446.0 L283.8,488.7 L266.4,531.5 L250.1,574.2" stroke="#84694c" stroke-opacity="0.49" stroke-width="1.8" fill="none"/><path d="M247.2,290.0 L217.3,334.9 L185.4,379.9 L154.8,424.9 L125.4,469.9" stroke="#c8b08e" stroke-opacity="0.18" stroke-width="0.7" fill="none"/><path d="M433.6,147.4 L425.4,171.1 L415.3,194.8 L406.4,218.5 L398.7,242.2" stroke="#bea684" stroke-opacity="0.45" stroke-width="1.4" fill="none"/><path d="M493.0,395.6 L489.2,443.9 L483.4,492.2 L478.9,540.4 L475.6,588.7" stroke="#bea684" stroke-opacity="0.45" stroke-width="1.4" fill="none"/><path d="M149.5,143.2 L102.0,178.6 L52.5,214.0 L4.2,249.4 L-42.8,284.8" stroke="#bea684" stroke-opacity="0.28" stroke-width="1.4" fill="none"/><path d="M-123.5,351.2 L-169.9,386.4 L-218.3,421.5 L-265.4,456.7 L-311.4,491.8" stroke="#7a6046" stroke-opacity="0.21" stroke-width="1.4" fill="none"/><path d="M378.3,186.1 L354.7,234.8 L329.2,283.4 L305.0,332.1 L281.9,380.8" stroke="#7a6046" stroke-opacity="0.23" stroke-width="0.9" fill="none"/><path d="M119.8,151.4 L49.3,201.4 L-23.2,251.4 L-94.4,301.3 L-164.5,351.3" stroke="#84694c" stroke-opacity="0.28" stroke-width="1.8" fill="none"/><path d="M328.8,195.9 L317.5,215.1 L304.1,234.3 L292.1,253.5 L281.2,272.6" stroke="#84694c" stroke-opacity="0.37" stroke-width="1.8" fill="none"/><path d="M300.5,86.8 L270.9,115.9 L239.2,144.9 L208.9,174.0 L179.7,203.0" stroke="#d0bc9e" stroke-opacity="0.18" stroke-width="0.7" fill="none"/><path d="M524.7,122.6 L523.4,151.8 L520.0,181.0 L518.0,210.2 L517.1,239.3" stroke="#c8b08e" stroke-opacity="0.41" stroke-width="2.2" fill="none"/><path d="M254.0,57.1 L199.6,95.8 L143.3,134.4 L88.2,173.0 L34.3,211.6" stroke="#c8b08e" stroke-opacity="0.31" stroke-width="1.4" fill="none"/><path d="M172.8,130.3 L126.9,165.0 L79.0,199.7 L32.4,234.5 L-13.1,269.2" stroke="#6e553c" stroke-opacity="0.15" stroke-width="1.4" fill="none"/><path d="M447.5,99.5 L434.5,134.6 L419.4,169.7 L405.7,204.8 L393.1,239.8" stroke="#6e553c" stroke-opacity="0.16" stroke-width="1.4" fill="none"/><path d="M499.9,263.9 L498.4,285.5 L494.8,307.1 L492.6,328.6 L491.5,350.2" stroke="#d0bc9e" stroke-opacity="0.18" stroke-width="1.4" fill="none"/><path d="M45.1,209.2 L1.1,241.0 L-44.9,272.9 L-89.6,304.7 L-133.2,336.6" stroke="#bea684" stroke-opacity="0.40" stroke-width="1.8" fill="none"/><path d="M460.8,388.4 L455.7,426.0 L448.6,463.7 L442.8,501.3 L438.1,538.9" stroke="#6e553c" stroke-opacity="0.31" stroke-width="1.4" fill="none"/><path d="M102.0,421.3 L67.4,466.6 L30.9,511.9 L-4.3,557.1 L-38.4,602.4" stroke="#c8b08e" stroke-opacity="0.42" stroke-width="1.1" fill="none"/><path d="M281.5,168.0 L265.2,188.4 L246.8,208.8 L229.8,229.2 L214.0,249.6" stroke="#6e553c" stroke-opacity="0.15" stroke-width="0.5" fill="none"/><path d="M13.6,315.8 L-33.2,357.2 L-81.9,398.5 L-129.3,439.8 L-175.6,481.2" stroke="#84694c" stroke-opacity="0.16" stroke-width="1.8" fill="none"/><path d="M490.2,70.6 L483.4,101.0 L474.6,131.4 L467.1,161.8 L460.7,192.2" stroke="#bea684" stroke-opacity="0.30" stroke-width="1.4" fill="none"/><path d="M376.1,67.2 L338.6,115.7 L299.2,164.2 L261.1,212.6 L224.1,261.1" stroke="#bea684" stroke-opacity="0.40" stroke-width="2.2" fill="none"/><path d="M288.2,115.8 L246.3,159.5 L202.4,203.1 L159.8,246.8 L118.3,290.5" stroke="#bea684" stroke-opacity="0.44" stroke-width="0.5" fill="none"/><path d="M318.6,422.2 L308.3,450.0 L296.0,477.9 L285.1,505.7 L275.2,533.5" stroke="#bea684" stroke-opacity="0.28" stroke-width="0.7" fill="none"/><path d="M498.0,320.3 L495.7,351.2 L491.4,382.1 L488.4,412.9 L486.6,443.8" stroke="#c8b08e" stroke-opacity="0.19" stroke-width="1.1" fill="none"/><path d="M503.8,82.9 L498.6,116.7 L491.4,150.4 L485.5,184.2 L480.8,217.9" stroke="#c8b08e" stroke-opacity="0.47" stroke-width="1.1" fill="none"/><path d="M271.8,311.3 L266.5,321.4 L259.2,331.6 L253.2,341.7 L248.4,351.9" stroke="#c8b08e" stroke-opacity="0.25" stroke-width="2.2" fill="none"/><path d="M206.2,231.1 L169.4,273.1 L130.6,315.0 L93.1,357.0 L56.7,398.9" stroke="#6e553c" stroke-opacity="0.35" stroke-width="1.8" fill="none"/><path d="M299.9,104.1 L279.1,126.3 L256.2,148.4 L234.6,170.6 L214.2,192.7" stroke="#6e553c" stroke-opacity="0.16" stroke-width="1.1" fill="none"/><path d="M319.8,135.9 L289.6,174.9 L257.3,214.0 L226.3,253.0 L196.4,292.1" stroke="#6e553c" stroke-opacity="0.45" stroke-width="0.5" fill="none"/><path d="M187.4,227.9 L163.8,253.4 L138.3,278.9 L114.0,304.4 L90.9,329.9" stroke="#84694c" stroke-opacity="0.17" stroke-width="2.2" fill="none"/><path d="M224.5,247.8 L190.6,290.5 L154.7,333.1 L120.2,375.8 L86.8,418.5" stroke="#7a6046" stroke-opacity="0.29" stroke-width="1.4" fill="none"/><path d="M259.2,420.5 L247.9,444.5 L234.6,468.4 L222.6,492.4 L211.8,516.3" stroke="#6e553c" stroke-opacity="0.25" stroke-width="0.7" fill="none"/><path d="M466.7,196.0 L458.7,234.8 L448.7,273.7 L439.9,312.6 L432.4,351.4" stroke="#d0bc9e" stroke-opacity="0.21" stroke-width="1.1" fill="none"/><path d="M190.6,384.0 L180.5,400.3 L168.3,416.6 L157.5,432.9 L147.8,449.2" stroke="#bea684" stroke-opacity="0.44" stroke-width="1.8" fill="none"/><path d="M406.5,51.1 L385.4,82.5 L362.2,114.0 L340.3,145.4 L319.6,176.8" stroke="#c8b08e" stroke-opacity="0.43" stroke-width="1.4" fill="none"/><path d="M501.4,241.2 L500.8,254.1 L498.1,267.0 L496.7,279.9 L496.5,292.8" stroke="#6e553c" stroke-opacity="0.45" stroke-width="0.9" fill="none"/><path d="M191.5,231.8 L146.4,280.9 L99.4,330.0 L53.7,379.0 L9.1,428.1" stroke="#6e553c" stroke-opacity="0.31" stroke-width="0.5" fill="none"/><path d="M265.7,246.4 L248.8,271.3 L229.9,296.2 L212.3,321.1 L195.8,346.0" stroke="#84694c" stroke-opacity="0.39" stroke-width="0.7" fill="none"/><path d="M387.1,59.4 L366.1,88.0 L343.0,116.6 L321.2,145.1 L300.6,173.7" stroke="#7a6046" stroke-opacity="0.36" stroke-width="1.1" fill="none"/><path d="M-86.8,425.8 L-129.1,464.8 L-173.4,503.9 L-216.5,542.9 L-258.3,581.9" stroke="#84694c" stroke-opacity="0.42" stroke-width="1.4" fill="none"/><path d="M387.6,118.7 L374.4,142.4 L359.2,166.0 L345.3,189.6 L332.6,213.3" stroke="#84694c" stroke-opacity="0.41" stroke-width="1.4" fill="none"/><path d="M177.3,429.1 L172.7,437.5 L166.0,446.0 L160.7,454.4 L156.5,462.9" stroke="#84694c" stroke-opacity="0.34" stroke-width="0.9" fill="none"/><path d="M204.2,276.4 L166.8,323.8 L127.4,371.2 L89.2,418.7 L52.3,466.1" stroke="#6e553c" stroke-opacity="0.38" stroke-width="0.9" fill="none"/><path d="M298.2,147.5 L259.9,194.2 L219.6,240.9 L180.5,287.5 L142.7,334.2" stroke="#bea684" stroke-opacity="0.34" stroke-width="0.9" fill="none"/><path d="M-56.4,381.9 L-103.6,424.1 L-152.8,466.3 L-200.8,508.5 L-247.6,550.7" stroke="#84694c" stroke-opacity="0.47" stroke-width="0.5" fill="none"/><path d="M353.5,171.2 L341.8,192.0 L328.0,212.8 L315.6,233.6 L304.3,254.4" stroke="#c8b08e" stroke-opacity="0.18" stroke-width="1.4" fill="none"/><path d="M125.3,207.1 L71.4,253.1 L15.6,299.2 L-39.0,345.2 L-92.4,391.3" stroke="#d0bc9e" stroke-opacity="0.36" stroke-width="2.2" fill="none"/><path d="M425.2,262.7 L420.6,280.9 L414.1,299.1 L408.8,317.3 L404.7,335.6" stroke="#bea684" stroke-opacity="0.32" stroke-width="0.7" fill="none"/><path d="M68.8,396.2 L45.1,424.1 L19.4,452.0 L-5.0,479.9 L-28.2,507.8" stroke="#7a6046" stroke-opacity="0.47" stroke-width="1.4" fill="none"/><path d="M188.5,243.8 L171.6,263.2 L152.7,282.5 L135.0,301.9 L118.6,321.3" stroke="#c8b08e" stroke-opacity="0.18" stroke-width="1.8" fill="none"/><path d="M342.4,221.6 L321.3,261.4 L298.2,301.3 L276.3,341.2 L255.7,381.1" stroke="#d0bc9e" stroke-opacity="0.20" stroke-width="0.7" fill="none"/><path d="M210.8,211.2 L178.8,246.4 L144.7,281.5 L111.9,316.7 L80.3,351.9" stroke="#c8b08e" stroke-opacity="0.29" stroke-width="0.5" fill="none"/><path d="M297.2,66.1 L244.0,112.5 L188.7,158.9 L134.7,205.3 L81.9,251.7" stroke="#c8b08e" stroke-opacity="0.46" stroke-width="2.2" fill="none"/><path d="M250.3,111.7 L213.0,145.1 L173.8,178.4 L135.8,211.8 L99.0,245.1" stroke="#d0bc9e" stroke-opacity="0.27" stroke-width="0.7" fill="none"/><path d="M194.2,351.0 L168.1,389.1 L140.0,427.2 L113.2,465.4 L87.6,503.5" stroke="#c8b08e" stroke-opacity="0.37" stroke-width="1.4" fill="none"/><path d="M435.9,85.1 L431.5,96.1 L425.2,107.0 L420.1,118.0 L416.2,129.0" stroke="#7a6046" stroke-opacity="0.37" stroke-width="2.2" fill="none"/><path d="M230.0,236.5 L208.3,263.9 L184.5,291.3 L162.1,318.7 L140.8,346.2" stroke="#84694c" stroke-opacity="0.25" stroke-width="1.8" fill="none"/><path d="M519.4,103.8 L517.5,131.3 L513.5,158.7 L510.9,186.1 L509.4,213.5" stroke="#84694c" stroke-opacity="0.34" stroke-width="0.7" fill="none"/><path d="M407.0,301.7 L401.6,322.0 L394.1,342.3 L388.0,362.6 L383.0,382.8" stroke="#84694c" stroke-opacity="0.17" stroke-width="1.8" fill="none"/><path d="M416.1,132.5 L397.1,175.4 L376.2,218.3 L356.5,261.2 L338.0,304.2" stroke="#84694c" stroke-opacity="0.24" stroke-width="1.4" fill="none"/><path d="M350.8,195.6 L342.0,212.4 L331.2,229.3 L321.7,246.1 L313.4,263.0" stroke="#6e553c" stroke-opacity="0.32" stroke-width="2.2" fill="none"/><path d="M287.5,121.4 L280.5,129.5 L271.5,137.5 L263.8,145.6 L257.3,153.6" stroke="#84694c" stroke-opacity="0.45" stroke-width="0.7" fill="none"/><path d="M418.0,409.3 L415.6,422.9 L411.3,436.6 L408.3,450.2 L406.4,463.8" stroke="#84694c" stroke-opacity="0.19" stroke-width="0.5" fill="none"/><path d="M-117.0,371.1 L-175.4,417.3 L-235.7,463.5 L-294.7,509.7 L-352.6,556.0" stroke="#6e553c" stroke-opacity="0.28" stroke-width="0.5" fill="none"/><path d="M290.2,63.8 L230.5,113.8 L168.8,163.8 L108.4,213.7 L49.1,263.7" stroke="#d0bc9e" stroke-opacity="0.49" stroke-width="1.8" fill="none"/><path d="M29.0,233.6 L-33.8,280.4 L-98.6,327.2 L-162.1,374.0 L-224.4,420.8" stroke="#84694c" stroke-opacity="0.36" stroke-width="0.7" fill="none"/><path d="M378.5,417.7 L370.9,446.2 L361.3,474.7 L353.0,503.3 L345.8,531.8" stroke="#7a6046" stroke-opacity="0.28" stroke-width="1.1" fill="none"/><path d="M496.4,52.5 L487.6,92.5 L476.7,132.5 L467.2,172.5 L458.8,212.5" stroke="#84694c" stroke-opacity="0.22" stroke-width="0.5" fill="none"/><path d="M36.2,330.2 L12.6,353.0 L-12.9,375.8 L-37.2,398.6 L-60.3,421.4" stroke="#84694c" stroke-opacity="0.39" stroke-width="0.7" fill="none"/><path d="M209.8,257.0 L194.9,275.9 L177.9,294.8 L162.3,313.8 L147.8,332.7" stroke="#c8b08e" stroke-opacity="0.23" stroke-width="0.5" fill="none"/><path d="M493.1,213.5 L488.3,253.3 L481.4,293.0 L475.8,332.8 L471.4,372.5" stroke="#d0bc9e" stroke-opacity="0.34" stroke-width="1.4" fill="none"/><path d="M374.7,170.6 L361.8,196.2 L346.9,221.7 L333.3,247.3 L320.8,272.8" stroke="#7a6046" stroke-opacity="0.23" stroke-width="0.9" fill="none"/><path d="M316.3,158.0 L294.9,187.6 L271.6,217.1 L249.5,246.6 L228.6,276.1" stroke="#84694c" stroke-opacity="0.24" stroke-width="2.2" fill="none"/><path d="M-62.9,274.8 L-96.5,298.6 L-132.0,322.3 L-166.2,346.1 L-199.3,369.9" stroke="#d0bc9e" stroke-opacity="0.36" stroke-width="1.8" fill="none"/><path d="M524.0,136.2 L522.0,175.0 L518.0,213.9 L515.3,252.7 L513.8,291.6" stroke="#84694c" stroke-opacity="0.19" stroke-width="0.9" fill="none"/><path d="M427.2,131.4 L414.6,163.2 L400.0,195.0 L386.6,226.7 L374.5,258.5" stroke="#d0bc9e" stroke-opacity="0.21" stroke-width="0.9" fill="none"/><path d="M232.9,292.8 L207.6,329.6 L180.2,366.4 L154.2,403.2 L129.3,440.0" stroke="#bea684" stroke-opacity="0.47" stroke-width="2.2" fill="none"/><path d="M419.0,46.0 L405.7,67.5 L390.4,89.1 L376.5,110.6 L363.7,132.2" stroke="#7a6046" stroke-opacity="0.48" stroke-width="0.7" fill="none"/><path d="M298.9,93.8 L261.4,131.2 L221.8,168.7 L183.6,206.1 L146.5,243.6" stroke="#bea684" stroke-opacity="0.38" stroke-width="0.9" fill="none"/><path d="M421.7,392.4 L415.4,423.3 L407.2,454.2 L400.2,485.0 L394.4,515.9" stroke="#84694c" stroke-opacity="0.36" stroke-width="0.5" fill="none"/><path d="M182.4,338.4 L162.8,365.7 L141.2,393.0 L120.9,420.3 L101.7,447.6" stroke="#7a6046" stroke-opacity="0.36" stroke-width="1.1" fill="none"/><path d="M476.6,160.2 L466.6,209.3 L454.5,258.4 L443.7,307.5 L434.2,356.6" stroke="#bea684" stroke-opacity="0.26" stroke-width="2.2" fill="none"/><path d="M342.3,214.1 L336.0,226.8 L327.7,239.4 L320.7,252.0 L314.8,264.6" stroke="#7a6046" stroke-opacity="0.15" stroke-width="0.5" fill="none"/><path d="M21.2,390.1 L-21.3,434.5 L-65.9,479.0 L-109.2,523.4 L-151.4,567.9" stroke="#d0bc9e" stroke-opacity="0.30" stroke-width="2.2" fill="none"/><path d="M49.7,356.8 L22.7,385.0 L-6.3,413.2 L-34.0,441.4 L-60.5,469.6" stroke="#bea684" stroke-opacity="0.39" stroke-width="1.4" fill="none"/><path d="M-107.3,310.2 L-165.6,351.6 L-225.9,393.0 L-285.0,434.4 L-342.9,475.8" stroke="#c8b08e" stroke-opacity="0.24" stroke-width="1.1" fill="none"/><path d="M137.8,297.6 L102.0,337.5 L64.2,377.4 L27.6,417.3 L-7.7,457.2" stroke="#d0bc9e" stroke-opacity="0.45" stroke-width="1.4" fill="none"/><path d="M325.0,62.6 L278.5,107.6 L230.0,152.6 L182.8,197.6 L136.8,242.6" stroke="#84694c" stroke-opacity="0.16" stroke-width="0.5" fill="none"/><path d="M428.7,88.2 L414.8,118.0 L398.9,147.9 L384.2,177.7 L370.8,207.6" stroke="#d0bc9e" stroke-opacity="0.33" stroke-width="0.9" fill="none"/><path d="M325.0,74.2 L308.8,91.3 L290.5,108.4 L273.5,125.5 L257.7,142.6" stroke="#d0bc9e" stroke-opacity="0.34" stroke-width="0.7" fill="none"/><path d="M72.4,202.4 L7.3,251.0 L-59.9,299.7 L-125.7,348.4 L-190.4,397.1" stroke="#bea684" stroke-opacity="0.29" stroke-width="1.4" fill="none"/><path d="M227.0,346.4 L221.0,356.9 L212.9,367.4 L206.2,378.0 L200.6,388.5" stroke="#bea684" stroke-opacity="0.30" stroke-width="1.4" fill="none"/><path d="M-256.2,416.2 L-305.8,451.6 L-357.4,487.0 L-407.7,522.4 L-456.9,557.8" stroke="#84694c" stroke-opacity="0.21" stroke-width="1.8" fill="none"/><path d="M352.6,364.4 L344.1,389.0 L333.7,413.6 L324.5,438.2 L316.5,462.8" stroke="#7a6046" stroke-opacity="0.20" stroke-width="1.8" fill="none"/><path d="M479.9,301.2 L479.4,310.0 L476.9,318.8 L475.7,327.6 L475.6,336.3" stroke="#bea684" stroke-opacity="0.41" stroke-width="0.7" fill="none"/><path d="M407.5,45.3 L390.9,69.6 L372.3,93.9 L355.1,118.2 L338.9,142.5" stroke="#d0bc9e" stroke-opacity="0.34" stroke-width="0.7" fill="none"/><path d="M-71.4,282.1 L-114.2,312.4 L-159.0,342.7 L-202.5,373.0 L-244.8,403.3" stroke="#bea684" stroke-opacity="0.18" stroke-width="1.4" fill="none"/><path d="M-11.6,326.5 L-53.8,363.0 L-98.0,399.5 L-140.9,436.0 L-182.7,472.6" stroke="#bea684" stroke-opacity="0.48" stroke-width="0.5" fill="none"/><path d="M465.9,101.0 L455.6,136.1 L443.2,171.3 L432.2,206.4 L422.3,241.5" stroke="#7a6046" stroke-opacity="0.29" stroke-width="2.2" fill="none"/><path d="M46.0,370.2 L32.2,385.3 L16.4,400.3 L1.9,415.4 L-11.4,430.5" stroke="#7a6046" stroke-opacity="0.44" stroke-width="2.2" fill="none"/><path d="M321.4,176.8 L299.1,210.3 L274.7,243.8 L251.7,277.3 L229.8,310.8" stroke="#c8b08e" stroke-opacity="0.47" stroke-width="1.1" fill="none"/><path d="M118.1,165.4 L98.8,180.0 L77.6,194.7 L57.6,209.3 L38.8,223.9" stroke="#bea684" stroke-opacity="0.42" stroke-width="0.7" fill="none"/><path d="M141.7,394.2 L124.7,418.0 L105.8,441.7 L88.2,465.5 L71.7,489.2" stroke="#6e553c" stroke-opacity="0.20" stroke-width="1.1" fill="none"/><path d="M217.5,359.0 L199.2,388.5 L178.9,418.0 L159.9,447.4 L142.1,476.9" stroke="#84694c" stroke-opacity="0.42" stroke-width="2.2" fill="none"/><path d="M417.5,393.3 L410.5,426.3 L401.5,459.4 L393.8,492.5 L387.2,525.6" stroke="#7a6046" stroke-opacity="0.24" stroke-width="2.2" fill="none"/><path d="M155.2,296.8 L119.1,338.7 L81.0,380.7 L44.2,422.7 L8.5,464.6" stroke="#7a6046" stroke-opacity="0.17" stroke-width="2.2" fill="none"/><path d="M341.0,101.2 L322.9,124.2 L302.7,147.3 L283.9,170.3 L266.2,193.3" stroke="#d0bc9e" stroke-opacity="0.27" stroke-width="1.8" fill="none"/><path d="M358.1,308.9 L354.1,320.6 L348.0,332.4 L343.3,344.2 L339.7,355.9" stroke="#84694c" stroke-opacity="0.33" stroke-width="1.8" fill="none"/><path d="M77.0,428.2 L46.3,466.9 L13.6,505.6 L-17.9,544.3 L-48.1,583.0" stroke="#84694c" stroke-opacity="0.42" stroke-width="1.1" fill="none"/><path d="M412.3,365.2 L405.3,395.4 L396.3,425.6 L388.6,455.8 L382.0,486.0" stroke="#84694c" stroke-opacity="0.31" stroke-width="0.7" fill="none"/><path d="M173.9,237.9 L128.1,286.1 L80.3,334.4 L33.8,382.6 L-11.5,430.9" stroke="#7a6046" stroke-opacity="0.21" stroke-width="1.8" fill="none"/><path d="M422.3,57.6 L401.5,93.6 L378.7,129.6 L357.3,165.6 L337.0,201.6" stroke="#7a6046" stroke-opacity="0.41" stroke-width="1.8" fill="none"/><path d="M449.3,240.7 L440.2,280.9 L429.1,321.2 L419.3,361.4 L410.7,401.6" stroke="#bea684" stroke-opacity="0.39" stroke-width="1.1" fill="none"/><path d="M348.5,105.7 L328.2,132.8 L305.9,160.0 L284.9,187.1 L265.0,214.2" stroke="#7a6046" stroke-opacity="0.41" stroke-width="0.5" fill="none"/><path d="M448.6,185.3 L438.6,222.5 L426.6,259.7 L416.0,296.9 L406.5,334.1" stroke="#84694c" stroke-opacity="0.27" stroke-width="0.5" fill="none"/><path d="M169.5,428.0 L164.6,436.8 L157.7,445.5 L152.0,454.2 L147.5,463.0" stroke="#d0bc9e" stroke-opacity="0.42" stroke-width="0.9" fill="none"/><path d="M503.2,98.0 L496.7,141.3 L488.2,184.7 L481.0,228.0 L475.0,271.4" stroke="#d0bc9e" stroke-opacity="0.21" stroke-width="0.5" fill="none"/><path d="M150.8,130.1 L137.0,140.3 L121.1,150.5 L106.6,160.8 L93.2,171.0" stroke="#bea684" stroke-opacity="0.37" stroke-width="1.4" fill="none"/><path d="M376.9,64.7 L359.6,87.5 L340.3,110.3 L322.2,133.0 L305.4,155.8" stroke="#c8b08e" stroke-opacity="0.35" stroke-width="1.4" fill="none"/><path d="M378.5,415.4 L366.1,459.9 L351.8,504.3 L338.7,548.7 L326.8,593.2" stroke="#6e553c" stroke-opacity="0.21" stroke-width="0.9" fill="none"/><path d="M56.6,403.5 L14.8,451.4 L-29.0,499.4 L-71.6,547.4 L-112.9,595.4" stroke="#c8b08e" stroke-opacity="0.46" stroke-width="0.9" fill="none"/><path d="M419.8,335.7 L414.7,358.4 L407.6,381.0 L401.8,403.7 L397.1,426.4" stroke="#7a6046" stroke-opacity="0.21" stroke-width="1.8" fill="none"/><path d="M182.2,112.3 L132.7,148.2 L81.2,184.0 L31.0,219.9 L-18.1,255.8" stroke="#c8b08e" stroke-opacity="0.46" stroke-width="1.8" fill="none"/><path d="M125.8,350.0 L92.6,390.3 L57.3,430.5 L23.4,470.8 L-9.3,511.1" stroke="#bea684" stroke-opacity="0.26" stroke-width="0.5" fill="none"/><path d="M472.7,336.7 L466.9,381.6 L459.0,426.6 L452.4,471.5 L447.0,516.5" stroke="#7a6046" stroke-opacity="0.37" stroke-width="0.7" fill="none"/><path d="M206.7,319.0 L178.0,359.7 L147.3,400.3 L117.9,440.9 L89.7,481.5" stroke="#6e553c" stroke-opacity="0.45" stroke-width="0.7" fill="none"/><path d="M-141.4,385.8 L-170.2,408.7 L-201.0,431.6 L-230.5,454.5 L-258.8,477.5" stroke="#d0bc9e" stroke-opacity="0.36" stroke-width="1.8" fill="none"/><path d="M-29.6,320.2 L-89.1,369.2 L-150.5,418.1 L-210.6,467.0 L-269.6,515.9" stroke="#bea684" stroke-opacity="0.33" stroke-width="1.8" fill="none"/><path d="M376.5,86.7 L354.7,118.2 L330.8,149.6 L308.2,181.0 L286.8,212.5" stroke="#bea684" stroke-opacity="0.39" stroke-width="1.8" fill="none"/><path d="M22.0,427.8 L-3.7,456.9 L-31.4,486.0 L-57.9,515.1 L-83.1,544.2" stroke="#d0bc9e" stroke-opacity="0.43" stroke-width="2.2" fill="none"/><path d="M293.0,116.1 L264.7,146.4 L234.4,176.7 L205.4,207.1 L177.6,237.4" stroke="#c8b08e" stroke-opacity="0.41" stroke-width="2.2" fill="none"/><path d="M497.2,72.4 L493.3,94.1 L487.5,115.7 L482.9,137.3 L479.5,159.0" stroke="#bea684" stroke-opacity="0.49" stroke-width="2.2" fill="none"/><path d="M103.2,278.9 L81.5,300.6 L57.7,322.3 L35.2,344.1 L13.8,365.8" stroke="#7a6046" stroke-opacity="0.24" stroke-width="1.1" fill="none"/><path d="M96.6,213.9 L54.7,248.2 L10.8,282.6 L-31.9,316.9 L-73.4,351.3" stroke="#bea684" stroke-opacity="0.28" stroke-width="0.5" fill="none"/><path d="M266.1,138.1 L236.7,168.9 L205.3,199.8 L175.1,230.6 L146.2,261.5" stroke="#84694c" stroke-opacity="0.23" stroke-width="0.5" fill="none"/><path d="M468.3,42.4 L456.5,73.7 L442.6,105.1 L430.1,136.4 L418.7,167.7" stroke="#84694c" stroke-opacity="0.45" stroke-width="0.7" fill="none"/><path d="M361.6,370.5 L359.0,380.0 L354.4,389.5 L351.1,399.0 L348.9,408.5" stroke="#6e553c" stroke-opacity="0.16" stroke-width="2.2" fill="none"/><path d="M229.2,286.1 L202.4,323.8 L173.7,361.5 L146.3,399.2 L120.0,436.9" stroke="#6e553c" stroke-opacity="0.23" stroke-width="0.7" fill="none"/><path d="M490.8,97.0 L488.9,108.9 L485.1,120.9 L482.5,132.8 L481.1,144.8" stroke="#6e553c" stroke-opacity="0.17" stroke-width="1.4" fill="none"/><path d="M155.5,231.8 L114.3,272.6 L71.0,313.5 L29.1,354.3 L-11.7,395.2" stroke="#7a6046" stroke-opacity="0.28" stroke-width="1.8" fill="none"/><path d="M-124.9,411.3 L-162.0,442.9 L-201.2,474.5 L-239.0,506.1 L-275.7,537.7" stroke="#bea684" stroke-opacity="0.32" stroke-width="1.4" fill="none"/><path d="M271.4,118.5 L237.3,152.4 L201.1,186.3 L166.2,220.2 L132.5,254.1" stroke="#7a6046" stroke-opacity="0.46" stroke-width="1.8" fill="none"/><path d="M90.1,359.9 L76.7,375.7 L61.4,391.4 L47.3,407.2 L34.4,422.9" stroke="#bea684" stroke-opacity="0.39" stroke-width="1.8" fill="none"/><path d="M-25.3,338.0 L-40.1,351.2 L-56.9,364.4 L-72.4,377.6 L-86.7,390.8" stroke="#84694c" stroke-opacity="0.16" stroke-width="2.2" fill="none"/><path d="M201.5,173.4 L178.7,195.4 L154.0,217.3 L130.5,239.2 L108.3,261.1" stroke="#7a6046" stroke-opacity="0.35" stroke-width="1.8" fill="none"/><path d="M227.6,185.5 L215.1,199.3 L200.6,213.2 L187.4,227.0 L175.4,240.9" stroke="#c8b08e" stroke-opacity="0.22" stroke-width="1.1" fill="none"/><path d="M378.8,198.5 L359.7,239.8 L338.7,281.1 L318.9,322.3 L300.4,363.6" stroke="#7a6046" stroke-opacity="0.48" stroke-width="1.1" fill="none"/><path d="M476.4,284.5 L471.9,317.8 L465.4,351.0 L460.3,384.3 L456.3,417.5" stroke="#d0bc9e" stroke-opacity="0.32" stroke-width="0.7" fill="none"/><path d="M370.7,55.4 L354.1,75.5 L335.5,95.7 L318.3,115.8 L302.1,136.0" stroke="#c8b08e" stroke-opacity="0.16" stroke-width="1.1" fill="none"/><path d="M473.5,194.5 L467.4,227.7 L459.2,260.9 L452.4,294.2 L446.7,327.4" stroke="#7a6046" stroke-opacity="0.46" stroke-width="2.2" fill="none"/><path d="M504.5,306.3 L504.0,321.3 L501.4,336.2 L500.2,351.2 L500.1,366.2" stroke="#d0bc9e" stroke-opacity="0.25" stroke-width="0.7" fill="none"/><path d="M289.1,47.8 L260.1,70.4 L229.1,93.1 L199.4,115.7 L170.8,138.3" stroke="#7a6046" stroke-opacity="0.34" stroke-width="0.5" fill="none"/><path d="M317.5,250.3 L300.0,282.3 L280.5,314.2 L262.3,346.1 L245.3,378.0" stroke="#6e553c" stroke-opacity="0.15" stroke-width="0.7" fill="none"/><path d="M309.4,51.3 L266.8,87.8 L222.2,124.2 L178.8,160.7 L136.7,197.2" stroke="#c8b08e" stroke-opacity="0.41" stroke-width="1.4" fill="none"/><path d="M394.8,372.1 L383.0,415.6 L369.3,459.1 L356.8,502.5 L345.5,546.0" stroke="#c8b08e" stroke-opacity="0.17" stroke-width="1.8" fill="none"/><ellipse cx="0" cy="0" rx="22" ry="75" fill="url(#lp)" transform="translate(258,228) rotate(35)"/><ellipse cx="0" cy="0" rx="30" ry="90" fill="url(#dp)" transform="translate(380,300) rotate(22)"/><ellipse cx="0" cy="0" rx="30" ry="90" fill="url(#dp)" transform="translate(150,170) rotate(40)"/><rect x="0" y="60" width="460" height="420" filter="url(#nz)" opacity="0.8"/></g></svg></div></div>
<div class="vr"><div class="strip"></div></div>
<svg style="position:absolute;left:0;top:0" width="972" height="586">
  <defs><clipPath id="vrc"><rect x="491" y="35" width="478" height="447"/></clipPath></defs>
  <g clip-path="url(#vrc)" stroke="#b4f0b4" stroke-width="1.8" fill="none">
    <line x1="491.5" y1="203.5" x2="604.5" y2="35.5"/>
    <line x1="785.5" y1="35.6" x2="968.6" y2="126"/>
    <line x1="491.3" y1="354.8" x2="745.5" y2="481.3"/>
    <line x1="845.8" y1="481.3" x2="968.3" y2="296.4"/>
  </g>
</svg>
<!-- main progress slider -->
<div class="track" style="left:4px;top:493px;width:965px;height:5px;background:#dcdcdc;"></div>
<div class="handle" style="left:4px;top:489px;width:13px;height:13px;"></div>
<!-- separator -->
<div style="position:absolute;left:771px;top:507px;width:1px;height:16px;background:#7c7c7c;"></div><div style="position:absolute;left:772px;top:507px;width:1px;height:1px;background:#b0b0b0;"></div>
<!-- playback speed slider -->
<div class="track" style="left:96px;top:538px;width:74px;height:5px;background:#ffffff;"></div>
<div class="handle" style="left:165px;top:534px;width:13px;height:13px;"></div>
<!-- paths combo -->
<div class="combo" style="left:340px;top:529px;width:113px;height:24px;"></div>
<div class="arrow" style="left:438px;top:539px;"></div>
<!-- toggles -->
<svg class="tog" style="left:504px;top:535px" width="18" height="12">
  <rect x="8" y="1.8" width="8.5" height="7.6" rx="2" fill="#900000" stroke="#3a2030" stroke-width="1"/>
  <rect x="1.5" y="1" width="8" height="9.5" rx="2.2" fill="#dedada" stroke="#333" stroke-width="1.2"/>
</svg>
<svg class="tog" style="left:688px;top:535px" width="18" height="12">
  <rect x="8" y="1.8" width="8.5" height="7.6" rx="2" fill="#900000" stroke="#3a2030" stroke-width="1"/>
  <rect x="1.5" y="1" width="8" height="9.5" rx="2.2" fill="#dedada" stroke="#333" stroke-width="1.2"/>
</svg>
<!-- view button -->
<div class="btn" style="left:816px;top:529px;width:80px;height:24px;"></div>
<!-- bottom combos -->
<div class="combo" style="left:7px;top:559px;width:142px;height:24px;"></div>
<div class="arrow" style="left:133px;top:569px;"></div>
<div class="combo" style="left:153px;top:559px;width:101px;height:24px;"></div>
<div class="arrow" style="left:238.5px;top:569px;"></div>
<!-- play / ok -->
<div class="btn" style="left:682px;top:559px;width:141px;height:24px;"></div>
<div class="btn" style="left:827px;top:559px;width:142px;height:24px;"></div>
<!-- frame edges -->
<div class="frame"></div>
<div style="position:absolute;left:970px;top:6px;width:1px;height:579px;background:#f6f6f6;"></div>

<div class="t" style="left:29.80px;top:9.84px;color:#868686;transform:scaleX(0.9737);">Preview - MillMage Core 0.8.00</div>
<div class="t" style="left:153.30px;top:509.84px;color:#0a0a0a;transform:scaleX(0.9661);">Cut distance: 1871 mm (~1:52)</div>
<div class="t" style="left:323.30px;top:509.84px;color:#0a0a0a;transform:scaleX(0.9654);">Rapid moves: 41 mm (~0:01)</div>
<div class="t" style="left:483.60px;top:509.84px;color:#0a0a0a;transform:scaleX(0.9829);">Total time estimated: 1:54</div>
<div class="t" style="left:809.80px;top:509.84px;color:#0a0a0a;transform:scaleX(0.9769);">1200.00 mm/m</div>
<div class="t" style="left:903.40px;top:509.84px;color:#0a0a0a;transform:scaleX(0.8994);">Z: 2.12</div>
<div class="t" style="left:3.60px;top:535.84px;color:#0a0a0a;transform:scaleX(0.9281);">Playback Speed</div>
<div class="t" style="left:188.90px;top:535.84px;color:#0a0a0a;transform:scaleX(0.8860);">x 40</div>
<div class="t" style="left:262.40px;top:535.84px;color:#0a0a0a;transform:scaleX(0.9519);">Paths in Sim:</div>
<div class="t" style="left:345.00px;top:535.84px;color:#0a0a0a;">All</div>
<div class="t" style="left:527.40px;top:535.84px;color:#0a0a0a;transform:scaleX(0.9631);">Show project shapes</div>
<div class="t" style="left:711.50px;top:535.84px;color:#0a0a0a;transform:scaleX(0.9840);">Show paint colors</div>
<div class="t" style="left:842.80px;top:535.84px;color:#0a0a0a;">View</div>
<div class="t" style="left:948.20px;top:535.84px;color:#0a0a0a;transform:scaleX(0.8647);">0:00</div>
<div class="t" style="left:12.60px;top:565.84px;color:#0a0a0a;">Hardwood</div>
<div class="t" style="left:157.80px;top:565.84px;color:#0a0a0a;">Normal Detail</div>
<div class="t" style="left:741.60px;top:565.84px;color:#0a0a0a;transform:scaleX(0.9082);">Play</div>
<div class="t" style="left:890.13px;top:565.84px;color:#0a0a0a;">Ok</div>
</div>
</body></html>
